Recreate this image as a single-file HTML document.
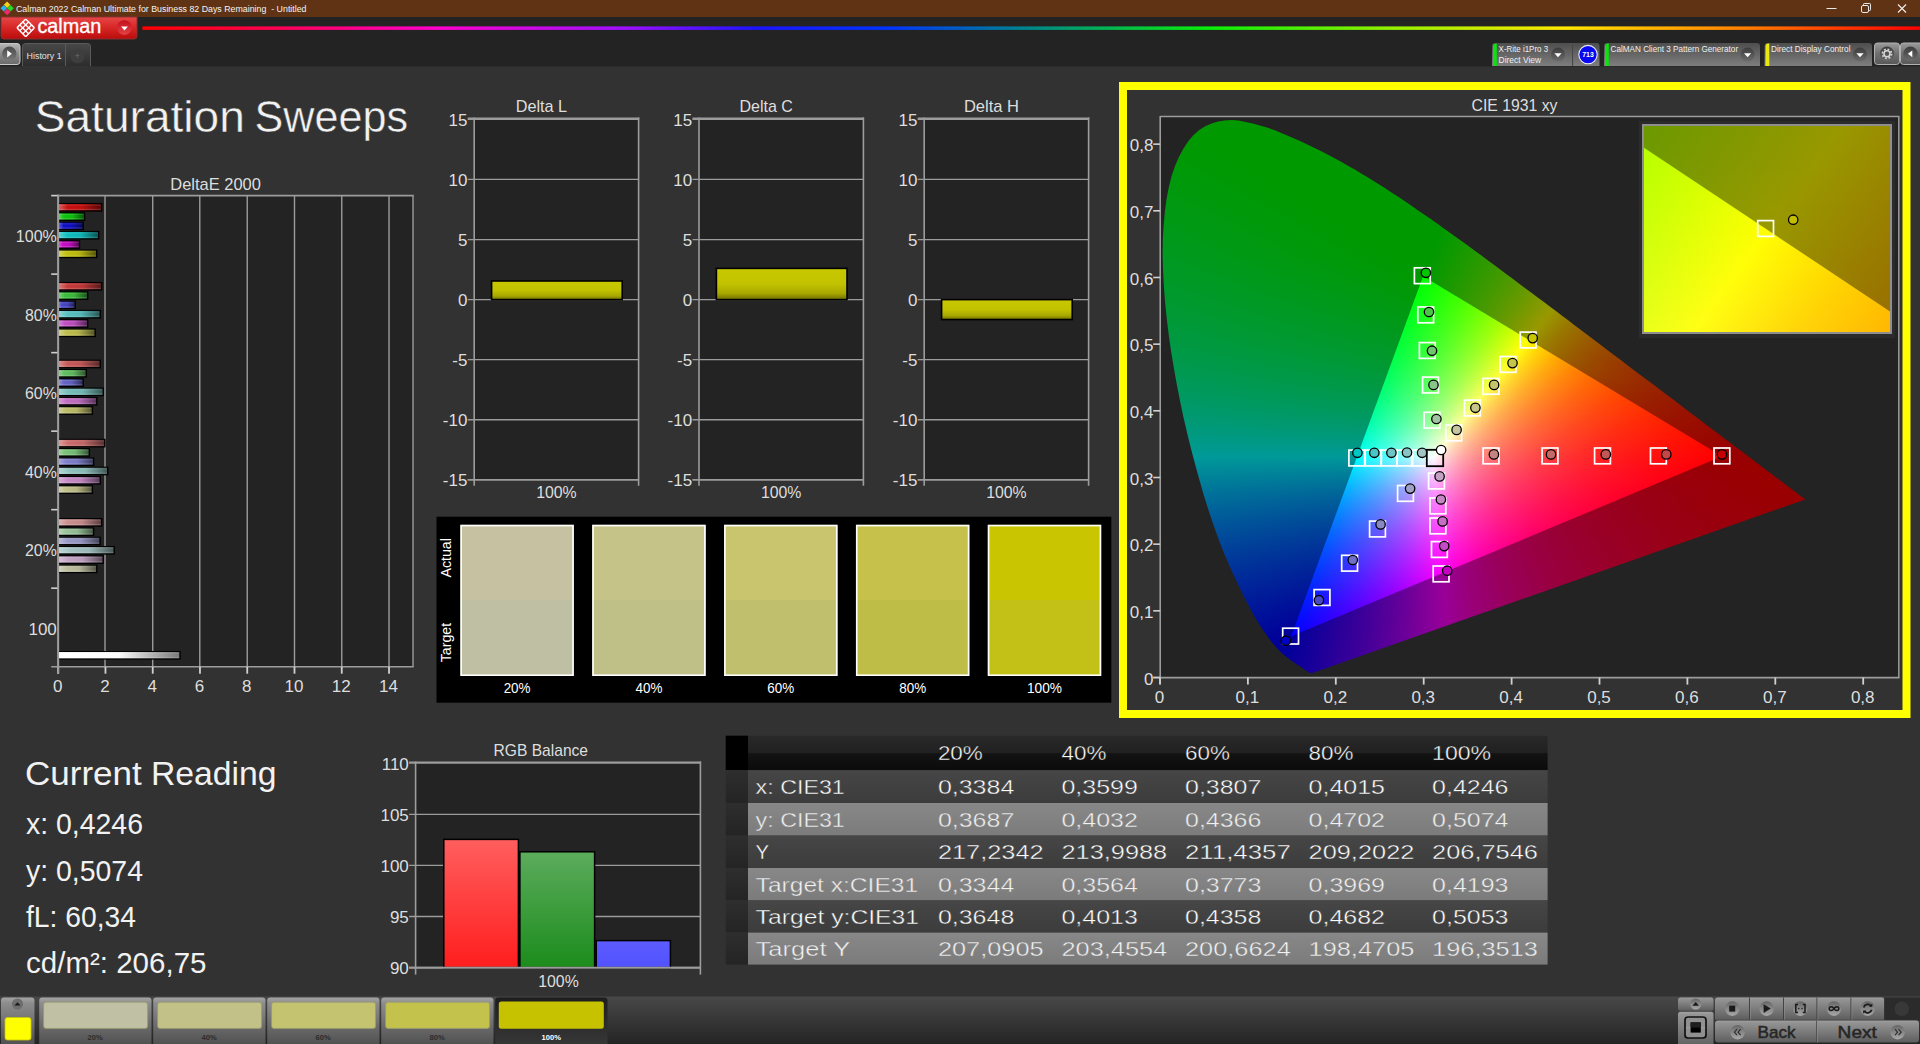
<!DOCTYPE html>
<html><head><meta charset="utf-8"><title>Calman</title>
<style>
html,body{margin:0;padding:0;background:#323232;overflow:hidden}
body{width:1920px;height:1044px;position:relative;font-family:"Liberation Sans", sans-serif}
.s{position:absolute;left:0;top:0}
.s text{font-family:"Liberation Sans", sans-serif}
.cl{position:absolute}
.cl i{display:block;height:1px}
</style></head><body>
<svg class="s" width="1920" height="1044" viewBox="0 0 1920 1044">
<defs><linearGradient id="cb" x1="0" y1="0" x2="0" y2="1"><stop offset="0" stop-color="#e64848"/><stop offset="0.45" stop-color="#d82828"/><stop offset="1" stop-color="#bb0c0c"/></linearGradient><linearGradient id="cdd" x1="0" y1="0" x2="0" y2="1"><stop offset="0" stop-color="#c40e1e"/><stop offset="1" stop-color="#e24444"/></linearGradient><linearGradient id="rb" x1="0" y1="0" x2="1" y2="0"><stop offset="0" stop-color="#ff0000"/><stop offset="0.08" stop-color="#ff0058"/><stop offset="0.165" stop-color="#ff00cc"/><stop offset="0.27" stop-color="#a010ff"/><stop offset="0.345" stop-color="#1c14ff"/><stop offset="0.42" stop-color="#0034ff"/><stop offset="0.5" stop-color="#008888"/><stop offset="0.6" stop-color="#08f008"/><stop offset="0.7" stop-color="#90f000"/><stop offset="0.8" stop-color="#ffe800"/><stop offset="0.9" stop-color="#ff8000"/><stop offset="1" stop-color="#ff0000"/></linearGradient><linearGradient id="pb" x1="0" y1="0" x2="0" y2="1"><stop offset="0" stop-color="#b8b8b8"/><stop offset="0.5" stop-color="#8a8a8a"/><stop offset="1" stop-color="#6a6a6a"/></linearGradient><linearGradient id="pc" x1="0" y1="0" x2="0" y2="1"><stop offset="0" stop-color="#4a4a4a"/><stop offset="1" stop-color="#7a7a7a"/></linearGradient><linearGradient id="tb" x1="0" y1="0" x2="0" y2="1"><stop offset="0" stop-color="#484848"/><stop offset="1" stop-color="#2c2c2c"/></linearGradient><linearGradient id="gb" x1="0" y1="0" x2="0" y2="1"><stop offset="0" stop-color="#4e4e4e"/><stop offset="1" stop-color="#7e7e7e"/></linearGradient><linearGradient id="dc" x1="0" y1="0" x2="0" y2="1"><stop offset="0" stop-color="#3c3c3c"/><stop offset="1" stop-color="#6c6c6c"/></linearGradient><linearGradient id="gb2" x1="0" y1="0" x2="0" y2="1"><stop offset="0" stop-color="#9a9a9a"/><stop offset="0.5" stop-color="#707070"/><stop offset="1" stop-color="#585858"/></linearGradient><linearGradient id="b1" x1="0" y1="0" x2="1" y2="0"><stop offset="0" stop-color="rgb(219, 99, 99)"/><stop offset="0.22" stop-color="rgb(200, 16, 16)"/><stop offset="0.55" stop-color="rgb(190, 15, 15)"/><stop offset="1" stop-color="rgb(90, 7, 7)"/></linearGradient><linearGradient id="b2" x1="0" y1="0" x2="1" y2="0"><stop offset="0" stop-color="rgb(99, 216, 99)"/><stop offset="0.22" stop-color="rgb(16, 196, 16)"/><stop offset="0.55" stop-color="rgb(15, 186, 15)"/><stop offset="1" stop-color="rgb(7, 88, 7)"/></linearGradient><linearGradient id="b3" x1="0" y1="0" x2="1" y2="0"><stop offset="0" stop-color="rgb(99, 99, 217)"/><stop offset="0.22" stop-color="rgb(16, 16, 198)"/><stop offset="0.55" stop-color="rgb(15, 15, 188)"/><stop offset="1" stop-color="rgb(7, 7, 89)"/></linearGradient><linearGradient id="b4" x1="0" y1="0" x2="1" y2="0"><stop offset="0" stop-color="rgb(99, 212, 212)"/><stop offset="0.22" stop-color="rgb(16, 190, 190)"/><stop offset="0.55" stop-color="rgb(15, 180, 180)"/><stop offset="1" stop-color="rgb(7, 85, 85)"/></linearGradient><linearGradient id="b5" x1="0" y1="0" x2="1" y2="0"><stop offset="0" stop-color="rgb(217, 99, 217)"/><stop offset="0.22" stop-color="rgb(198, 16, 198)"/><stop offset="0.55" stop-color="rgb(188, 15, 188)"/><stop offset="1" stop-color="rgb(89, 7, 89)"/></linearGradient><linearGradient id="b6" x1="0" y1="0" x2="1" y2="0"><stop offset="0" stop-color="rgb(214, 214, 99)"/><stop offset="0.22" stop-color="rgb(192, 192, 16)"/><stop offset="0.55" stop-color="rgb(182, 182, 15)"/><stop offset="1" stop-color="rgb(86, 86, 7)"/></linearGradient><linearGradient id="b7" x1="0" y1="0" x2="1" y2="0"><stop offset="0" stop-color="rgb(217, 126, 126)"/><stop offset="0.22" stop-color="rgb(198, 58, 58)"/><stop offset="0.55" stop-color="rgb(188, 55, 55)"/><stop offset="1" stop-color="rgb(89, 26, 26)"/></linearGradient><linearGradient id="b8" x1="0" y1="0" x2="1" y2="0"><stop offset="0" stop-color="rgb(129, 212, 129)"/><stop offset="0.22" stop-color="rgb(62, 190, 62)"/><stop offset="0.55" stop-color="rgb(58, 180, 58)"/><stop offset="1" stop-color="rgb(27, 85, 27)"/></linearGradient><linearGradient id="b9" x1="0" y1="0" x2="1" y2="0"><stop offset="0" stop-color="rgb(136, 136, 217)"/><stop offset="0.22" stop-color="rgb(72, 72, 198)"/><stop offset="0.55" stop-color="rgb(68, 68, 188)"/><stop offset="1" stop-color="rgb(32, 32, 89)"/></linearGradient><linearGradient id="b10" x1="0" y1="0" x2="1" y2="0"><stop offset="0" stop-color="rgb(146, 214, 214)"/><stop offset="0.22" stop-color="rgb(88, 192, 192)"/><stop offset="0.55" stop-color="rgb(83, 182, 182)"/><stop offset="1" stop-color="rgb(39, 86, 86)"/></linearGradient><linearGradient id="b11" x1="0" y1="0" x2="1" y2="0"><stop offset="0" stop-color="rgb(215, 142, 215)"/><stop offset="0.22" stop-color="rgb(194, 82, 194)"/><stop offset="0.55" stop-color="rgb(184, 77, 184)"/><stop offset="1" stop-color="rgb(87, 36, 87)"/></linearGradient><linearGradient id="b12" x1="0" y1="0" x2="1" y2="0"><stop offset="0" stop-color="rgb(212, 212, 139)"/><stop offset="0.22" stop-color="rgb(190, 190, 78)"/><stop offset="0.55" stop-color="rgb(180, 180, 74)"/><stop offset="1" stop-color="rgb(85, 85, 35)"/></linearGradient><linearGradient id="b13" x1="0" y1="0" x2="1" y2="0"><stop offset="0" stop-color="rgb(217, 146, 146)"/><stop offset="0.22" stop-color="rgb(198, 88, 88)"/><stop offset="0.55" stop-color="rgb(188, 83, 83)"/><stop offset="1" stop-color="rgb(89, 39, 39)"/></linearGradient><linearGradient id="b14" x1="0" y1="0" x2="1" y2="0"><stop offset="0" stop-color="rgb(152, 212, 152)"/><stop offset="0.22" stop-color="rgb(98, 190, 98)"/><stop offset="0.55" stop-color="rgb(93, 180, 93)"/><stop offset="1" stop-color="rgb(44, 85, 44)"/></linearGradient><linearGradient id="b15" x1="0" y1="0" x2="1" y2="0"><stop offset="0" stop-color="rgb(155, 155, 217)"/><stop offset="0.22" stop-color="rgb(102, 102, 198)"/><stop offset="0.55" stop-color="rgb(96, 96, 188)"/><stop offset="1" stop-color="rgb(45, 45, 89)"/></linearGradient><linearGradient id="b16" x1="0" y1="0" x2="1" y2="0"><stop offset="0" stop-color="rgb(165, 212, 210)"/><stop offset="0.22" stop-color="rgb(118, 190, 186)"/><stop offset="0.55" stop-color="rgb(112, 180, 176)"/><stop offset="1" stop-color="rgb(53, 85, 83)"/></linearGradient><linearGradient id="b17" x1="0" y1="0" x2="1" y2="0"><stop offset="0" stop-color="rgb(215, 162, 215)"/><stop offset="0.22" stop-color="rgb(194, 112, 194)"/><stop offset="0.55" stop-color="rgb(184, 106, 184)"/><stop offset="1" stop-color="rgb(87, 50, 87)"/></linearGradient><linearGradient id="b18" x1="0" y1="0" x2="1" y2="0"><stop offset="0" stop-color="rgb(212, 212, 159)"/><stop offset="0.22" stop-color="rgb(190, 190, 108)"/><stop offset="0.55" stop-color="rgb(180, 180, 102)"/><stop offset="1" stop-color="rgb(85, 85, 48)"/></linearGradient><linearGradient id="b19" x1="0" y1="0" x2="1" y2="0"><stop offset="0" stop-color="rgb(220, 159, 159)"/><stop offset="0.22" stop-color="rgb(202, 108, 108)"/><stop offset="0.55" stop-color="rgb(191, 102, 102)"/><stop offset="1" stop-color="rgb(90, 48, 48)"/></linearGradient><linearGradient id="b20" x1="0" y1="0" x2="1" y2="0"><stop offset="0" stop-color="rgb(168, 215, 168)"/><stop offset="0.22" stop-color="rgb(122, 194, 122)"/><stop offset="0.55" stop-color="rgb(115, 184, 115)"/><stop offset="1" stop-color="rgb(54, 87, 54)"/></linearGradient><linearGradient id="b21" x1="0" y1="0" x2="1" y2="0"><stop offset="0" stop-color="rgb(172, 172, 221)"/><stop offset="0.22" stop-color="rgb(128, 128, 204)"/><stop offset="0.55" stop-color="rgb(121, 121, 193)"/><stop offset="1" stop-color="rgb(57, 57, 91)"/></linearGradient><linearGradient id="b22" x1="0" y1="0" x2="1" y2="0"><stop offset="0" stop-color="rgb(182, 215, 212)"/><stop offset="0.22" stop-color="rgb(144, 194, 190)"/><stop offset="0.55" stop-color="rgb(136, 184, 180)"/><stop offset="1" stop-color="rgb(64, 87, 85)"/></linearGradient><linearGradient id="b23" x1="0" y1="0" x2="1" y2="0"><stop offset="0" stop-color="rgb(217, 178, 217)"/><stop offset="0.22" stop-color="rgb(198, 138, 198)"/><stop offset="0.55" stop-color="rgb(188, 131, 188)"/><stop offset="1" stop-color="rgb(89, 62, 89)"/></linearGradient><linearGradient id="b24" x1="0" y1="0" x2="1" y2="0"><stop offset="0" stop-color="rgb(214, 214, 178)"/><stop offset="0.22" stop-color="rgb(192, 192, 138)"/><stop offset="0.55" stop-color="rgb(182, 182, 131)"/><stop offset="1" stop-color="rgb(86, 86, 62)"/></linearGradient><linearGradient id="b25" x1="0" y1="0" x2="1" y2="0"><stop offset="0" stop-color="rgb(221, 182, 182)"/><stop offset="0.22" stop-color="rgb(204, 144, 144)"/><stop offset="0.55" stop-color="rgb(193, 136, 136)"/><stop offset="1" stop-color="rgb(91, 64, 64)"/></linearGradient><linearGradient id="b26" x1="0" y1="0" x2="1" y2="0"><stop offset="0" stop-color="rgb(189, 216, 189)"/><stop offset="0.22" stop-color="rgb(154, 196, 154)"/><stop offset="0.55" stop-color="rgb(146, 186, 146)"/><stop offset="1" stop-color="rgb(69, 88, 69)"/></linearGradient><linearGradient id="b27" x1="0" y1="0" x2="1" y2="0"><stop offset="0" stop-color="rgb(189, 189, 219)"/><stop offset="0.22" stop-color="rgb(154, 154, 200)"/><stop offset="0.55" stop-color="rgb(146, 146, 190)"/><stop offset="1" stop-color="rgb(69, 69, 90)"/></linearGradient><linearGradient id="b28" x1="0" y1="0" x2="1" y2="0"><stop offset="0" stop-color="rgb(195, 215, 215)"/><stop offset="0.22" stop-color="rgb(164, 194, 194)"/><stop offset="0.55" stop-color="rgb(155, 184, 184)"/><stop offset="1" stop-color="rgb(73, 87, 87)"/></linearGradient><linearGradient id="b29" x1="0" y1="0" x2="1" y2="0"><stop offset="0" stop-color="rgb(216, 195, 216)"/><stop offset="0.22" stop-color="rgb(196, 164, 196)"/><stop offset="0.55" stop-color="rgb(186, 155, 186)"/><stop offset="1" stop-color="rgb(88, 73, 88)"/></linearGradient><linearGradient id="b30" x1="0" y1="0" x2="1" y2="0"><stop offset="0" stop-color="rgb(212, 212, 193)"/><stop offset="0.22" stop-color="rgb(190, 190, 160)"/><stop offset="0.55" stop-color="rgb(180, 180, 152)"/><stop offset="1" stop-color="rgb(85, 85, 72)"/></linearGradient><linearGradient id="b31" x1="0" y1="0" x2="1" y2="0"><stop offset="0" stop-color="rgb(255, 255, 255)"/><stop offset="0.5" stop-color="rgb(250,250,250)"/><stop offset="1" stop-color="rgb(120, 120, 120)"/></linearGradient><linearGradient id="yb" x1="0" y1="0" x2="0" y2="1"><stop offset="0" stop-color="#c8c800"/><stop offset="0.5" stop-color="#c2c200"/><stop offset="0.8" stop-color="#a8a800"/><stop offset="1" stop-color="#6e6e00"/></linearGradient><linearGradient id="rr" x1="0" y1="0" x2="0" y2="1"><stop offset="0" stop-color="#ff5e5e"/><stop offset="1" stop-color="#ff1e1e"/></linearGradient><linearGradient id="rg" x1="0" y1="0" x2="0" y2="1"><stop offset="0" stop-color="#5cac5c"/><stop offset="1" stop-color="#1c8c1c"/></linearGradient><linearGradient id="rbb" x1="0" y1="0" x2="0" y2="1"><stop offset="0" stop-color="#5c5cff"/><stop offset="1" stop-color="#5252ff"/></linearGradient><linearGradient id="th" x1="0" y1="0" x2="0" y2="1"><stop offset="0" stop-color="#2a2a2a"/><stop offset="0.16" stop-color="#262626"/><stop offset="0.5" stop-color="#202020"/><stop offset="0.52" stop-color="#131313"/><stop offset="1" stop-color="#0b0b0b"/></linearGradient><linearGradient id="rd" x1="0" y1="0" x2="0" y2="1"><stop offset="0" stop-color="#464646"/><stop offset="1" stop-color="#3c3c3c"/></linearGradient><linearGradient id="rl" x1="0" y1="0" x2="0" y2="1"><stop offset="0" stop-color="#888888"/><stop offset="1" stop-color="#7b7b7b"/></linearGradient><linearGradient id="rs" x1="0" y1="0" x2="0" y2="1"><stop offset="0" stop-color="#2e2e2e"/><stop offset="1" stop-color="#242424"/></linearGradient><linearGradient id="bb" x1="0" y1="0" x2="0" y2="1"><stop offset="0" stop-color="#484848"/><stop offset="1" stop-color="#242424"/></linearGradient><linearGradient id="sb" x1="0" y1="0" x2="0" y2="1"><stop offset="0" stop-color="#a4a4a4"/><stop offset="0.12" stop-color="#8c8c8c"/><stop offset="1" stop-color="#4c4c4c"/></linearGradient><linearGradient id="sbs" x1="0" y1="0" x2="0" y2="1"><stop offset="0" stop-color="#1e1e1e"/><stop offset="1" stop-color="#383838"/></linearGradient><linearGradient id="cbt" x1="0" y1="0" x2="0" y2="1"><stop offset="0" stop-color="#a2a2a2"/><stop offset="0.08" stop-color="#949494"/><stop offset="0.5" stop-color="#7c7c7c"/><stop offset="1" stop-color="#5e5e5e"/></linearGradient><linearGradient id="cci" x1="0" y1="0" x2="0" y2="1"><stop offset="0" stop-color="#666666"/><stop offset="1" stop-color="#a8a8a8"/></linearGradient></defs>
<rect x="0" y="0" width="1920" height="1044" fill="#323232" />
<rect x="0" y="0" width="1920" height="17" fill="#5f3314" />
<rect x="0" y="17" width="1920" height="49.5" fill="#232323" />
<path d="M7.1 1.4L10.4 4.7L7.1 8L3.8 4.7Z" fill="#f2d21c"/>
<path d="M3.7 5L7 8.3L3.7 11.6L0.4 8.3Z" fill="#25b4ee"/>
<path d="M10.5 5L13.8 8.3L10.5 11.6L7.2 8.3Z" fill="#22dd22"/>
<path d="M7.1 8.6L10.4 11.9L7.1 15.2L3.8 11.9Z" fill="#f0286e"/>
<text x="16" y="12.2" font-size="9.7" fill="#f4f4f4" textLength="290.5" lengthAdjust="spacingAndGlyphs" xml:space="preserve">Calman 2022 Calman Ultimate for Business 82 Days Remaining  - Untitled</text>
<line x1="1826.5" y1="8.5" x2="1836.5" y2="8.5" stroke="#e8e8e8" stroke-width="1" />
<rect x="1861.5" y="5.5" width="7" height="7" rx="1.5" fill="none" stroke="#e8e8e8" stroke-width="1"/>
<path d="M1863.5 5.5v-1.2q0-0.8 0.8-0.8h5.4q0.8 0 0.8 0.8v5.4q0 0.8-0.8 0.8h-1.2" fill="none" stroke="#e8e8e8" stroke-width="1"/>
<path d="M1898 4.5l8 8M1906 4.5l-8 8" stroke="#f0f0f0" stroke-width="1.1" fill="none"/>
<path d="M1 17h136v19q0 3-3 3h-130q-3 0-3-3z" fill="url(#cb)" stroke="#8a3030" stroke-width="1"/>
<g transform="translate(25.7,27.85) rotate(45)" fill="none" stroke="#fff" stroke-width="1.5"><rect x="-6.2" y="-6.2" width="12.4" height="12.4" rx="1"/><path d="M-2.1 -6.2v12.4M2.1 -6.2v12.4M-6.2 -2.1h12.4M-6.2 2.1h12.4" stroke-width="1.3"/></g>
<text x="37.4" y="32.8" font-size="20" fill="#ffffff" textLength="63.9" lengthAdjust="spacingAndGlyphs" stroke="#fff" stroke-width="0.35">calman</text>
<circle cx="124.4" cy="27.6" r="7.4" fill="url(#cdd)"/>
<path d="M121.1 26.4h6.8l-3.4 4z" fill="#fff"/>
<rect x="142.4" y="26.4" width="1778" height="3.5" fill="url(#rb)" />
<path d="M-2 43.5h19q3 0 3 3v15q0 3-3 3h-19z" fill="url(#pb)" stroke="#c8c8c8" stroke-width="1"/>
<circle cx="9.3" cy="53.8" r="7.2" fill="url(#pc)"/>
<path d="M7.2 50.2l4.6 3.6l-4.6 3.6z" fill="#fff"/>
<path d="M22.5 66.5v-20q0-3 3-3h62q3 0 3 3v20" fill="url(#tb)" stroke="#5a5a5a" stroke-width="1"/>
<rect x="22" y="66" width="70" height="1" fill="#323232" />
<line x1="65.5" y1="44" x2="65.5" y2="66" stroke="#5a5a5a" stroke-width="1" />
<text x="26.6" y="58.5" font-size="9.6" fill="#e0e0e0" textLength="35" lengthAdjust="spacingAndGlyphs" >History 1</text>
<circle cx="77.5" cy="56.2" r="7" fill="#3e3e3e"/>
<text x="77.5" y="59.3" font-size="9" fill="#6a6a6a" text-anchor="middle" >+</text>
<path d="M1492 66v-20q0-3 3-3h101.5q3 0 3 3v20z" fill="url(#gb)"/>
<path d="M1493 66v-20q0-2.3 2.300-2.500h1.500v22.500z" fill="#10e010"/>
<text x="1498.6" y="52.2" font-size="8.2" fill="#f0f0f0" textLength="49.5" lengthAdjust="spacingAndGlyphs" >X-Rite i1Pro 3</text>
<text x="1498.6" y="63" font-size="8.2" fill="#f0f0f0" textLength="42.5" lengthAdjust="spacingAndGlyphs" >Direct View</text>
<circle cx="1558" cy="54.6" r="7" fill="url(#dc)"/>
<path d="M1554.4 53.300000000000004h7.2l-3.6 3.9z" fill="#fff"/>
<line x1="1572.6" y1="45" x2="1572.6" y2="66" stroke="#444" stroke-width="1" />
<circle cx="1588" cy="54.6" r="9.2" fill="#0808f0" stroke="#e8e8ff" stroke-width="1.1"/>
<text x="1588" y="57.4" font-size="7.8" fill="#ffffff" text-anchor="middle" textLength="11.5" lengthAdjust="spacingAndGlyphs" font-weight="bold" >713</text>
<path d="M1604 66v-20q0-3 3-3h150q3 0 3 3v20z" fill="url(#gb)"/>
<path d="M1605 66v-20q0-2.3 2.300-2.500h1.500v22.500z" fill="#10e010"/>
<text x="1610.6" y="52.2" font-size="8.2" fill="#f0f0f0" textLength="127.5" lengthAdjust="spacingAndGlyphs" >CalMAN Client 3 Pattern Generator</text>
<circle cx="1747.6" cy="54.6" r="7" fill="url(#dc)"/>
<path d="M1744.0 53.300000000000004h7.2l-3.6 3.9z" fill="#fff"/>
<path d="M1764.5 66v-20q0-3 3-3h101.5q3 0 3 3v20z" fill="url(#gb)"/>
<path d="M1765.5 66v-20q0-2.3 2.300-2.500h1.500v22.500z" fill="#e8e810"/>
<text x="1771" y="52.2" font-size="8.2" fill="#f0f0f0" textLength="79.5" lengthAdjust="spacingAndGlyphs" >Direct Display Control</text>
<circle cx="1860" cy="54.6" r="7" fill="url(#dc)"/>
<path d="M1856.4 53.300000000000004h7.2l-3.6 3.9z" fill="#fff"/>
<rect x="1874.5" y="43" width="25" height="21.5" rx="3" fill="url(#gb2)" stroke="#b0b0b0" stroke-width="1"/>
<rect x="1900.5" y="43" width="25" height="21.5" rx="3" fill="url(#gb2)" stroke="#b0b0b0" stroke-width="1"/>
<circle cx="1887" cy="53.8" r="7.3" fill="url(#dc)"/>
<circle cx="1910.5" cy="53.8" r="7.3" fill="url(#dc)"/>
<circle cx="1887" cy="53.8" r="3" fill="none" stroke="#d8d8d8" stroke-width="1.6"/>
<circle cx="1887" cy="53.8" r="4.6" fill="none" stroke="#d8d8d8" stroke-width="1.6" stroke-dasharray="1.8 1.81"/>
<path d="M1912.3 50.4l-4.4 3.4l4.4 3.4z" fill="#fff"/>
<text x="34.7" y="132.3" font-size="43.5" fill="#f2f2f2" textLength="210.2" lengthAdjust="spacingAndGlyphs" stroke="#323232" stroke-width="0.45">Saturation</text>
<text x="254.6" y="132.3" font-size="43.5" fill="#f2f2f2" textLength="153.5" lengthAdjust="spacingAndGlyphs" stroke="#323232" stroke-width="0.45">Sweeps</text>
<rect x="58.2" y="195.6" width="354.8" height="471.1" fill="#232323" />
<text x="215.6" y="190" font-size="16.6" fill="#dedede" text-anchor="middle" textLength="90.5" lengthAdjust="spacingAndGlyphs" >DeltaE 2000</text>
<line x1="105.01" y1="195.6" x2="105.01" y2="666.7" stroke="#9c9c9c" stroke-width="1.4" />
<line x1="152.72" y1="195.6" x2="152.72" y2="666.7" stroke="#9c9c9c" stroke-width="1.4" />
<line x1="199.78" y1="195.6" x2="199.78" y2="666.7" stroke="#9c9c9c" stroke-width="1.4" />
<line x1="247.24" y1="195.6" x2="247.24" y2="666.7" stroke="#9c9c9c" stroke-width="1.4" />
<line x1="294.5" y1="195.6" x2="294.5" y2="666.7" stroke="#9c9c9c" stroke-width="1.4" />
<line x1="341.76" y1="195.6" x2="341.76" y2="666.7" stroke="#9c9c9c" stroke-width="1.4" />
<line x1="389.02" y1="195.6" x2="389.02" y2="666.7" stroke="#9c9c9c" stroke-width="1.4" />
<line x1="58.2" y1="195.6" x2="413.7" y2="195.6" stroke="#9c9c9c" stroke-width="1.6" />
<line x1="413" y1="195.6" x2="413" y2="666.7" stroke="#9c9c9c" stroke-width="1.4" />
<line x1="51.2" y1="666.7" x2="413.7" y2="666.7" stroke="#9c9c9c" stroke-width="1.6" />
<line x1="58.2" y1="194.8" x2="58.2" y2="673.7" stroke="#9c9c9c" stroke-width="1.8" />
<line x1="51.2" y1="195.6" x2="58.2" y2="195.6" stroke="#d0d0d0" stroke-width="1.6" />
<line x1="51.2" y1="274.117" x2="58.2" y2="274.117" stroke="#d0d0d0" stroke-width="1.6" />
<line x1="51.2" y1="352.633" x2="58.2" y2="352.633" stroke="#d0d0d0" stroke-width="1.6" />
<line x1="51.2" y1="431.15" x2="58.2" y2="431.15" stroke="#d0d0d0" stroke-width="1.6" />
<line x1="51.2" y1="509.667" x2="58.2" y2="509.667" stroke="#d0d0d0" stroke-width="1.6" />
<line x1="51.2" y1="588.183" x2="58.2" y2="588.183" stroke="#d0d0d0" stroke-width="1.6" />
<line x1="58.2" y1="666.7" x2="58.2" y2="673.7" stroke="#d0d0d0" stroke-width="1.8" />
<text x="57.7" y="692" font-size="17" fill="#dedede" text-anchor="middle" >0</text>
<line x1="105.46" y1="666.7" x2="105.46" y2="673.7" stroke="#d0d0d0" stroke-width="1.8" />
<text x="104.96" y="692" font-size="17" fill="#dedede" text-anchor="middle" >2</text>
<line x1="152.72" y1="666.7" x2="152.72" y2="673.7" stroke="#d0d0d0" stroke-width="1.8" />
<text x="152.22" y="692" font-size="17" fill="#dedede" text-anchor="middle" >4</text>
<line x1="199.98" y1="666.7" x2="199.98" y2="673.7" stroke="#d0d0d0" stroke-width="1.8" />
<text x="199.48" y="692" font-size="17" fill="#dedede" text-anchor="middle" >6</text>
<line x1="247.24" y1="666.7" x2="247.24" y2="673.7" stroke="#d0d0d0" stroke-width="1.8" />
<text x="246.74" y="692" font-size="17" fill="#dedede" text-anchor="middle" >8</text>
<line x1="294.5" y1="666.7" x2="294.5" y2="673.7" stroke="#d0d0d0" stroke-width="1.8" />
<text x="294" y="692" font-size="17" fill="#dedede" text-anchor="middle" >10</text>
<line x1="341.76" y1="666.7" x2="341.76" y2="673.7" stroke="#d0d0d0" stroke-width="1.8" />
<text x="341.26" y="692" font-size="17" fill="#dedede" text-anchor="middle" >12</text>
<line x1="389.02" y1="666.7" x2="389.02" y2="673.7" stroke="#d0d0d0" stroke-width="1.8" />
<text x="388.52" y="692" font-size="17" fill="#dedede" text-anchor="middle" >14</text>
<text x="56.8" y="242.058" font-size="17" fill="#dedede" text-anchor="end" textLength="41" lengthAdjust="spacingAndGlyphs" >100%</text>
<text x="56.8" y="320.575" font-size="17" fill="#dedede" text-anchor="end" textLength="31.8" lengthAdjust="spacingAndGlyphs" >80%</text>
<text x="56.8" y="399.092" font-size="17" fill="#dedede" text-anchor="end" textLength="31.8" lengthAdjust="spacingAndGlyphs" >60%</text>
<text x="56.8" y="477.608" font-size="17" fill="#dedede" text-anchor="end" textLength="31.8" lengthAdjust="spacingAndGlyphs" >40%</text>
<text x="56.8" y="556.125" font-size="17" fill="#dedede" text-anchor="end" textLength="31.8" lengthAdjust="spacingAndGlyphs" >20%</text>
<text x="56.8" y="634.642" font-size="17" fill="#dedede" text-anchor="end" >100</text>
<rect x="58.2" y="202.95" width="44.2" height="8.7" fill="#000"/>
<rect x="58.2" y="204.05" width="42.8" height="6.3" fill="url(#b1)"/>
<rect x="58.2" y="204.65" width="42.8" height="1.1" fill="#fff" opacity="0.10"/>
<rect x="58.2" y="208.85" width="42.8" height="1.1" fill="#fff" opacity="0.16"/>
<rect x="58.2" y="212.25" width="27.1" height="8.7" fill="#000"/>
<rect x="58.2" y="213.35" width="25.7" height="6.3" fill="url(#b2)"/>
<rect x="58.2" y="213.95" width="25.7" height="1.1" fill="#fff" opacity="0.10"/>
<rect x="58.2" y="218.15" width="25.7" height="1.1" fill="#fff" opacity="0.16"/>
<rect x="58.2" y="221.55" width="25.7" height="8.7" fill="#000"/>
<rect x="58.2" y="222.65" width="24.3" height="6.3" fill="url(#b3)"/>
<rect x="58.2" y="223.25" width="24.3" height="1.1" fill="#fff" opacity="0.10"/>
<rect x="58.2" y="227.45" width="24.3" height="1.1" fill="#fff" opacity="0.16"/>
<rect x="58.2" y="230.85" width="41.2" height="8.7" fill="#000"/>
<rect x="58.2" y="231.95" width="39.8" height="6.3" fill="url(#b4)"/>
<rect x="58.2" y="232.55" width="39.8" height="1.1" fill="#fff" opacity="0.10"/>
<rect x="58.2" y="236.75" width="39.8" height="1.1" fill="#fff" opacity="0.16"/>
<rect x="58.2" y="240.15" width="22" height="8.7" fill="#000"/>
<rect x="58.2" y="241.25" width="20.6" height="6.3" fill="url(#b5)"/>
<rect x="58.2" y="241.85" width="20.6" height="1.1" fill="#fff" opacity="0.10"/>
<rect x="58.2" y="246.05" width="20.6" height="1.1" fill="#fff" opacity="0.16"/>
<rect x="58.2" y="249.45" width="39.2" height="8.7" fill="#000"/>
<rect x="58.2" y="250.55" width="37.8" height="6.3" fill="url(#b6)"/>
<rect x="58.2" y="251.15" width="37.8" height="1.1" fill="#fff" opacity="0.10"/>
<rect x="58.2" y="255.35" width="37.8" height="1.1" fill="#fff" opacity="0.16"/>
<rect x="58.2" y="281.95" width="44.2" height="8.7" fill="#000"/>
<rect x="58.2" y="283.05" width="42.8" height="6.3" fill="url(#b7)"/>
<rect x="58.2" y="283.65" width="42.8" height="1.1" fill="#fff" opacity="0.10"/>
<rect x="58.2" y="287.85" width="42.8" height="1.1" fill="#fff" opacity="0.16"/>
<rect x="58.2" y="291.25" width="30.2" height="8.7" fill="#000"/>
<rect x="58.2" y="292.35" width="28.8" height="6.3" fill="url(#b8)"/>
<rect x="58.2" y="292.95" width="28.8" height="1.1" fill="#fff" opacity="0.10"/>
<rect x="58.2" y="297.15" width="28.8" height="1.1" fill="#fff" opacity="0.16"/>
<rect x="58.2" y="300.55" width="17.7" height="8.7" fill="#000"/>
<rect x="58.2" y="301.65" width="16.3" height="6.3" fill="url(#b9)"/>
<rect x="58.2" y="302.25" width="16.3" height="1.1" fill="#fff" opacity="0.10"/>
<rect x="58.2" y="306.45" width="16.3" height="1.1" fill="#fff" opacity="0.16"/>
<rect x="58.2" y="309.85" width="42.8" height="8.7" fill="#000"/>
<rect x="58.2" y="310.95" width="41.4" height="6.3" fill="url(#b10)"/>
<rect x="58.2" y="311.55" width="41.4" height="1.1" fill="#fff" opacity="0.10"/>
<rect x="58.2" y="315.75" width="41.4" height="1.1" fill="#fff" opacity="0.16"/>
<rect x="58.2" y="319.15" width="30.2" height="8.7" fill="#000"/>
<rect x="58.2" y="320.25" width="28.8" height="6.3" fill="url(#b11)"/>
<rect x="58.2" y="320.85" width="28.8" height="1.1" fill="#fff" opacity="0.10"/>
<rect x="58.2" y="325.05" width="28.8" height="1.1" fill="#fff" opacity="0.16"/>
<rect x="58.2" y="328.45" width="37.7" height="8.7" fill="#000"/>
<rect x="58.2" y="329.55" width="36.3" height="6.3" fill="url(#b12)"/>
<rect x="58.2" y="330.15" width="36.3" height="1.1" fill="#fff" opacity="0.10"/>
<rect x="58.2" y="334.35" width="36.3" height="1.1" fill="#fff" opacity="0.16"/>
<rect x="58.2" y="359.65" width="42.8" height="8.7" fill="#000"/>
<rect x="58.2" y="360.75" width="41.4" height="6.3" fill="url(#b13)"/>
<rect x="58.2" y="361.35" width="41.4" height="1.1" fill="#fff" opacity="0.10"/>
<rect x="58.2" y="365.55" width="41.4" height="1.1" fill="#fff" opacity="0.16"/>
<rect x="58.2" y="368.95" width="28.8" height="8.7" fill="#000"/>
<rect x="58.2" y="370.05" width="27.4" height="6.3" fill="url(#b14)"/>
<rect x="58.2" y="370.65" width="27.4" height="1.1" fill="#fff" opacity="0.10"/>
<rect x="58.2" y="374.85" width="27.4" height="1.1" fill="#fff" opacity="0.16"/>
<rect x="58.2" y="378.25" width="25.7" height="8.7" fill="#000"/>
<rect x="58.2" y="379.35" width="24.3" height="6.3" fill="url(#b15)"/>
<rect x="58.2" y="379.95" width="24.3" height="1.1" fill="#fff" opacity="0.10"/>
<rect x="58.2" y="384.15" width="24.3" height="1.1" fill="#fff" opacity="0.16"/>
<rect x="58.2" y="387.55" width="45.8" height="8.7" fill="#000"/>
<rect x="58.2" y="388.65" width="44.4" height="6.3" fill="url(#b16)"/>
<rect x="58.2" y="389.25" width="44.4" height="1.1" fill="#fff" opacity="0.10"/>
<rect x="58.2" y="393.45" width="44.4" height="1.1" fill="#fff" opacity="0.16"/>
<rect x="58.2" y="396.85" width="39.3" height="8.7" fill="#000"/>
<rect x="58.2" y="397.95" width="37.9" height="6.3" fill="url(#b17)"/>
<rect x="58.2" y="398.55" width="37.9" height="1.1" fill="#fff" opacity="0.10"/>
<rect x="58.2" y="402.75" width="37.9" height="1.1" fill="#fff" opacity="0.16"/>
<rect x="58.2" y="406.15" width="34.9" height="8.7" fill="#000"/>
<rect x="58.2" y="407.25" width="33.5" height="6.3" fill="url(#b18)"/>
<rect x="58.2" y="407.85" width="33.5" height="1.1" fill="#fff" opacity="0.10"/>
<rect x="58.2" y="412.05" width="33.5" height="1.1" fill="#fff" opacity="0.16"/>
<rect x="58.2" y="438.75" width="47.3" height="8.7" fill="#000"/>
<rect x="58.2" y="439.85" width="45.9" height="6.3" fill="url(#b19)"/>
<rect x="58.2" y="440.45" width="45.9" height="1.1" fill="#fff" opacity="0.10"/>
<rect x="58.2" y="444.65" width="45.9" height="1.1" fill="#fff" opacity="0.16"/>
<rect x="58.2" y="448.05" width="31.85" height="8.7" fill="#000"/>
<rect x="58.2" y="449.15" width="30.45" height="6.3" fill="url(#b20)"/>
<rect x="58.2" y="449.75" width="30.45" height="1.1" fill="#fff" opacity="0.10"/>
<rect x="58.2" y="453.95" width="30.45" height="1.1" fill="#fff" opacity="0.16"/>
<rect x="58.2" y="457.35" width="36.1" height="8.7" fill="#000"/>
<rect x="58.2" y="458.45" width="34.7" height="6.3" fill="url(#b21)"/>
<rect x="58.2" y="459.05" width="34.7" height="1.1" fill="#fff" opacity="0.10"/>
<rect x="58.2" y="463.25" width="34.7" height="1.1" fill="#fff" opacity="0.16"/>
<rect x="58.2" y="466.65" width="50.25" height="8.7" fill="#000"/>
<rect x="58.2" y="467.75" width="48.85" height="6.3" fill="url(#b22)"/>
<rect x="58.2" y="468.35" width="48.85" height="1.1" fill="#fff" opacity="0.10"/>
<rect x="58.2" y="472.55" width="48.85" height="1.1" fill="#fff" opacity="0.16"/>
<rect x="58.2" y="475.95" width="42.8" height="8.7" fill="#000"/>
<rect x="58.2" y="477.05" width="41.4" height="6.3" fill="url(#b23)"/>
<rect x="58.2" y="477.65" width="41.4" height="1.1" fill="#fff" opacity="0.10"/>
<rect x="58.2" y="481.85" width="41.4" height="1.1" fill="#fff" opacity="0.16"/>
<rect x="58.2" y="485.25" width="34.9" height="8.7" fill="#000"/>
<rect x="58.2" y="486.35" width="33.5" height="6.3" fill="url(#b24)"/>
<rect x="58.2" y="486.95" width="33.5" height="1.1" fill="#fff" opacity="0.10"/>
<rect x="58.2" y="491.15" width="33.5" height="1.1" fill="#fff" opacity="0.16"/>
<rect x="58.2" y="518.05" width="44.2" height="8.7" fill="#000"/>
<rect x="58.2" y="519.15" width="42.8" height="6.3" fill="url(#b25)"/>
<rect x="58.2" y="519.75" width="42.8" height="1.1" fill="#fff" opacity="0.10"/>
<rect x="58.2" y="523.95" width="42.8" height="1.1" fill="#fff" opacity="0.16"/>
<rect x="58.2" y="527.35" width="36.1" height="8.7" fill="#000"/>
<rect x="58.2" y="528.45" width="34.7" height="6.3" fill="url(#b26)"/>
<rect x="58.2" y="529.05" width="34.7" height="1.1" fill="#fff" opacity="0.10"/>
<rect x="58.2" y="533.25" width="34.7" height="1.1" fill="#fff" opacity="0.16"/>
<rect x="58.2" y="536.65" width="42.6" height="8.7" fill="#000"/>
<rect x="58.2" y="537.75" width="41.2" height="6.3" fill="url(#b27)"/>
<rect x="58.2" y="538.35" width="41.2" height="1.1" fill="#fff" opacity="0.10"/>
<rect x="58.2" y="542.55" width="41.2" height="1.1" fill="#fff" opacity="0.16"/>
<rect x="58.2" y="545.95" width="56.7" height="8.7" fill="#000"/>
<rect x="58.2" y="547.05" width="55.3" height="6.3" fill="url(#b28)"/>
<rect x="58.2" y="547.65" width="55.3" height="1.1" fill="#fff" opacity="0.10"/>
<rect x="58.2" y="551.85" width="55.3" height="1.1" fill="#fff" opacity="0.16"/>
<rect x="58.2" y="555.25" width="45.7" height="8.7" fill="#000"/>
<rect x="58.2" y="556.35" width="44.3" height="6.3" fill="url(#b29)"/>
<rect x="58.2" y="556.95" width="44.3" height="1.1" fill="#fff" opacity="0.10"/>
<rect x="58.2" y="561.15" width="44.3" height="1.1" fill="#fff" opacity="0.16"/>
<rect x="58.2" y="564.55" width="39.3" height="8.7" fill="#000"/>
<rect x="58.2" y="565.65" width="37.9" height="6.3" fill="url(#b30)"/>
<rect x="58.2" y="566.25" width="37.9" height="1.1" fill="#fff" opacity="0.10"/>
<rect x="58.2" y="570.45" width="37.9" height="1.1" fill="#fff" opacity="0.16"/>
<rect x="58.2" y="650.95" width="122.5" height="8.7" fill="#000"/>
<rect x="58.2" y="652.05" width="121.1" height="6.3" fill="url(#b31)"/>
<rect x="58.2" y="652.65" width="121.1" height="1.1" fill="#fff" opacity="0.10"/>
<rect x="58.2" y="656.85" width="121.1" height="1.1" fill="#fff" opacity="0.16"/>
<line x1="58.2" y1="194.8" x2="58.2" y2="673.7" stroke="#9c9c9c" stroke-width="1.8" />
<rect x="474.2" y="119.4" width="164.4" height="360.4" fill="#232323" />
<text x="541.4" y="112.4" font-size="16.6" fill="#dedede" text-anchor="middle" textLength="51.5" lengthAdjust="spacingAndGlyphs" >Delta L</text>
<line x1="467.7" y1="119.4" x2="638.6" y2="119.4" stroke="#9c9c9c" stroke-width="1.3" />
<text x="467.4" y="125.7" font-size="17" fill="#dedede" text-anchor="end" >15</text>
<line x1="467.7" y1="179.47" x2="638.6" y2="179.47" stroke="#9c9c9c" stroke-width="1.3" />
<text x="467.4" y="185.77" font-size="17" fill="#dedede" text-anchor="end" >10</text>
<line x1="467.7" y1="239.54" x2="638.6" y2="239.54" stroke="#9c9c9c" stroke-width="1.3" />
<text x="467.4" y="245.84" font-size="17" fill="#dedede" text-anchor="end" >5</text>
<line x1="467.7" y1="299.61" x2="638.6" y2="299.61" stroke="#9c9c9c" stroke-width="1.3" />
<text x="467.4" y="305.91" font-size="17" fill="#dedede" text-anchor="end" >0</text>
<line x1="467.7" y1="359.68" x2="638.6" y2="359.68" stroke="#9c9c9c" stroke-width="1.3" />
<text x="467.4" y="365.98" font-size="17" fill="#dedede" text-anchor="end" >-5</text>
<line x1="467.7" y1="419.75" x2="638.6" y2="419.75" stroke="#9c9c9c" stroke-width="1.3" />
<text x="467.4" y="426.05" font-size="17" fill="#dedede" text-anchor="end" >-10</text>
<line x1="467.7" y1="479.82" x2="638.6" y2="479.82" stroke="#9c9c9c" stroke-width="1.3" />
<text x="467.4" y="486.12" font-size="17" fill="#dedede" text-anchor="end" >-15</text>
<line x1="467.7" y1="118.4" x2="639.3" y2="118.4" stroke="#9c9c9c" stroke-width="1.6" />
<line x1="474.2" y1="117.6" x2="474.2" y2="485.8" stroke="#9c9c9c" stroke-width="1.6" />
<line x1="638.6" y1="117.6" x2="638.6" y2="485.8" stroke="#9c9c9c" stroke-width="1.6" />
<line x1="467.7" y1="479.8" x2="638.6" y2="479.8" stroke="#9c9c9c" stroke-width="1.6" />
<text x="556.4" y="497.6" font-size="17" fill="#dedede" text-anchor="middle" textLength="40.5" lengthAdjust="spacingAndGlyphs" >100%</text>
<rect x="491.6" y="280.988" width="130.6" height="18.6217" fill="url(#yb)" stroke="#000" stroke-width="1.6"/>
<rect x="699" y="119.4" width="164.4" height="360.4" fill="#232323" />
<text x="766.2" y="112.4" font-size="16.6" fill="#dedede" text-anchor="middle" textLength="53.5" lengthAdjust="spacingAndGlyphs" >Delta C</text>
<line x1="692.5" y1="119.4" x2="863.4" y2="119.4" stroke="#9c9c9c" stroke-width="1.3" />
<text x="692.2" y="125.7" font-size="17" fill="#dedede" text-anchor="end" >15</text>
<line x1="692.5" y1="179.47" x2="863.4" y2="179.47" stroke="#9c9c9c" stroke-width="1.3" />
<text x="692.2" y="185.77" font-size="17" fill="#dedede" text-anchor="end" >10</text>
<line x1="692.5" y1="239.54" x2="863.4" y2="239.54" stroke="#9c9c9c" stroke-width="1.3" />
<text x="692.2" y="245.84" font-size="17" fill="#dedede" text-anchor="end" >5</text>
<line x1="692.5" y1="299.61" x2="863.4" y2="299.61" stroke="#9c9c9c" stroke-width="1.3" />
<text x="692.2" y="305.91" font-size="17" fill="#dedede" text-anchor="end" >0</text>
<line x1="692.5" y1="359.68" x2="863.4" y2="359.68" stroke="#9c9c9c" stroke-width="1.3" />
<text x="692.2" y="365.98" font-size="17" fill="#dedede" text-anchor="end" >-5</text>
<line x1="692.5" y1="419.75" x2="863.4" y2="419.75" stroke="#9c9c9c" stroke-width="1.3" />
<text x="692.2" y="426.05" font-size="17" fill="#dedede" text-anchor="end" >-10</text>
<line x1="692.5" y1="479.82" x2="863.4" y2="479.82" stroke="#9c9c9c" stroke-width="1.3" />
<text x="692.2" y="486.12" font-size="17" fill="#dedede" text-anchor="end" >-15</text>
<line x1="692.5" y1="118.4" x2="864.1" y2="118.4" stroke="#9c9c9c" stroke-width="1.6" />
<line x1="699" y1="117.6" x2="699" y2="485.8" stroke="#9c9c9c" stroke-width="1.6" />
<line x1="863.4" y1="117.6" x2="863.4" y2="485.8" stroke="#9c9c9c" stroke-width="1.6" />
<line x1="692.5" y1="479.8" x2="863.4" y2="479.8" stroke="#9c9c9c" stroke-width="1.6" />
<text x="781.2" y="497.6" font-size="17" fill="#dedede" text-anchor="middle" textLength="40.5" lengthAdjust="spacingAndGlyphs" >100%</text>
<rect x="716.4" y="268.374" width="130.6" height="31.2364" fill="url(#yb)" stroke="#000" stroke-width="1.6"/>
<rect x="924.2" y="119.4" width="164.4" height="360.4" fill="#232323" />
<text x="991.4" y="112.4" font-size="16.6" fill="#dedede" text-anchor="middle" textLength="55" lengthAdjust="spacingAndGlyphs" >Delta H</text>
<line x1="917.7" y1="119.4" x2="1088.6" y2="119.4" stroke="#9c9c9c" stroke-width="1.3" />
<text x="917.4" y="125.7" font-size="17" fill="#dedede" text-anchor="end" >15</text>
<line x1="917.7" y1="179.47" x2="1088.6" y2="179.47" stroke="#9c9c9c" stroke-width="1.3" />
<text x="917.4" y="185.77" font-size="17" fill="#dedede" text-anchor="end" >10</text>
<line x1="917.7" y1="239.54" x2="1088.6" y2="239.54" stroke="#9c9c9c" stroke-width="1.3" />
<text x="917.4" y="245.84" font-size="17" fill="#dedede" text-anchor="end" >5</text>
<line x1="917.7" y1="299.61" x2="1088.6" y2="299.61" stroke="#9c9c9c" stroke-width="1.3" />
<text x="917.4" y="305.91" font-size="17" fill="#dedede" text-anchor="end" >0</text>
<line x1="917.7" y1="359.68" x2="1088.6" y2="359.68" stroke="#9c9c9c" stroke-width="1.3" />
<text x="917.4" y="365.98" font-size="17" fill="#dedede" text-anchor="end" >-5</text>
<line x1="917.7" y1="419.75" x2="1088.6" y2="419.75" stroke="#9c9c9c" stroke-width="1.3" />
<text x="917.4" y="426.05" font-size="17" fill="#dedede" text-anchor="end" >-10</text>
<line x1="917.7" y1="479.82" x2="1088.6" y2="479.82" stroke="#9c9c9c" stroke-width="1.3" />
<text x="917.4" y="486.12" font-size="17" fill="#dedede" text-anchor="end" >-15</text>
<line x1="917.7" y1="118.4" x2="1089.3" y2="118.4" stroke="#9c9c9c" stroke-width="1.6" />
<line x1="924.2" y1="117.6" x2="924.2" y2="485.8" stroke="#9c9c9c" stroke-width="1.6" />
<line x1="1088.6" y1="117.6" x2="1088.6" y2="485.8" stroke="#9c9c9c" stroke-width="1.6" />
<line x1="917.7" y1="479.8" x2="1088.6" y2="479.8" stroke="#9c9c9c" stroke-width="1.6" />
<text x="1006.4" y="497.6" font-size="17" fill="#dedede" text-anchor="middle" textLength="40.5" lengthAdjust="spacingAndGlyphs" >100%</text>
<rect x="941.6" y="299.61" width="130.6" height="19.9432" fill="url(#yb)" stroke="#000" stroke-width="1.6"/>
<rect x="436.5" y="516.7" width="674.8" height="186" fill="#000" />
<rect x="460.4" y="524.8" width="113.4" height="75.4" fill="#c6c2a1" />
<rect x="460.4" y="600" width="113.4" height="76" fill="#bebfa3" />
<rect x="461.2" y="525.6" width="111.8" height="149.6" fill="none" stroke="#fff" stroke-width="1.6"/>
<text x="517.1" y="692.8" font-size="14.2" fill="#fff" text-anchor="middle" textLength="26.9" lengthAdjust="spacingAndGlyphs" >20%</text>
<rect x="592.25" y="524.8" width="113.4" height="75.4" fill="#c5c388" />
<rect x="592.25" y="600" width="113.4" height="76" fill="#bfbf88" />
<rect x="593.05" y="525.6" width="111.8" height="149.6" fill="none" stroke="#fff" stroke-width="1.6"/>
<text x="648.95" y="692.8" font-size="14.2" fill="#fff" text-anchor="middle" textLength="26.9" lengthAdjust="spacingAndGlyphs" >40%</text>
<rect x="724.1" y="524.8" width="113.4" height="75.4" fill="#c9c56f" />
<rect x="724.1" y="600" width="113.4" height="76" fill="#bfbf6d" />
<rect x="724.9" y="525.6" width="111.8" height="149.6" fill="none" stroke="#fff" stroke-width="1.6"/>
<text x="780.8" y="692.8" font-size="14.2" fill="#fff" text-anchor="middle" textLength="26.9" lengthAdjust="spacingAndGlyphs" >60%</text>
<rect x="855.95" y="524.8" width="113.4" height="75.4" fill="#c5c14a" />
<rect x="855.95" y="600" width="113.4" height="76" fill="#bebd48" />
<rect x="856.75" y="525.6" width="111.8" height="149.6" fill="none" stroke="#fff" stroke-width="1.6"/>
<text x="912.65" y="692.8" font-size="14.2" fill="#fff" text-anchor="middle" textLength="26.9" lengthAdjust="spacingAndGlyphs" >80%</text>
<rect x="987.8" y="524.8" width="113.4" height="75.4" fill="#c9c500" />
<rect x="987.8" y="600" width="113.4" height="76" fill="#c3c118" />
<rect x="988.6" y="525.6" width="111.8" height="149.6" fill="none" stroke="#fff" stroke-width="1.6"/>
<text x="1044.5" y="692.8" font-size="14.2" fill="#fff" text-anchor="middle" textLength="35" lengthAdjust="spacingAndGlyphs" >100%</text>
<text transform="translate(450.6,557.8) rotate(-90)" font-size="14.2" fill="#fff" text-anchor="middle">Actual</text>
<text transform="translate(450.6,642.6) rotate(-90)" font-size="14.2" fill="#fff" text-anchor="middle">Target</text>
<rect x="1123" y="86" width="783.5" height="628" fill="#323232" stroke="#ffff00" stroke-width="8"/>
<rect x="1160.2" y="116.6" width="738.6" height="561" fill="#232323" />
<text x="1514.5" y="110.9" font-size="16.6" fill="#dedede" text-anchor="middle" textLength="86" lengthAdjust="spacingAndGlyphs" >CIE 1931 xy</text>
<text x="1153.4" y="684.6" font-size="17" fill="#dedede" text-anchor="end" >0</text>
<text x="1159.5" y="703.2" font-size="17" fill="#dedede" text-anchor="middle" >0</text>
<text x="1153.4" y="617.93" font-size="17" fill="#dedede" text-anchor="end" >0,1</text>
<text x="1247.4" y="703.2" font-size="17" fill="#dedede" text-anchor="middle" >0,1</text>
<text x="1153.4" y="551.26" font-size="17" fill="#dedede" text-anchor="end" >0,2</text>
<text x="1335.3" y="703.2" font-size="17" fill="#dedede" text-anchor="middle" >0,2</text>
<text x="1153.4" y="484.59" font-size="17" fill="#dedede" text-anchor="end" >0,3</text>
<text x="1423.2" y="703.2" font-size="17" fill="#dedede" text-anchor="middle" >0,3</text>
<text x="1153.4" y="417.92" font-size="17" fill="#dedede" text-anchor="end" >0,4</text>
<text x="1511.1" y="703.2" font-size="17" fill="#dedede" text-anchor="middle" >0,4</text>
<text x="1153.4" y="351.25" font-size="17" fill="#dedede" text-anchor="end" >0,5</text>
<text x="1599" y="703.2" font-size="17" fill="#dedede" text-anchor="middle" >0,5</text>
<text x="1153.4" y="284.58" font-size="17" fill="#dedede" text-anchor="end" >0,6</text>
<text x="1686.9" y="703.2" font-size="17" fill="#dedede" text-anchor="middle" >0,6</text>
<text x="1153.4" y="217.91" font-size="17" fill="#dedede" text-anchor="end" >0,7</text>
<text x="1774.8" y="703.2" font-size="17" fill="#dedede" text-anchor="middle" >0,7</text>
<text x="1153.4" y="151.24" font-size="17" fill="#dedede" text-anchor="end" >0,8</text>
<text x="1862.7" y="703.2" font-size="17" fill="#dedede" text-anchor="middle" >0,8</text>
<text x="24.9" y="785" font-size="33.6" fill="#f2f2f2" textLength="116.9" lengthAdjust="spacingAndGlyphs" >Current</text>
<text x="150.9" y="785" font-size="33.6" fill="#f2f2f2" textLength="125.7" lengthAdjust="spacingAndGlyphs" >Reading</text>
<text x="26" y="833.9" font-size="28.7" fill="#f2f2f2" textLength="117" lengthAdjust="spacingAndGlyphs" >x: 0,4246</text>
<text x="26" y="880.6" font-size="28.7" fill="#f2f2f2" textLength="117" lengthAdjust="spacingAndGlyphs" >y: 0,5074</text>
<text x="26" y="926.8" font-size="28.7" fill="#f2f2f2" textLength="110" lengthAdjust="spacingAndGlyphs" >fL: 60,34</text>
<text x="26" y="973" font-size="28.7" fill="#f2f2f2" textLength="180.5" lengthAdjust="spacingAndGlyphs" >cd/m²: 206,75</text>
<rect x="415.6" y="763.2" width="284.8" height="204.4" fill="#232323" />
<text x="540.8" y="755.8" font-size="16.6" fill="#dedede" text-anchor="middle" textLength="94.5" lengthAdjust="spacingAndGlyphs" >RGB Balance</text>
<line x1="409.1" y1="763.2" x2="700.4" y2="763.2" stroke="#9c9c9c" stroke-width="1.3" />
<text x="408.8" y="769.5" font-size="17" fill="#dedede" text-anchor="end" >110</text>
<line x1="409.1" y1="814.3" x2="700.4" y2="814.3" stroke="#9c9c9c" stroke-width="1.3" />
<text x="408.8" y="820.6" font-size="17" fill="#dedede" text-anchor="end" >105</text>
<line x1="409.1" y1="865.4" x2="700.4" y2="865.4" stroke="#9c9c9c" stroke-width="1.3" />
<text x="408.8" y="871.7" font-size="17" fill="#dedede" text-anchor="end" >100</text>
<line x1="409.1" y1="916.5" x2="700.4" y2="916.5" stroke="#9c9c9c" stroke-width="1.3" />
<text x="408.8" y="922.8" font-size="17" fill="#dedede" text-anchor="end" >95</text>
<line x1="409.1" y1="967.6" x2="700.4" y2="967.6" stroke="#9c9c9c" stroke-width="1.3" />
<text x="408.8" y="973.9" font-size="17" fill="#dedede" text-anchor="end" >90</text>
<line x1="409.1" y1="762.3" x2="701.1" y2="762.3" stroke="#9c9c9c" stroke-width="1.6" />
<line x1="415.6" y1="761.5" x2="415.6" y2="974.6" stroke="#9c9c9c" stroke-width="1.6" />
<line x1="700.4" y1="761.5" x2="700.4" y2="974.6" stroke="#9c9c9c" stroke-width="1.6" />
<line x1="409.1" y1="967.6" x2="700.4" y2="967.6" stroke="#9c9c9c" stroke-width="1.6" />
<text x="558.5" y="987.4" font-size="17" fill="#dedede" text-anchor="middle" textLength="40.5" lengthAdjust="spacingAndGlyphs" >100%</text>
<rect x="443.8" y="839.4" width="74.6" height="128.2" fill="url(#rr)" stroke="#000" stroke-width="1.5"/>
<rect x="519.9" y="851.8" width="74.7" height="115.8" fill="url(#rg)" stroke="#000" stroke-width="1.5"/>
<rect x="596.2" y="940.6" width="74.2" height="27" fill="url(#rbb)" stroke="#000" stroke-width="1.5"/>
<line x1="409.1" y1="967.6" x2="700.4" y2="967.6" stroke="#9c9c9c" stroke-width="1.6" />
<rect x="725.7" y="735.7" width="22.3" height="34.5" fill="#000" />
<rect x="748" y="735.7" width="799.6" height="34.5" fill="url(#th)" />
<text x="937.9" y="760.1" font-size="20.2" fill="#fff" textLength="44.9" lengthAdjust="spacingAndGlyphs" stroke="#181818" stroke-width="0.4">20%</text>
<text x="1061.45" y="760.1" font-size="20.2" fill="#fff" textLength="44.9" lengthAdjust="spacingAndGlyphs" stroke="#181818" stroke-width="0.4">40%</text>
<text x="1185" y="760.1" font-size="20.2" fill="#fff" textLength="44.9" lengthAdjust="spacingAndGlyphs" stroke="#181818" stroke-width="0.4">60%</text>
<text x="1308.55" y="760.1" font-size="20.2" fill="#fff" textLength="44.9" lengthAdjust="spacingAndGlyphs" stroke="#181818" stroke-width="0.4">80%</text>
<text x="1432.1" y="760.1" font-size="20.2" fill="#fff" textLength="59" lengthAdjust="spacingAndGlyphs" stroke="#181818" stroke-width="0.4">100%</text>
<rect x="725.7" y="770.2" width="22.3" height="32.8" fill="url(#rs)" />
<rect x="748" y="770.2" width="799.6" height="32.8" fill="url(#rd)" />
<text x="755.6" y="794.2" font-size="20.2" fill="#ffffff" textLength="89.2" lengthAdjust="spacingAndGlyphs" stroke="#414141" stroke-width="0.4">x: CIE31</text>
<text x="937.9" y="794.2" font-size="20.2" fill="#ffffff" textLength="76.4" lengthAdjust="spacingAndGlyphs" stroke="#414141" stroke-width="0.4">0,3384</text>
<text x="1061.45" y="794.2" font-size="20.2" fill="#ffffff" textLength="76.4" lengthAdjust="spacingAndGlyphs" stroke="#414141" stroke-width="0.4">0,3599</text>
<text x="1185" y="794.2" font-size="20.2" fill="#ffffff" textLength="76.4" lengthAdjust="spacingAndGlyphs" stroke="#414141" stroke-width="0.4">0,3807</text>
<text x="1308.55" y="794.2" font-size="20.2" fill="#ffffff" textLength="76.4" lengthAdjust="spacingAndGlyphs" stroke="#414141" stroke-width="0.4">0,4015</text>
<text x="1432.1" y="794.2" font-size="20.2" fill="#ffffff" textLength="76.4" lengthAdjust="spacingAndGlyphs" stroke="#414141" stroke-width="0.4">0,4246</text>
<rect x="725.7" y="803" width="22.3" height="32.6" fill="url(#rs)" />
<rect x="748" y="803" width="799.6" height="32.6" fill="url(#rl)" />
<text x="755.6" y="826.9" font-size="20.2" fill="#f2f2f2" textLength="89.2" lengthAdjust="spacingAndGlyphs" stroke="#828282" stroke-width="0.4">y: CIE31</text>
<text x="937.9" y="826.9" font-size="20.2" fill="#f2f2f2" textLength="76.4" lengthAdjust="spacingAndGlyphs" stroke="#828282" stroke-width="0.4">0,3687</text>
<text x="1061.45" y="826.9" font-size="20.2" fill="#f2f2f2" textLength="76.4" lengthAdjust="spacingAndGlyphs" stroke="#828282" stroke-width="0.4">0,4032</text>
<text x="1185" y="826.9" font-size="20.2" fill="#f2f2f2" textLength="76.4" lengthAdjust="spacingAndGlyphs" stroke="#828282" stroke-width="0.4">0,4366</text>
<text x="1308.55" y="826.9" font-size="20.2" fill="#f2f2f2" textLength="76.4" lengthAdjust="spacingAndGlyphs" stroke="#828282" stroke-width="0.4">0,4702</text>
<text x="1432.1" y="826.9" font-size="20.2" fill="#f2f2f2" textLength="76.4" lengthAdjust="spacingAndGlyphs" stroke="#828282" stroke-width="0.4">0,5074</text>
<rect x="725.7" y="835.6" width="22.3" height="32.4" fill="url(#rs)" />
<rect x="748" y="835.6" width="799.6" height="32.4" fill="url(#rd)" />
<text x="755.6" y="859.4" font-size="20.2" fill="#ffffff" textLength="13.5" lengthAdjust="spacingAndGlyphs" stroke="#414141" stroke-width="0.4">Y</text>
<text x="937.9" y="859.4" font-size="20.2" fill="#ffffff" textLength="105.8" lengthAdjust="spacingAndGlyphs" stroke="#414141" stroke-width="0.4">217,2342</text>
<text x="1061.45" y="859.4" font-size="20.2" fill="#ffffff" textLength="105.8" lengthAdjust="spacingAndGlyphs" stroke="#414141" stroke-width="0.4">213,9988</text>
<text x="1185" y="859.4" font-size="20.2" fill="#ffffff" textLength="105.8" lengthAdjust="spacingAndGlyphs" stroke="#414141" stroke-width="0.4">211,4357</text>
<text x="1308.55" y="859.4" font-size="20.2" fill="#ffffff" textLength="105.8" lengthAdjust="spacingAndGlyphs" stroke="#414141" stroke-width="0.4">209,2022</text>
<text x="1432.1" y="859.4" font-size="20.2" fill="#ffffff" textLength="105.8" lengthAdjust="spacingAndGlyphs" stroke="#414141" stroke-width="0.4">206,7546</text>
<rect x="725.7" y="868" width="22.3" height="32.4" fill="url(#rs)" />
<rect x="748" y="868" width="799.6" height="32.4" fill="url(#rl)" />
<text x="755.6" y="891.8" font-size="20.2" fill="#f2f2f2" textLength="162.6" lengthAdjust="spacingAndGlyphs" stroke="#828282" stroke-width="0.4">Target x:CIE31</text>
<text x="937.9" y="891.8" font-size="20.2" fill="#f2f2f2" textLength="76.4" lengthAdjust="spacingAndGlyphs" stroke="#828282" stroke-width="0.4">0,3344</text>
<text x="1061.45" y="891.8" font-size="20.2" fill="#f2f2f2" textLength="76.4" lengthAdjust="spacingAndGlyphs" stroke="#828282" stroke-width="0.4">0,3564</text>
<text x="1185" y="891.8" font-size="20.2" fill="#f2f2f2" textLength="76.4" lengthAdjust="spacingAndGlyphs" stroke="#828282" stroke-width="0.4">0,3773</text>
<text x="1308.55" y="891.8" font-size="20.2" fill="#f2f2f2" textLength="76.4" lengthAdjust="spacingAndGlyphs" stroke="#828282" stroke-width="0.4">0,3969</text>
<text x="1432.1" y="891.8" font-size="20.2" fill="#f2f2f2" textLength="76.4" lengthAdjust="spacingAndGlyphs" stroke="#828282" stroke-width="0.4">0,4193</text>
<rect x="725.7" y="900.4" width="22.3" height="32.2" fill="url(#rs)" />
<rect x="748" y="900.4" width="799.6" height="32.2" fill="url(#rd)" />
<text x="755.6" y="924.1" font-size="20.2" fill="#ffffff" textLength="163.5" lengthAdjust="spacingAndGlyphs" stroke="#414141" stroke-width="0.4">Target y:CIE31</text>
<text x="937.9" y="924.1" font-size="20.2" fill="#ffffff" textLength="76.4" lengthAdjust="spacingAndGlyphs" stroke="#414141" stroke-width="0.4">0,3648</text>
<text x="1061.45" y="924.1" font-size="20.2" fill="#ffffff" textLength="76.4" lengthAdjust="spacingAndGlyphs" stroke="#414141" stroke-width="0.4">0,4013</text>
<text x="1185" y="924.1" font-size="20.2" fill="#ffffff" textLength="76.4" lengthAdjust="spacingAndGlyphs" stroke="#414141" stroke-width="0.4">0,4358</text>
<text x="1308.55" y="924.1" font-size="20.2" fill="#ffffff" textLength="76.4" lengthAdjust="spacingAndGlyphs" stroke="#414141" stroke-width="0.4">0,4682</text>
<text x="1432.1" y="924.1" font-size="20.2" fill="#ffffff" textLength="76.4" lengthAdjust="spacingAndGlyphs" stroke="#414141" stroke-width="0.4">0,5053</text>
<rect x="725.7" y="932.6" width="22.3" height="32" fill="url(#rs)" />
<rect x="748" y="932.6" width="799.6" height="32" fill="url(#rl)" />
<text x="755.6" y="956.2" font-size="20.2" fill="#f2f2f2" textLength="94.7" lengthAdjust="spacingAndGlyphs" stroke="#828282" stroke-width="0.4">Target Y</text>
<text x="937.9" y="956.2" font-size="20.2" fill="#f2f2f2" textLength="105.8" lengthAdjust="spacingAndGlyphs" stroke="#828282" stroke-width="0.4">207,0905</text>
<text x="1061.45" y="956.2" font-size="20.2" fill="#f2f2f2" textLength="105.8" lengthAdjust="spacingAndGlyphs" stroke="#828282" stroke-width="0.4">203,4554</text>
<text x="1185" y="956.2" font-size="20.2" fill="#f2f2f2" textLength="105.8" lengthAdjust="spacingAndGlyphs" stroke="#828282" stroke-width="0.4">200,6624</text>
<text x="1308.55" y="956.2" font-size="20.2" fill="#f2f2f2" textLength="105.8" lengthAdjust="spacingAndGlyphs" stroke="#828282" stroke-width="0.4">198,4705</text>
<text x="1432.1" y="956.2" font-size="20.2" fill="#f2f2f2" textLength="105.8" lengthAdjust="spacingAndGlyphs" stroke="#828282" stroke-width="0.4">196,3513</text>
<rect x="0" y="996.5" width="1920" height="48" fill="url(#bb)" />
<rect x="1" y="997.5" width="33.5" height="50" rx="3" fill="url(#sb)"/>
<circle cx="17.5" cy="1004" r="5.6" fill="#6e6e6e"/>
<path d="M14.4 1005.6l3.1-3.4l3.1 3.4z" fill="#1a1a1a"/>
<rect x="5" y="1017.5" width="26" height="22.5" rx="2.5" fill="#ffff00" stroke="#c8c800" stroke-width="0.8"/>
<rect x="39.2" y="997.5" width="112.3" height="50" rx="3" fill="url(#sb)"/>
<rect x="43.6" y="1002.2" width="104" height="26.2" rx="2.5" fill="#c0c0a4" stroke="#9a9a70" stroke-width="0.8"/>
<text x="95.2" y="1040" font-size="7.6" fill="#2c2c2c" text-anchor="middle" font-weight="bold" >20%</text>
<rect x="153.2" y="997.5" width="112.3" height="50" rx="3" fill="url(#sb)"/>
<rect x="157.6" y="1002.2" width="104" height="26.2" rx="2.5" fill="#c2c288" stroke="#9a9a70" stroke-width="0.8"/>
<text x="209.2" y="1040" font-size="7.6" fill="#2c2c2c" text-anchor="middle" font-weight="bold" >40%</text>
<rect x="267.2" y="997.5" width="112.3" height="50" rx="3" fill="url(#sb)"/>
<rect x="271.6" y="1002.2" width="104" height="26.2" rx="2.5" fill="#c4c470" stroke="#9a9a70" stroke-width="0.8"/>
<text x="323.2" y="1040" font-size="7.6" fill="#2c2c2c" text-anchor="middle" font-weight="bold" >60%</text>
<rect x="381.2" y="997.5" width="112.3" height="50" rx="3" fill="url(#sb)"/>
<rect x="385.6" y="1002.2" width="104" height="26.2" rx="2.5" fill="#c2c24c" stroke="#9a9a70" stroke-width="0.8"/>
<text x="437.2" y="1040" font-size="7.6" fill="#2c2c2c" text-anchor="middle" font-weight="bold" >80%</text>
<rect x="495.2" y="997.5" width="112.3" height="50" rx="3" fill="url(#sbs)"/>
<rect x="498.8" y="1001.4" width="105" height="27.4" rx="2.5" fill="#c6c200"/>
<text x="551.2" y="1040" font-size="7.6" fill="#ffffff" text-anchor="middle" font-weight="bold" >100%</text>
<rect x="1678" y="997.5" width="35.5" height="13.3" rx="2.5" fill="url(#cbt)"/>
<rect x="1678" y="1011.8" width="35.5" height="36" rx="2.5" fill="url(#cbt)"/>
<circle cx="1695.7" cy="1004" r="5.6" fill="url(#cci)"/>
<path d="M1692.4 1005.7l3.3-3.6l3.3 3.6z" fill="#1a1a1a"/>
<rect x="1685" y="1017" width="21" height="21" rx="3" fill="#909090" stroke="#111" stroke-width="1.7"/>
<rect x="1690.6" y="1022.4" width="10.2" height="10.2" fill="#000"/>
<rect x="1690.6" y="1022.4" width="10.2" height="5.2" fill="#1e1e1e"/>
<rect x="1686" y="1027.4" width="4.6" height="0.8" fill="#bbb" opacity="0.5"/><rect x="1700.8" y="1027.4" width="4.4" height="0.8" fill="#bbb" opacity="0.5"/>
<path d="M1715 1019.8v-19.8q0-2.5 2.5-2.5h164.3q2.5 0 2.5 2.5v19.8z" fill="url(#cbt)"/>
<circle cx="1732.3" cy="1008.6" r="7.3" fill="url(#cci)"/>
<rect x="1749.1" y="997.5" width="1" height="22.3" fill="#3c3c3c"/>
<rect x="1750.1" y="997.5" width="0.8" height="22.3" fill="#a8a8a8" opacity="0.5"/>
<circle cx="1766.6" cy="1008.6" r="7.3" fill="url(#cci)"/>
<rect x="1783.1" y="997.5" width="1" height="22.3" fill="#3c3c3c"/>
<rect x="1784.1" y="997.5" width="0.8" height="22.3" fill="#a8a8a8" opacity="0.5"/>
<circle cx="1800.3" cy="1008.6" r="7.3" fill="url(#cci)"/>
<rect x="1816.5" y="997.5" width="1" height="22.3" fill="#3c3c3c"/>
<rect x="1817.5" y="997.5" width="0.8" height="22.3" fill="#a8a8a8" opacity="0.5"/>
<circle cx="1834" cy="1008.6" r="7.3" fill="url(#cci)"/>
<rect x="1850.5" y="997.5" width="1" height="22.3" fill="#3c3c3c"/>
<rect x="1851.5" y="997.5" width="0.8" height="22.3" fill="#a8a8a8" opacity="0.5"/>
<circle cx="1867.65" cy="1008.6" r="7.3" fill="url(#cci)"/>
<rect x="1884.3" y="997.5" width="36" height="22.3" fill="#2b2b2b"/>
<circle cx="1901.8" cy="1008.8" r="7.3" fill="#383838"/>
<rect x="1729.2" y="1005.6" width="6" height="6" fill="#1a1a1a"/>
<path d="M1763.6 1004.2l7 4.4l-7 4.4z" fill="#1a1a1a"/>
<path d="M1798 1004.6h-2.2v8h2.2M1802.8 1004.6h2.2v8h-2.2" fill="none" stroke="#1a1a1a" stroke-width="1.5"/>
<rect x="1798.2" y="1007.9" width="1.2" height="1.4" fill="#1a1a1a"/><rect x="1801.4" y="1007.9" width="1.2" height="1.4" fill="#1a1a1a"/>
<path d="M1834 1008.6c-1.6-2.6-4.8-2.6-4.8 0s3.2 2.6 4.8 0s4.800-2.6 4.800 0s-3.200 2.600-4.800 0z" fill="none" stroke="#1a1a1a" stroke-width="1.5"/>
<path d="M1863.7 1007.4a4.2 4.2 0 0 1 7.4-1.4M1871.700 1009.800a4.200 4.200 0 0 1-7.400 1.400" fill="none" stroke="#1a1a1a" stroke-width="1.8"/>
<path d="M1869 1006.800h3.300v-3.300zM1866.400 1010.400h-3.300v3.300z" fill="#1a1a1a"/>
<path d="M1715 1023.600q0-3 3-3h198q3 0 3 3v15.900q0 3-3 3h-198q-3 0-3-3z" fill="url(#cbt)"/>
<rect x="1816.200" y="1020.600" width="1" height="21.900" fill="#4a4a4a"/><rect x="1817.200" y="1020.600" width="0.800" height="21.900" fill="#a8a8a8" opacity="0.5"/>
<circle cx="1737.600" cy="1032.200" r="7.200" fill="url(#cci)"/>
<circle cx="1897.600" cy="1032.200" r="7.200" fill="url(#cci)"/>
<path d="M1737 1029.200l-2.600 3l2.600 3M1740.600 1029.200l-2.600 3l2.600 3" fill="none" stroke="#2a2a2a" stroke-width="1.100"/>
<path d="M1895 1029.200l2.600 3l-2.600 3M1898.600 1029.200l2.600 3l-2.600 3" fill="none" stroke="#2a2a2a" stroke-width="1.100"/>
<text x="1757.6" y="1038.2" font-size="16.6" fill="#262626" textLength="38" lengthAdjust="spacingAndGlyphs" stroke="#262626" stroke-width="0.5">Back</text>
<text x="1837.6" y="1038.2" font-size="16.6" fill="#262626" textLength="39.3" lengthAdjust="spacingAndGlyphs" stroke="#262626" stroke-width="0.500">Next</text>
</svg>
<div class="cl" style="left:1160px;top:118px;width:650px;height:560px;clip-path:polygon(152.4px 555.0px,152.4px 555.0px,152.4px 555.0px,152.4px 555.0px,152.4px 555.0px,152.3px 555.0px,152.3px 555.0px,152.3px 555.0px,152.2px 555.0px,152.2px 555.0px,152.2px 555.0px,152.1px 555.0px,152.1px 555.0px,152.1px 555.0px,152.0px 555.0px,152.0px 555.0px,151.9px 555.0px,151.9px 555.1px,151.8px 555.1px,151.8px 555.1px,151.7px 555.1px,151.7px 555.1px,151.6px 555.1px,151.6px 555.1px,151.5px 555.1px,151.5px 555.1px,151.4px 555.1px,151.3px 555.1px,151.3px 555.1px,151.2px 555.1px,151.1px 555.1px,151.0px 555.1px,151.0px 555.1px,150.9px 555.1px,150.8px 555.1px,150.7px 555.1px,150.6px 555.1px,150.5px 555.0px,150.3px 555.0px,150.2px 555.0px,150.1px 554.9px,149.9px 554.8px,149.7px 554.7px,149.5px 554.7px,149.3px 554.5px,149.1px 554.4px,148.9px 554.3px,148.6px 554.2px,148.4px 554.0px,148.1px 553.9px,147.9px 553.7px,147.6px 553.5px,147.2px 553.3px,146.9px 553.1px,146.5px 552.8px,146.1px 552.6px,145.7px 552.3px,145.3px 552.0px,144.9px 551.7px,144.4px 551.4px,143.9px 551.0px,143.4px 550.7px,142.8px 550.3px,142.3px 549.9px,141.7px 549.5px,141.0px 549.1px,140.3px 548.6px,139.5px 548.1px,138.8px 547.6px,137.9px 547.1px,137.1px 546.5px,136.1px 545.9px,135.2px 545.3px,134.2px 544.6px,133.2px 543.9px,132.1px 543.2px,131.0px 542.4px,129.8px 541.5px,128.6px 540.6px,127.3px 539.6px,126.0px 538.5px,124.6px 537.4px,123.2px 536.2px,121.7px 534.9px,120.2px 533.4px,118.5px 531.7px,116.7px 529.8px,114.8px 527.6px,112.8px 525.3px,110.7px 522.7px,108.5px 519.8px,106.2px 516.6px,103.7px 513.1px,101.2px 509.3px,98.5px 505.1px,95.7px 500.4px,92.8px 495.3px,89.7px 489.7px,86.5px 483.7px,83.2px 477.1px,79.7px 469.8px,75.9px 462.0px,72.0px 453.6px,68.0px 444.6px,63.9px 434.9px,59.8px 424.5px,55.7px 413.3px,51.6px 401.4px,47.4px 388.7px,43.3px 375.5px,39.3px 361.6px,35.3px 347.0px,31.2px 331.6px,27.3px 315.7px,23.5px 299.4px,20.1px 283.2px,16.8px 266.6px,13.8px 249.7px,11.0px 232.7px,8.6px 215.8px,6.6px 199.3px,5.0px 183.2px,3.8px 167.2px,3.0px 151.5px,2.6px 136.3px,2.8px 121.7px,3.6px 107.8px,4.8px 94.2px,6.5px 81.3px,8.8px 69.2px,11.6px 58.1px,15.0px 48.0px,19.0px 38.8px,23.5px 30.4px,28.4px 23.1px,33.6px 16.9px,39.2px 12.0px,45.2px 8.3px,51.5px 5.5px,58.1px 3.6px,64.7px 2.4px,71.5px 2.0px,78.4px 2.6px,85.5px 3.9px,92.7px 5.6px,99.8px 7.5px,106.9px 9.6px,114.1px 12.1px,121.3px 15.0px,128.4px 18.0px,135.4px 21.0px,142.2px 24.0px,149.0px 27.2px,155.7px 30.5px,162.4px 33.8px,169.0px 37.2px,175.5px 40.7px,182.0px 44.3px,188.4px 47.9px,194.8px 51.6px,201.2px 55.4px,207.6px 59.3px,214.0px 63.2px,220.4px 67.2px,226.7px 71.3px,233.0px 75.4px,239.4px 79.6px,245.7px 83.8px,251.9px 88.1px,258.2px 92.4px,264.5px 96.7px,270.8px 101.1px,277.1px 105.6px,283.3px 110.0px,289.6px 114.5px,295.9px 119.0px,302.2px 123.6px,308.5px 128.1px,314.8px 132.7px,321.1px 137.3px,327.4px 141.9px,333.6px 146.6px,339.9px 151.2px,346.2px 155.9px,352.4px 160.6px,358.6px 165.2px,364.9px 169.9px,371.1px 174.5px,377.4px 179.2px,383.6px 183.8px,389.8px 188.5px,395.9px 193.1px,402.1px 197.7px,408.2px 202.3px,414.2px 206.9px,420.3px 211.5px,426.3px 216.0px,432.2px 220.5px,438.2px 225.0px,444.1px 229.5px,449.9px 233.9px,455.7px 238.3px,461.4px 242.6px,467.1px 246.9px,472.7px 251.2px,478.3px 255.4px,483.8px 259.5px,489.2px 263.6px,494.6px 267.6px,499.8px 271.6px,505.0px 275.5px,510.1px 279.3px,515.1px 283.1px,520.0px 286.8px,524.7px 290.4px,529.3px 294.0px,533.8px 297.3px,538.2px 300.6px,542.4px 303.8px,546.5px 306.9px,550.5px 310.0px,554.5px 312.9px,558.3px 315.8px,562.1px 318.7px,565.7px 321.4px,569.2px 324.0px,572.5px 326.5px,575.7px 328.9px,578.8px 331.2px,581.8px 333.5px,584.6px 335.6px,587.4px 337.7px,590.0px 339.7px,592.5px 341.6px,594.9px 343.4px,597.2px 345.2px,599.4px 346.8px,601.5px 348.4px,603.5px 349.9px,605.4px 351.4px,607.2px 352.8px,609.0px 354.1px,610.6px 355.3px,612.2px 356.5px,613.8px 357.7px,615.2px 358.8px,616.6px 359.8px,618.0px 360.8px,619.2px 361.8px,620.5px 362.7px,621.6px 363.6px,622.8px 364.5px,623.9px 365.3px,625.0px 366.2px,626.0px 366.9px,627.0px 367.7px,628.0px 368.4px,628.9px 369.1px,629.8px 369.8px,630.6px 370.4px,631.4px 371.0px,632.2px 371.6px,632.9px 372.1px,633.6px 372.7px,634.3px 373.2px,634.9px 373.6px,635.5px 374.1px,636.1px 374.5px,636.6px 374.9px,637.1px 375.3px,637.6px 375.6px,638.0px 376.0px,638.4px 376.3px,638.8px 376.6px,639.2px 376.9px,639.6px 377.2px,639.9px 377.4px,640.2px 377.7px,640.5px 377.9px,640.8px 378.1px,641.1px 378.3px,641.3px 378.5px,641.5px 378.6px,641.7px 378.8px,641.9px 378.9px,642.0px 379.0px,642.2px 379.2px,642.4px 379.3px,642.5px 379.4px,642.7px 379.5px,642.8px 379.6px,643.0px 379.7px,643.1px 379.8px,643.2px 379.9px,643.3px 380.0px,643.4px 380.1px,643.6px 380.2px,643.7px 380.3px,643.8px 380.4px,643.9px 380.5px,644.1px 380.6px,644.2px 380.6px,644.3px 380.7px,644.4px 380.8px,644.5px 380.9px,644.6px 381.0px,644.7px 381.0px,644.7px 381.1px,644.8px 381.1px,644.9px 381.2px,644.9px 381.2px,645.0px 381.3px,645.0px 381.3px,645.1px 381.3px,645.1px 381.3px,645.1px 381.4px,645.1px 381.4px,645.2px 381.4px,645.2px 381.4px,645.2px 381.4px,645.2px 381.4px)"><i></i><i></i><i style="background:linear-gradient(90deg,#090 60px,#090 82px)"></i><i style="background:linear-gradient(90deg,#090 55px,#090 87px)"></i><i style="background:linear-gradient(90deg,#090 52px,#090 92px)"></i><i style="background:linear-gradient(90deg,#090 49px,#090 96px)"></i><i style="background:linear-gradient(90deg,#090 47px,#090 99px)"></i><i style="background:linear-gradient(90deg,#090 44px,#090 103px)"></i><i style="background:linear-gradient(90deg,#090 43px,#090 106px)"></i><i style="background:linear-gradient(90deg,#090 41px,#090 110px)"></i><i style="background:linear-gradient(90deg,#090 39px,#090 112px)"></i><i style="background:linear-gradient(90deg,#090 38px,#090 115px)"></i><i style="background:linear-gradient(90deg,#090 37px,#090 118px)"></i><i style="background:linear-gradient(90deg,#090 35px,#090 120px)"></i><i style="background:linear-gradient(90deg,#090 34px,#090 123px)"></i><i style="background:linear-gradient(90deg,#090 33px,#090 125px)"></i><i style="background:linear-gradient(90deg,#090 32px,#090 128px)"></i><i style="background:linear-gradient(90deg,#090 31px,#090 130px)"></i><i style="background:linear-gradient(90deg,#090 30px,#090 132px)"></i><i style="background:linear-gradient(90deg,#090 30px,#090 135px)"></i><i style="background:linear-gradient(90deg,#009901 29px,#090 137px)"></i><i style="background:linear-gradient(90deg,#009901 28px,#090 139px)"></i><i style="background:linear-gradient(90deg,#009901 27px,#090 141px)"></i><i style="background:linear-gradient(90deg,#009902 26px,#090 144px)"></i><i style="background:linear-gradient(90deg,#009902 26px,#090 146px)"></i><i style="background:linear-gradient(90deg,#009902 25px,#090 93px,#090 148px)"></i><i style="background:linear-gradient(90deg,#009902 24px,#090 79px,#090 150px)"></i><i style="background:linear-gradient(90deg,#009903 24px,#090 77px,#090 152px)"></i><i style="background:linear-gradient(90deg,#009903 23px,#090 74px,#090 154px)"></i><i style="background:linear-gradient(90deg,#009903 22px,#090 73px,#090 156px)"></i><i style="background:linear-gradient(90deg,#009903 22px,#090 73px,#090 158px)"></i><i style="background:linear-gradient(90deg,#009904 21px,#090 73px,#090 160px)"></i><i style="background:linear-gradient(90deg,#009904 21px,#090 74px,#090 162px)"></i><i style="background:linear-gradient(90deg,#009904 20px,#090 75px,#090 164px)"></i><i style="background:linear-gradient(90deg,#009904 20px,#090 76px,#090 166px)"></i><i style="background:linear-gradient(90deg,#009905 19px,#090 77px,#090 168px)"></i><i style="background:linear-gradient(90deg,#009905 18px,#090 78px,#090 170px)"></i><i style="background:linear-gradient(90deg,#009905 18px,#090 79px,#090 172px)"></i><i style="background:linear-gradient(90deg,#009906 17px,#090 81px,#090 174px)"></i><i style="background:linear-gradient(90deg,#009906 17px,#090 82px,#090 176px)"></i><i style="background:linear-gradient(90deg,#009906 17px,#090 83px,#090 178px)"></i><i style="background:linear-gradient(90deg,#009906 16px,#090 85px,#090 179px)"></i><i style="background:linear-gradient(90deg,#009907 16px,#090 86px,#090 181px)"></i><i style="background:linear-gradient(90deg,#009907 15px,#090 87px,#090 183px)"></i><i style="background:linear-gradient(90deg,#009907 15px,#090 89px,#090 185px)"></i><i style="background:linear-gradient(90deg,#009907 14px,#090 90px,#090 187px)"></i><i style="background:linear-gradient(90deg,#009908 14px,#090 92px,#090 188px)"></i><i style="background:linear-gradient(90deg,#009908 14px,#090 94px,#090 190px)"></i><i style="background:linear-gradient(90deg,#009908 13px,#090 95px,#090 192px)"></i><i style="background:linear-gradient(90deg,#009908 13px,#090 96px,#090 194px)"></i><i style="background:linear-gradient(90deg,#009909 13px,#090 98px,#090 195px)"></i><i style="background:linear-gradient(90deg,#009909 12px,#090 100px,#090 197px)"></i><i style="background:linear-gradient(90deg,#009909 12px,#090 101px,#090 199px)"></i><i style="background:linear-gradient(90deg,#009909 12px,#090 103px,#090 200px)"></i><i style="background:linear-gradient(90deg,#00990a 11px,#090 104px,#090 202px)"></i><i style="background:linear-gradient(90deg,#00990a 11px,#090 106px,#090 204px)"></i><i style="background:linear-gradient(90deg,#00990a 11px,#090 108px,#090 205px)"></i><i style="background:linear-gradient(90deg,#00990b 10px,#090 109px,#090 207px)"></i><i style="background:linear-gradient(90deg,#00990b 10px,#090 111px,#090 209px)"></i><i style="background:linear-gradient(90deg,#00990b 10px,#090 112px,#090 210px)"></i><i style="background:linear-gradient(90deg,#00990b 9px,#090 114px,#090 212px)"></i><i style="background:linear-gradient(90deg,#00990c 9px,#090 115px,#090 214px)"></i><i style="background:linear-gradient(90deg,#00990c 9px,#090 117px,#090 215px)"></i><i style="background:linear-gradient(90deg,#00990c 9px,#090 118px,#090 217px)"></i><i style="background:linear-gradient(90deg,#00990c 8px,#090 120px,#090 218px)"></i><i style="background:linear-gradient(90deg,#00990d 8px,#090 122px,#090 220px)"></i><i style="background:linear-gradient(90deg,#00990d 8px,#090 123px,#090 221px)"></i><i style="background:linear-gradient(90deg,#00990d 8px,#090 125px,#090 223px)"></i><i style="background:linear-gradient(90deg,#00990d 7px,#090 127px,#090 225px)"></i><i style="background:linear-gradient(90deg,#00990e 7px,#090 128px,#090 226px)"></i><i style="background:linear-gradient(90deg,#00990e 7px,#090 130px,#090 228px)"></i><i style="background:linear-gradient(90deg,#00990e 7px,#090 131px,#090 229px)"></i><i style="background:linear-gradient(90deg,#00990e 7px,#090 133px,#090 231px)"></i><i style="background:linear-gradient(90deg,#00990f 6px,#090 135px,#090 232px)"></i><i style="background:linear-gradient(90deg,#00990f 6px,#090 136px,#090 234px)"></i><i style="background:linear-gradient(90deg,#00990f 6px,#090 138px,#090 235px)"></i><i style="background:linear-gradient(90deg,#00990f 6px,#090 139px,#090 237px)"></i><i style="background:linear-gradient(90deg,#009910 6px,#090 141px,#090 238px)"></i><i style="background:linear-gradient(90deg,#009910 5px,#090 143px,#090 240px)"></i><i style="background:linear-gradient(90deg,#009910 5px,#090 144px,#090 241px)"></i><i style="background:linear-gradient(90deg,#091 5px,#090 146px,#090 243px)"></i><i style="background:linear-gradient(90deg,#091 5px,#090 147px,#090 244px)"></i><i style="background:linear-gradient(90deg,#091 5px,#090 149px,#090 246px)"></i><i style="background:linear-gradient(90deg,#091 5px,#090 151px,#090 247px)"></i><i style="background:linear-gradient(90deg,#009912 5px,#090 152px,#090 249px)"></i><i style="background:linear-gradient(90deg,#009912 4px,#090 154px,#090 250px)"></i><i style="background:linear-gradient(90deg,#009912 4px,#090 156px,#090 252px)"></i><i style="background:linear-gradient(90deg,#009912 4px,#090 157px,#090 253px)"></i><i style="background:linear-gradient(90deg,#009913 4px,#090 159px,#090 255px)"></i><i style="background:linear-gradient(90deg,#009913 4px,#090 160px,#090 256px)"></i><i style="background:linear-gradient(90deg,#009913 4px,#090 162px,#090 258px)"></i><i style="background:linear-gradient(90deg,#009914 4px,#090 164px,#090 259px)"></i><i style="background:linear-gradient(90deg,#009914 3px,#090 165px,#090 261px)"></i><i style="background:linear-gradient(90deg,#009914 3px,#090 167px,#090 262px)"></i><i style="background:linear-gradient(90deg,#009914 3px,#090 169px,#090 263px)"></i><i style="background:linear-gradient(90deg,#009915 3px,#090 170px,#090 265px)"></i><i style="background:linear-gradient(90deg,#009915 3px,#090 172px,#090 266px)"></i><i style="background:linear-gradient(90deg,#009915 3px,#090 173px,#090 268px)"></i><i style="background:linear-gradient(90deg,#009915 3px,#090 175px,#090 269px)"></i><i style="background:linear-gradient(90deg,#009916 3px,#090 177px,#090 271px)"></i><i style="background:linear-gradient(90deg,#009916 3px,#090 178px,#090 272px)"></i><i style="background:linear-gradient(90deg,#009916 3px,#090 180px,#090 274px)"></i><i style="background:linear-gradient(90deg,#009917 3px,#090 181px,#090 275px)"></i><i style="background:linear-gradient(90deg,#009917 2px,#090 183px,#090 276px)"></i><i style="background:linear-gradient(90deg,#009917 2px,#090 185px,#090 278px)"></i><i style="background:linear-gradient(90deg,#009917 2px,#090 186px,#090 279px)"></i><i style="background:linear-gradient(90deg,#009918 2px,#090 188px,#090 281px)"></i><i style="background:linear-gradient(90deg,#009918 2px,#090 190px,#019900 282px)"></i><i style="background:linear-gradient(90deg,#009918 2px,#090 191px,#019900 283px)"></i><i style="background:linear-gradient(90deg,#009919 2px,#090 193px,#019900 282px,#039900 285px)"></i><i style="background:linear-gradient(90deg,#009919 2px,#090 194px,#019900 282px,#049900 286px)"></i><i style="background:linear-gradient(90deg,#009919 2px,#090 196px,#019900 281px,#069900 288px)"></i><i style="background:linear-gradient(90deg,#009919 2px,#090 198px,#019900 281px,#079900 289px)"></i><i style="background:linear-gradient(90deg,#00991a 2px,#090 199px,#019900 281px,#089900 290px)"></i><i style="background:linear-gradient(90deg,#00991a 2px,#090 201px,#019900 280px,#099900 292px)"></i><i style="background:linear-gradient(90deg,#00991a 2px,#090 203px,#019900 280px,#0a9900 293px)"></i><i style="background:linear-gradient(90deg,#00991b 2px,#090 204px,#019900 280px,#0c9900 295px)"></i><i style="background:linear-gradient(90deg,#00991b 2px,#090 206px,#019900 279px,#0d9900 296px)"></i><i style="background:linear-gradient(90deg,#00991b 1px,#090 208px,#019900 279px,#0e9900 297px)"></i><i style="background:linear-gradient(90deg,#00991c 1px,#090 209px,#029900 279px,#109900 299px)"></i><i style="background:linear-gradient(90deg,#00991c 1px,#090 211px,#019900 278px,#190 300px)"></i><i style="background:linear-gradient(90deg,#00991c 1px,#090 212px,#019900 278px,#139900 302px)"></i><i style="background:linear-gradient(90deg,#00991c 1px,#090 214px,#019900 277px,#149900 303px)"></i><i style="background:linear-gradient(90deg,#00991d 1px,#090 216px,#019900 277px,#159900 304px)"></i><i style="background:linear-gradient(90deg,#00991d 1px,#090 217px,#019900 277px,#179900 306px)"></i><i style="background:linear-gradient(90deg,#00991d 1px,#009901 203px,#019900 276px,#189900 307px)"></i><i style="background:linear-gradient(90deg,#00991e 1px,#009901 203px,#019900 276px,#199900 308px)"></i><i style="background:linear-gradient(90deg,#00991e 1px,#009901 203px,#029900 276px,#1b9900 310px)"></i><i style="background:linear-gradient(90deg,#00991e 1px,#090 224px,#019900 275px,#1c9900 311px)"></i><i style="background:linear-gradient(90deg,#00991f 1px,#090 226px,#019900 275px,#1e9900 313px)"></i><i style="background:linear-gradient(90deg,#00991f 1px,#090 227px,#019900 274px,#1f9900 314px)"></i><i style="background:linear-gradient(90deg,#00991f 1px,#090 229px,#019900 274px,#219900 315px)"></i><i style="background:linear-gradient(90deg,#009920 1px,#009903 202px,#090 236px,#019900 274px,#239900 317px)"></i><i style="background:linear-gradient(90deg,#009920 1px,#009904 201px,#090 236px,#019900 273px,#249900 318px)"></i><i style="background:linear-gradient(90deg,#009920 1px,#009904 201px,#090 236px,#019900 273px,#259900 319px)"></i><i style="background:linear-gradient(90deg,#009920 1px,#009904 201px,#090 238px,#029900 273px,#279900 321px)"></i><i style="background:linear-gradient(90deg,#009921 1px,#009905 201px,#090 239px,#019900 272px,#289900 322px)"></i><i style="background:linear-gradient(90deg,#009921 1px,#009905 200px,#090 240px,#019900 272px,#2a9900 323px)"></i><i style="background:linear-gradient(90deg,#009921 1px,#009905 200px,#090 241px,#029900 272px,#2c9900 325px)"></i><i style="background:linear-gradient(90deg,#092 1px,#009906 200px,#090 242px,#019900 271px,#2d9900 326px)"></i><i style="background:linear-gradient(90deg,#092 1px,#009906 200px,#090 244px,#019900 271px,#2f9900 328px)"></i><i style="background:linear-gradient(90deg,#092 1px,#009907 199px,#090 245px,#029900 271px,#309900 329px)"></i><i style="background:linear-gradient(90deg,#009923 1px,#009907 199px,#090 247px,#019900 270px,#329900 330px)"></i><i style="background:linear-gradient(90deg,#009923 1px,#009907 199px,#090 248px,#019900 270px,#349900 332px)"></i><i style="background:linear-gradient(90deg,#009923 1px,#009907 199px,#090 250px,#029900 270px,#359900 333px)"></i><i style="background:linear-gradient(90deg,#009924 1px,#009908 199px,#090 251px,#019900 269px,#379900 334px)"></i><i style="background:linear-gradient(90deg,#009924 1px,#009908 198px,#090 252px,#029900 269px,#399900 336px)"></i><i style="background:linear-gradient(90deg,#009924 1px,#009909 198px,#090 254px,#029900 269px,#3b9900 337px)"></i><i style="background:linear-gradient(90deg,#009925 1px,#009909 198px,#090 256px,#019900 268px,#3c9900 338px)"></i><i style="background:linear-gradient(90deg,#009925 1px,#009909 198px,#090 257px,#029900 268px,#3d9900 339px,#3e9900 340px)"></i><i style="background:linear-gradient(90deg,#009925 1px,#00990a 197px,#090 259px,#029900 268px,#3d9900 338px,#409900 341px)"></i><i style="background:linear-gradient(90deg,#009926 1px,#00990a 197px,#090 260px,#029900 268px,#3e9900 338px,#419900 342px)"></i><i style="background:linear-gradient(90deg,#009926 1px,#00990a 197px,#090 262px,#069900 272px,#419900 341px,#490 344px)"></i><i style="background:linear-gradient(90deg,#009926 2px,#00990b 198px,#090 264px,#389900 331px,#459900 345px)"></i><i style="background:linear-gradient(90deg,#009927 2px,#00990b 197px,#019900 265px,#3c9900 335px,#479900 346px)"></i><i style="background:linear-gradient(90deg,#009927 2px,#00990c 197px,#019900 265px,#3d9900 335px,#499900 348px)"></i><i style="background:linear-gradient(90deg,#009927 2px,#00990c 197px,#019900 265px,#3c9900 334px,#4b9900 349px)"></i><i style="background:linear-gradient(90deg,#009928 2px,#00990c 197px,#019900 264px,#3c9900 333px,#4d9900 350px)"></i><i style="background:linear-gradient(90deg,#009928 2px,#00990d 196px,#019900 264px,#3d9900 333px,#4f9900 352px)"></i><i style="background:linear-gradient(90deg,#009928 2px,#00990d 196px,#019900 264px,#3d9900 333px,#519900 353px)"></i><i style="background:linear-gradient(90deg,#009929 2px,#00990d 196px,#019901 263px,#3d9900 332px,#529900 354px)"></i><i style="background:linear-gradient(90deg,#009929 2px,#00990e 196px,#019901 263px,#3c9900 331px,#590 356px)"></i><i style="background:linear-gradient(90deg,#009929 2px,#00990e 196px,#029901 263px,#4c9900 346px,#579900 357px)"></i><i style="background:linear-gradient(90deg,#00992a 2px,#00990f 195px,#019902 262px,#079900 270px,#439900 337px,#5a9900 359px)"></i><i style="background:linear-gradient(90deg,#00992a 2px,#00990f 195px,#019902 262px,#029902 263px,#089901 270px,#490 337px,#5b9900 360px)"></i><i style="background:linear-gradient(90deg,#00992a 2px,#00990f 195px,#019903 261px,#029903 262px,#0a9901 272px,#459900 338px,#5d9900 361px)"></i><i style="background:linear-gradient(90deg,#00992b 2px,#009910 195px,#019903 261px,#029903 262px,#0c9900 274px,#489900 340px,#609900 363px)"></i><i style="background:linear-gradient(90deg,#00992b 2px,#009910 195px,#019904 261px,#029903 262px,#0d9901 275px,#499900 340px,#629900 364px)"></i><i style="background:linear-gradient(90deg,#00992c 2px,#091 194px,#019904 260px,#029904 261px,#0f9901 277px,#4b9900 342px,#649900 365px)"></i><i style="background:linear-gradient(90deg,#00992c 2px,#091 194px,#019905 260px,#029904 261px,#190 279px,#4d9900 343px,#679900 367px)"></i><i style="background:linear-gradient(90deg,#00992c 3px,#091 195px,#029905 260px,#029905 261px,#129901 280px,#4f9900 344px,#699900 368px)"></i><i style="background:linear-gradient(90deg,#00992d 3px,#009912 194px,#019906 259px,#029905 260px,#149901 282px,#509900 345px,#6a9900 369px)"></i><i style="background:linear-gradient(90deg,#00992d 3px,#009912 194px,#019906 259px,#029906 260px,#169900 284px,#539900 347px,#6e9900 371px)"></i><i style="background:linear-gradient(90deg,#00992d 3px,#009913 194px,#019906 258px,#029906 260px,#189901 285px,#549900 347px,#6f9900 372px)"></i><i style="background:linear-gradient(90deg,#00992e 3px,#009913 194px,#019907 258px,#029907 259px,#1a9901 287px,#569900 349px,#719900 373px)"></i><i style="background:linear-gradient(90deg,#00992e 3px,#009913 194px,#019907 258px,#029907 259px,#1c9901 289px,#589900 350px,#759900 375px)"></i><i style="background:linear-gradient(90deg,#00992e 3px,#009914 194px,#019908 257px,#029908 258px,#1d9901 290px,#5a9900 351px,#790 376px)"></i><i style="background:linear-gradient(90deg,#00992f 3px,#009914 193px,#019908 257px,#029908 258px,#209901 292px,#5c9900 352px,#799900 377px)"></i><i style="background:linear-gradient(90deg,#00992f 3px,#009915 193px,#019909 257px,#029908 258px,#229901 294px,#5f9900 354px,#7c9900 379px)"></i><i style="background:linear-gradient(90deg,#009930 3px,#009915 193px,#019909 256px,#029909 257px,#239901 295px,#619900 355px,#7e9900 380px)"></i><i style="background:linear-gradient(90deg,#009930 3px,#009916 193px,#01990a 256px,#029909 257px,#259901 297px,#639900 356px,#809900 381px)"></i><i style="background:linear-gradient(90deg,#009930 3px,#009916 193px,#01990a 255px,#02990a 257px,#289901 299px,#690 358px,#849900 383px)"></i><i style="background:linear-gradient(90deg,#009931 3px,#009917 192px,#01990b 255px,#02990a 256px,#299901 300px,#690 358px,#869900 384px)"></i><i style="background:linear-gradient(90deg,#009931 4px,#009917 193px,#01990b 255px,#02990b 256px,#2c9901 302px,#6a9900 360px,#890 385px)"></i><i style="background:linear-gradient(90deg,#009931 4px,#009917 193px,#01990c 254px,#02990b 255px,#2e9901 304px,#6c9900 361px,#8c9900 387px)"></i><i style="background:linear-gradient(90deg,#009932 4px,#009918 193px,#01990c 254px,#02990c 255px,#309901 305px,#6e9900 362px,#8e9900 388px)"></i><i style="background:linear-gradient(90deg,#009932 4px,#009918 192px,#01990d 254px,#02990c 255px,#329901 307px,#709900 363px,#909900 389px)"></i><i style="background:linear-gradient(90deg,#093 4px,#009919 192px,#01990d 253px,#02990d 254px,#359901 309px,#739900 365px,#949900 391px)"></i><i style="background:linear-gradient(90deg,#093 4px,#009919 192px,#01990e 253px,#02990d 254px,#369901 310px,#749900 365px,#979900 392px)"></i><i style="background:linear-gradient(90deg,#009934 4px,#00991a 192px,#01990e 252px,#02990e 254px,#399901 312px,#790 367px,#990 393px)"></i><i style="background:linear-gradient(90deg,#009934 4px,#00991a 192px,#01990f 252px,#02990e 253px,#3c9901 314px,#799900 368px,#999800 393px,#999500 395px)"></i><i style="background:linear-gradient(90deg,#009934 4px,#00991a 192px,#01990f 252px,#02990f 253px,#3d9901 315px,#7b9900 369px,#999800 392px,#999300 396px)"></i><i style="background:linear-gradient(90deg,#009935 4px,#00991b 191px,#019910 251px,#03990f 253px,#409901 317px,#7e9900 370px,#999800 391px,#999000 397px)"></i><i style="background:linear-gradient(90deg,#009935 4px,#00991c 191px,#019910 251px,#029910 252px,#439901 319px,#819900 372px,#990 390px,#998d00 399px)"></i><i style="background:linear-gradient(90deg,#009935 5px,#00991c 192px,#019911 251px,#029910 252px,#449901 320px,#839900 373px,#999800 390px,#998b00 400px)"></i><i style="background:linear-gradient(90deg,#009936 5px,#00991c 192px,#019911 250px,#029911 251px,#479901 322px,#869900 374px,#999800 389px,#998900 401px)"></i><i style="background:linear-gradient(90deg,#009936 5px,#00991d 191px,#019912 250px,#029912 251px,#4a9901 324px,#899900 376px,#999800 388px,#998500 403px)"></i><i style="background:linear-gradient(90deg,#009937 5px,#00991d 191px,#029912 250px,#029912 251px,#4c9901 325px,#8a9900 376px,#999800 387px,#998300 404px)"></i><i style="background:linear-gradient(90deg,#009937 5px,#00991e 191px,#019913 249px,#029913 250px,#4f9901 327px,#8e9900 378px,#999700 387px,#998100 405px)"></i><i style="background:linear-gradient(90deg,#009938 5px,#00991e 191px,#019913 249px,#029913 250px,#529901 329px,#919900 379px,#999800 386px,#997e00 407px)"></i><i style="background:linear-gradient(90deg,#009938 5px,#00991f 191px,#019914 248px,#039914 250px,#549901 330px,#999800 385px,#997c00 408px)"></i><i style="background:linear-gradient(90deg,#009938 5px,#00991f 191px,#019914 248px,#029914 249px,#579901 332px,#969900 381px,#999500 386px,#997a00 409px)"></i><i style="background:linear-gradient(90deg,#009939 5px,#009920 191px,#019915 248px,#029915 249px,#5a9901 334px,#999800 383px,#997800 410px,#970 411px)"></i><i style="background:linear-gradient(90deg,#009939 6px,#009920 191px,#019916 247px,#039915 249px,#5c9901 335px,#990 382px,#997900 409px,#997600 412px)"></i><i style="background:linear-gradient(90deg,#00993a 6px,#009921 191px,#019916 247px,#029916 248px,#5f9901 337px,#999800 382px,#997800 409px,#997400 413px)"></i><i style="background:linear-gradient(90deg,#00993a 6px,#009921 191px,#029917 247px,#029916 248px,#619901 338px,#999800 381px,#997800 408px,#997100 415px)"></i><i style="background:linear-gradient(90deg,#00993b 6px,#092 191px,#019917 246px,#029917 247px,#649901 340px,#999800 380px,#997800 407px,#996f00 416px)"></i><i style="background:linear-gradient(90deg,#00993b 6px,#092 191px,#019918 246px,#029918 247px,#689901 342px,#999800 379px,#997800 406px,#996e00 417px)"></i><i style="background:linear-gradient(90deg,#00993c 6px,#009923 190px,#019918 245px,#039918 247px,#6a9901 343px,#990 378px,#997800 405px,#996c00 418px)"></i><i style="background:linear-gradient(90deg,#00993c 6px,#009923 190px,#019919 245px,#029919 246px,#6d9901 345px,#999800 378px,#970 405px,#996a00 420px)"></i><i style="background:linear-gradient(90deg,#00993c 6px,#009924 190px,#019919 245px,#029919 246px,#719901 347px,#999800 377px,#970 404px,#996800 421px)"></i><i style="background:linear-gradient(90deg,#00993d 7px,#009924 191px,#01991a 244px,#03991a 246px,#739901 348px,#999800 376px,#997800 402px,#960 422px)"></i><i style="background:linear-gradient(90deg,#00993d 7px,#009924 191px,#01991b 244px,#02991a 245px,#769901 350px,#999800 375px,#997900 401px,#996400 424px)"></i><i style="background:linear-gradient(90deg,#00993e 7px,#009925 191px,#01991b 244px,#02991b 245px,#7a9901 352px,#990 374px,#997900 400px,#996300 425px)"></i><i style="background:linear-gradient(90deg,#00993e 7px,#009926 190px,#01991c 243px,#03991b 245px,#7c9901 353px,#999800 374px,#997800 400px,#996100 426px)"></i><i style="background:linear-gradient(90deg,#00993f 7px,#009926 190px,#01991c 243px,#02991c 244px,#809901 355px,#999800 373px,#997800 399px,#995f00 428px)"></i><i style="background:linear-gradient(90deg,#00993f 7px,#009927 190px,#01991d 242px,#03991d 244px,#849901 357px,#999800 372px,#997800 398px,#995d00 429px)"></i><i style="background:linear-gradient(90deg,#009940 7px,#009927 190px,#01991e 242px,#02991d 243px,#879901 358px,#999800 371px,#997800 397px,#995c00 430px)"></i><i style="background:linear-gradient(90deg,#009940 7px,#009928 190px,#01991e 242px,#02991e 243px,#8b9901 360px,#999700 371px,#970 397px,#995a00 432px)"></i><i style="background:linear-gradient(90deg,#009940 8px,#009928 191px,#01991f 241px,#03991e 243px,#8f9901 362px,#999800 370px,#970 396px,#995a00 431px,#995900 433px)"></i><i style="background:linear-gradient(90deg,#009941 8px,#009929 190px,#01991f 241px,#02991f 242px,#919901 363px,#999800 369px,#970 395px,#995b00 429px,#995700 434px)"></i><i style="background:linear-gradient(90deg,#009941 8px,#009929 190px,#019920 241px,#029920 242px,#959901 365px,#999700 369px,#970 395px,#995900 430px,#950 436px)"></i><i style="background:linear-gradient(90deg,#009942 8px,#00992a 190px,#019921 240px,#039920 242px,#999801 367px,#997900 392px,#995b00 426px,#995400 437px)"></i><i style="background:linear-gradient(90deg,#009942 8px,#00992a 190px,#019921 240px,#029921 241px,#999601 368px,#997600 394px,#995800 429px,#995300 438px)"></i><i style="background:linear-gradient(90deg,#009943 8px,#00992b 190px,#019922 239px,#039922 241px,#999201 370px,#997200 397px,#950 433px,#995100 440px)"></i><i style="background:linear-gradient(90deg,#009943 8px,#00992c 190px,#019923 239px,#029922 240px,#998e01 372px,#996e00 400px,#995200 437px,#995000 441px)"></i><i style="background:linear-gradient(90deg,#094 9px,#00992c 191px,#019923 239px,#029923 240px,#998b01 373px,#996c00 401px,#995000 439px,#994e00 442px)"></i><i style="background:linear-gradient(90deg,#094 9px,#00992c 191px,#019924 238px,#039924 240px,#998801 375px,#996900 404px,#994d00 443px,#994d00 444px)"></i><i style="background:linear-gradient(90deg,#009945 9px,#00992d 190px,#019925 238px,#029924 239px,#998401 377px,#996500 407px,#994b00 445px)"></i><i style="background:linear-gradient(90deg,#009945 9px,#00992e 190px,#019925 238px,#029925 239px,#998201 378px,#996400 408px,#994a00 446px)"></i><i style="background:linear-gradient(90deg,#009946 9px,#00992e 190px,#019926 237px,#039925 239px,#997e01 380px,#996100 411px,#994900 448px)"></i><i style="background:linear-gradient(90deg,#009946 9px,#00992f 190px,#019926 237px,#029926 238px,#997b01 382px,#995e00 414px,#994700 449px)"></i><i style="background:linear-gradient(90deg,#009947 9px,#009930 190px,#029927 237px,#039927 238px,#997901 383px,#995b00 416px,#994600 450px)"></i><i style="background:linear-gradient(90deg,#009947 10px,#009930 191px,#019928 236px,#039927 238px,#997601 385px,#995900 418px,#994500 452px)"></i><i style="background:linear-gradient(90deg,#009948 10px,#009931 191px,#019928 236px,#029928 237px,#997301 387px,#995600 421px,#940 453px)"></i><i style="background:linear-gradient(90deg,#009948 10px,#009931 191px,#019929 235px,#039929 237px,#997101 388px,#995400 423px,#994300 454px)"></i><i style="background:linear-gradient(90deg,#009949 10px,#009932 191px,#01992a 235px,#02992a 236px,#996e01 390px,#995200 426px,#994100 456px)"></i><i style="background:linear-gradient(90deg,#009949 10px,#009932 191px,#01992a 235px,#02992a 236px,#996b01 392px,#994f00 429px,#994000 457px)"></i><i style="background:linear-gradient(90deg,#00994a 10px,#093 191px,#01992b 234px,#03992b 236px,#996901 393px,#994e00 430px,#993f00 458px)"></i><i style="background:linear-gradient(90deg,#00994a 11px,#009934 191px,#01992c 234px,#02992c 235px,#996701 395px,#994b00 433px,#993e00 459px)"></i><i style="background:linear-gradient(90deg,#00994b 11px,#009934 191px,#02992d 234px,#03992c 235px,#996401 397px,#994900 436px,#993d00 461px)"></i><i style="background:linear-gradient(90deg,#00994c 11px,#009935 191px,#01992d 233px,#03992d 235px,#996301 398px,#994700 438px,#993c00 462px)"></i><i style="background:linear-gradient(90deg,#00994c 11px,#009935 191px,#01992e 233px,#02992e 234px,#996001 400px,#994500 441px,#993b00 463px)"></i><i style="background:linear-gradient(90deg,#00994d 11px,#009936 191px,#01992f 232px,#03992f 234px,#995e01 402px,#994300 444px,#993900 465px)"></i><i style="background:linear-gradient(90deg,#00994d 11px,#009937 191px,#019930 232px,#03992f 234px,#995c01 403px,#994100 446px,#993800 466px)"></i><i style="background:linear-gradient(90deg,#00994e 12px,#009937 192px,#019930 232px,#029930 233px,#995a01 405px,#993f00 449px,#993700 467px)"></i><i style="background:linear-gradient(90deg,#00994e 12px,#009938 192px,#019931 231px,#039931 233px,#995800 407px,#993d00 452px,#993600 469px)"></i><i style="background:linear-gradient(90deg,#00994f 12px,#009939 192px,#019932 231px,#029932 232px,#995601 408px,#993c00 453px,#993500 470px)"></i><i style="background:linear-gradient(90deg,#00994f 12px,#009939 192px,#019932 231px,#039932 232px,#995401 410px,#993a00 457px,#993400 471px)"></i><i style="background:linear-gradient(90deg,#009950 12px,#00993a 192px,#019933 230px,#039933 232px,#995200 412px,#993800 460px,#930 473px)"></i><i style="background:linear-gradient(90deg,#009951 12px,#00993b 192px,#019934 230px,#029934 231px,#995101 413px,#993700 461px,#993200 474px)"></i><i style="background:linear-gradient(90deg,#009951 13px,#00993b 193px,#019935 229px,#039935 231px,#994f01 415px,#993600 464px,#993100 475px)"></i><i style="background:linear-gradient(90deg,#009952 13px,#00993c 193px,#019936 229px,#039935 231px,#994d00 417px,#993400 468px,#993000 477px)"></i><i style="background:linear-gradient(90deg,#009952 13px,#00993c 193px,#019936 229px,#029936 230px,#994b01 418px,#930 469px,#992f00 478px)"></i><i style="background:linear-gradient(90deg,#009953 13px,#00993d 193px,#019937 228px,#039937 230px,#994900 420px,#993100 472px,#992f00 479px)"></i><i style="background:linear-gradient(90deg,#009953 13px,#00993e 193px,#019938 228px,#029938 229px,#994800 422px,#992f00 476px,#992d00 481px)"></i><i style="background:linear-gradient(90deg,#009954 13px,#00993f 193px,#019939 228px,#039938 229px,#994601 423px,#992e00 477px,#992d00 482px)"></i><i style="background:linear-gradient(90deg,#095 14px,#00993f 194px,#01993a 227px,#039939 229px,#994500 425px,#992c00 481px,#992c00 483px)"></i><i style="background:linear-gradient(90deg,#095 14px,#009940 194px,#01993a 227px,#02993a 228px,#994301 426px,#992c00 482px,#992b00 485px)"></i><i style="background:linear-gradient(90deg,#009956 14px,#009941 194px,#02993b 227px,#03993b 228px,#994201 428px,#992a00 485px,#992a00 486px)"></i><i style="background:linear-gradient(90deg,#009956 14px,#009941 194px,#01993c 226px,#03993c 228px,#994000 430px,#992900 487px)"></i><i style="background:linear-gradient(90deg,#009957 14px,#009942 194px,#01993d 226px,#02993d 227px,#993f01 431px,#992800 489px)"></i><i style="background:linear-gradient(90deg,#009958 15px,#009943 195px,#01993e 225px,#03993d 227px,#993d01 433px,#992700 490px)"></i><i style="background:linear-gradient(90deg,#009958 15px,#009943 195px,#01993e 225px,#03993e 227px,#993c00 435px,#992700 491px)"></i><i style="background:linear-gradient(90deg,#009959 15px,#094 195px,#01993f 225px,#03993f 226px,#993b01 436px,#992600 493px)"></i><i style="background:linear-gradient(90deg,#00995a 15px,#009945 195px,#019940 224px,#039940 226px,#993900 438px,#992500 494px)"></i><i style="background:linear-gradient(90deg,#00995a 15px,#009945 196px,#019941 224px,#029941 225px,#993800 440px,#992400 495px)"></i><i style="background:linear-gradient(90deg,#00995b 15px,#009946 196px,#029942 224px,#039942 225px,#993701 441px,#992300 497px)"></i><i style="background:linear-gradient(90deg,#00995b 16px,#009947 197px,#019943 223px,#039942 225px,#993500 443px,#992300 498px)"></i><i style="background:linear-gradient(90deg,#00995c 16px,#009948 197px,#019944 223px,#029943 224px,#993400 445px,#920 499px)"></i><i style="background:linear-gradient(90deg,#00995d 16px,#009949 197px,#019945 222px,#039944 224px,#993301 446px,#992100 501px)"></i><i style="background:linear-gradient(90deg,#00995d 16px,#009949 197px,#019945 222px,#039945 224px,#993200 448px,#992000 502px)"></i><i style="background:linear-gradient(90deg,#00995e 16px,#00994a 197px,#019946 222px,#039946 223px,#993100 450px,#992000 503px)"></i><i style="background:linear-gradient(90deg,#00995f 17px,#00994b 198px,#019947 221px,#039947 223px,#993001 451px,#991f00 505px)"></i><i style="background:linear-gradient(90deg,#00995f 17px,#00994c 199px,#019948 221px,#039948 223px,#992e00 453px,#991e00 506px)"></i><i style="background:linear-gradient(90deg,#009960 17px,#00994c 199px,#029949 221px,#039949 222px,#992d00 455px,#991d00 507px)"></i><i style="background:linear-gradient(90deg,#009961 17px,#00994d 199px,#01994a 220px,#03994a 222px,#992c00 456px,#991d00 509px)"></i><i style="background:linear-gradient(90deg,#009961 17px,#00994e 199px,#01994b 220px,#02994b 221px,#992b00 458px,#991c00 510px)"></i><i style="background:linear-gradient(90deg,#009962 18px,#00994f 200px,#00994c 219px,#03994c 221px,#992a00 460px,#991b00 511px)"></i><i style="background:linear-gradient(90deg,#009963 18px,#009950 201px,#01994d 219px,#03994d 221px,#992900 461px,#991b00 512px)"></i><i style="background:linear-gradient(90deg,#009964 18px,#009950 201px,#01994e 219px,#03994e 220px,#992800 463px,#991a00 514px)"></i><i style="background:linear-gradient(90deg,#009964 18px,#009951 201px,#01994f 218px,#03994f 220px,#992700 465px,#991900 515px)"></i><i style="background:linear-gradient(90deg,#009965 18px,#009952 202px,#019950 218px,#03994f 220px,#992600 466px,#991900 516px)"></i><i style="background:linear-gradient(90deg,#096 19px,#009953 203px,#029951 218px,#039951 219px,#992500 468px,#991800 518px)"></i><i style="background:linear-gradient(90deg,#096 19px,#009954 203px,#019952 217px,#039951 219px,#992400 470px,#991700 519px)"></i><i style="background:linear-gradient(90deg,#009967 19px,#095 204px,#019953 217px,#049952 219px,#992300 471px,#991700 520px)"></i><i style="background:linear-gradient(90deg,#009968 19px,#095 204px,#029954 217px,#039954 218px,#920 473px,#991600 522px)"></i><i style="background:linear-gradient(90deg,#009969 19px,#009956 205px,#019955 216px,#039954 218px,#992100 475px,#991600 523px)"></i><i style="background:linear-gradient(90deg,#009969 20px,#009957 206px,#019956 216px,#039956 217px,#992000 476px,#991500 524px)"></i><i style="background:linear-gradient(90deg,#00996a 20px,#009958 206px,#029957 216px,#039957 217px,#991f00 478px,#991400 526px)"></i><i style="background:linear-gradient(90deg,#00996b 20px,#009959 207px,#019958 215px,#039958 217px,#991e00 480px,#991400 527px)"></i><i style="background:linear-gradient(90deg,#00996c 20px,#00995a 207px,#019959 215px,#039959 216px,#991e00 481px,#991300 528px)"></i><i style="background:linear-gradient(90deg,#00996c 20px,#00995b 208px,#02995a 215px,#03995a 216px,#991d00 483px,#991200 530px)"></i><i style="background:linear-gradient(90deg,#00996d 21px,#00995c 209px,#01995b 214px,#04995b 216px,#991c00 485px,#991200 531px)"></i><i style="background:linear-gradient(90deg,#00996e 21px,#00995d 210px,#03995c 215px,#991b00 486px,#910 532px)"></i><i style="background:linear-gradient(90deg,#00996f 21px,#00995e 211px,#03995d 215px,#991a00 488px,#910 534px)"></i><i style="background:linear-gradient(90deg,#009970 21px,#00995f 211px,#03995e 214px,#991a00 490px,#991000 535px)"></i><i style="background:linear-gradient(90deg,#009970 21px,#009960 212px,#03995f 214px,#991900 491px,#991000 536px)"></i><i style="background:linear-gradient(90deg,#009971 22px,#019961 212px,#049960 214px,#991800 493px,#990f00 538px)"></i><i style="background:linear-gradient(90deg,#009972 22px,#019962 212px,#039962 213px,#991700 495px,#990f00 539px)"></i><i style="background:linear-gradient(90deg,#009973 22px,#019963 211px,#039963 213px,#991700 496px,#990e00 540px)"></i><i style="background:linear-gradient(90deg,#009974 22px,#019964 211px,#049964 213px,#991600 498px,#990e00 541px)"></i><i style="background:linear-gradient(90deg,#009974 23px,#009965 210px,#039965 212px,#991500 500px,#990d00 543px)"></i><i style="background:linear-gradient(90deg,#009975 23px,#019966 210px,#039966 212px,#991400 501px,#990c00 544px)"></i><i style="background:linear-gradient(90deg,#009976 23px,#019968 210px,#049967 212px,#991400 503px,#990c00 545px)"></i><i style="background:linear-gradient(90deg,#097 23px,#009969 209px,#039969 211px,#991300 505px,#990b00 547px)"></i><i style="background:linear-gradient(90deg,#009978 24px,#01996a 209px,#04996a 211px,#991200 506px,#990b00 548px)"></i><i style="background:linear-gradient(90deg,#009979 24px,#01996b 209px,#03996b 210px,#991200 508px,#990a00 549px)"></i><i style="background:linear-gradient(90deg,#00997a 24px,#01996d 208px,#03996c 210px,#910 510px,#990a00 551px)"></i><i style="background:linear-gradient(90deg,#00997a 24px,#01996e 208px,#04996e 210px,#991000 511px,#990900 552px)"></i><i style="background:linear-gradient(90deg,#00997b 24px,#00996f 207px,#03996f 209px,#991000 513px,#990900 553px)"></i><i style="background:linear-gradient(90deg,#00997c 25px,#019970 207px,#039970 209px,#990f00 514px,#990800 555px)"></i><i style="background:linear-gradient(90deg,#00997d 25px,#019972 207px,#049971 209px,#990e00 516px,#990800 556px)"></i><i style="background:linear-gradient(90deg,#00997e 25px,#009973 206px,#039973 208px,#990e00 518px,#990800 557px)"></i><i style="background:linear-gradient(90deg,#00997f 25px,#019974 206px,#049974 208px,#990d00 519px,#990700 559px)"></i><i style="background:linear-gradient(90deg,#009980 26px,#019975 206px,#049975 208px,#990c00 521px,#990700 560px)"></i><i style="background:linear-gradient(90deg,#009981 26px,#097 205px,#039977 207px,#990c00 523px,#990600 561px)"></i><i style="background:linear-gradient(90deg,#009982 26px,#019978 205px,#049978 207px,#990b00 524px,#990600 563px)"></i><i style="background:linear-gradient(90deg,#009983 26px,#029979 205px,#039979 206px,#990b00 526px,#990500 564px)"></i><i style="background:linear-gradient(90deg,#009984 27px,#01997b 204px,#03997b 206px,#990a00 528px,#990500 565px)"></i><i style="background:linear-gradient(90deg,#009985 27px,#01997c 204px,#04997c 206px,#990a00 529px,#990400 567px)"></i><i style="background:linear-gradient(90deg,#009986 27px,#00997e 203px,#03997e 205px,#990900 531px,#990400 568px)"></i><i style="background:linear-gradient(90deg,#009987 27px,#01997f 203px,#04997f 205px,#990800 533px,#990300 569px)"></i><i style="background:linear-gradient(90deg,#098 28px,#019981 203px,#049980 205px,#990800 534px,#990300 571px)"></i><i style="background:linear-gradient(90deg,#009989 28px,#009982 202px,#039982 204px,#990700 536px,#990300 572px)"></i><i style="background:linear-gradient(90deg,#00998a 28px,#019983 202px,#049983 204px,#990700 538px,#990200 573px)"></i><i style="background:linear-gradient(90deg,#00998b 28px,#019985 202px,#039985 203px,#990600 539px,#990200 575px)"></i><i style="background:linear-gradient(90deg,#00998c 29px,#019986 201px,#039986 203px,#990600 541px,#990100 576px)"></i><i style="background:linear-gradient(90deg,#00998d 29px,#019988 201px,#049988 203px,#990500 543px,#990100 577px)"></i><i style="background:linear-gradient(90deg,#00998e 29px,#009989 200px,#039989 202px,#990500 544px,#900 579px)"></i><i style="background:linear-gradient(90deg,#00998f 29px,#01998b 200px,#04998b 202px,#990400 546px,#900 580px)"></i><i style="background:linear-gradient(90deg,#009990 30px,#01998d 200px,#04998c 202px,#990400 548px,#900 581px)"></i><i style="background:linear-gradient(90deg,#009991 30px,#00998e 199px,#03998e 201px,#990300 549px,#900 583px)"></i><i style="background:linear-gradient(90deg,#009992 30px,#019990 199px,#049990 201px,#990300 551px,#900 584px)"></i><i style="background:linear-gradient(90deg,#009993 30px,#019991 199px,#049991 201px,#990200 553px,#900 585px)"></i><i style="background:linear-gradient(90deg,#009994 31px,#009993 198px,#049993 200px,#990200 554px,#900 587px)"></i><i style="background:linear-gradient(90deg,#009996 31px,#019995 198px,#049995 200px,#990100 556px,#900 588px)"></i><i style="background:linear-gradient(90deg,#009997 31px,#009996 197px,#039996 199px,#990100 558px,#900 589px)"></i><i style="background:linear-gradient(90deg,#009998 31px,#019998 197px,#049998 199px,#900 558px,#900 591px)"></i><i style="background:linear-gradient(90deg,#099 32px,#019899 197px,#049899 199px,#990001 556px,#900 592px)"></i><i style="background:linear-gradient(90deg,#009899 32px,#009799 196px,#039799 198px,#990001 554px,#900 593px)"></i><i style="background:linear-gradient(90deg,#009799 32px,#019599 196px,#049599 198px,#990002 551px,#900 595px)"></i><i style="background:linear-gradient(90deg,#009599 32px,#019399 196px,#049399 198px,#990002 549px,#900 596px)"></i><i style="background:linear-gradient(90deg,#009499 33px,#009299 195px,#039299 197px,#990003 546px,#900 597px)"></i><i style="background:linear-gradient(90deg,#009399 33px,#019099 195px,#049099 197px,#990003 544px,#900 595px,#900 599px)"></i><i style="background:linear-gradient(90deg,#009299 33px,#018e99 195px,#058e99 197px,#990004 542px,#900 595px,#900 600px)"></i><i style="background:linear-gradient(90deg,#009199 34px,#008d99 194px,#048d99 196px,#990004 539px,#900 594px,#900 601px)"></i><i style="background:linear-gradient(90deg,#009099 34px,#018b99 194px,#048b99 196px,#990005 537px,#900 595px,#900 602px)"></i><i style="background:linear-gradient(90deg,#008f99 34px,#008a99 193px,#038a99 195px,#990005 535px,#900 596px,#900 604px)"></i><i style="background:linear-gradient(90deg,#008e99 34px,#018899 193px,#048899 195px,#990006 532px,#900 596px,#900 605px)"></i><i style="background:linear-gradient(90deg,#008c99 35px,#018799 193px,#048799 195px,#990006 530px,#900 598px,#900 606px)"></i><i style="background:linear-gradient(90deg,#008b99 35px,#008599 192px,#038599 194px,#990007 527px,#900 599px,#900 608px)"></i><i style="background:linear-gradient(90deg,#008a99 35px,#018499 192px,#048499 194px,#990007 525px,#900 600px,#900 609px)"></i><i style="background:linear-gradient(90deg,#008999 35px,#018299 192px,#048299 194px,#990008 523px,#900 601px,#900 610px)"></i><i style="background:linear-gradient(90deg,#089 36px,#008199 191px,#038199 193px,#990009 520px,#900 603px,#900 612px)"></i><i style="background:linear-gradient(90deg,#008799 36px,#017f99 191px,#047f99 193px,#990009 518px,#900 604px,#900 613px)"></i><i style="background:linear-gradient(90deg,#008699 36px,#017e99 191px,#047e99 193px,#99000a 515px,#900 605px,#900 614px)"></i><i style="background:linear-gradient(90deg,#008599 37px,#017d99 190px,#037c99 192px,#99000a 513px,#900 606px,#900 616px)"></i><i style="background:linear-gradient(90deg,#008499 37px,#017b99 190px,#047b99 192px,#99000b 511px,#900 607px,#900 617px)"></i><i style="background:linear-gradient(90deg,#008399 37px,#007a99 189px,#037a99 191px,#99000b 508px,#900 608px,#900 618px)"></i><i style="background:linear-gradient(90deg,#008299 37px,#017899 189px,#037899 191px,#99000c 506px,#900 609px,#900 620px)"></i><i style="background:linear-gradient(90deg,#008199 38px,#017799 189px,#047799 191px,#99000d 503px,#900 609px,#900 621px)"></i><i style="background:linear-gradient(90deg,#008099 38px,#007699 188px,#037699 190px,#99000d 501px,#900 610px,#900 622px)"></i><i style="background:linear-gradient(90deg,#007f99 38px,#017499 188px,#047499 190px,#99000e 499px,#900 611px,#900 624px)"></i><i style="background:linear-gradient(90deg,#007d99 38px,#017399 188px,#047399 190px,#99000e 496px,#900 611px,#900 625px)"></i><i style="background:linear-gradient(90deg,#007c99 39px,#007299 187px,#037299 189px,#99000f 494px,#900 611px,#900 626px)"></i><i style="background:linear-gradient(90deg,#007b99 39px,#017199 187px,#047099 189px,#990010 491px,#900 611px,#900 628px)"></i><i style="background:linear-gradient(90deg,#007a99 39px,#016f99 187px,#036f99 188px,#990010 489px,#900 612px,#900 629px)"></i><i style="background:linear-gradient(90deg,#007999 40px,#016e99 186px,#036e99 188px,#901 487px,#900 612px,#900 630px)"></i><i style="background:linear-gradient(90deg,#007899 40px,#016d99 186px,#046c99 188px,#990012 484px,#990001 608px,#900 632px)"></i><i style="background:linear-gradient(90deg,#079 40px,#016b99 186px,#036b99 187px,#990012 482px,#990001 604px,#900 633px)"></i><i style="background:linear-gradient(90deg,#007699 41px,#016a99 185px,#036a99 187px,#990013 479px,#990002 599px,#900 634px)"></i><i style="background:linear-gradient(90deg,#007599 41px,#016999 185px,#046999 187px,#990014 477px,#990002 596px,#900 636px)"></i><i style="background:linear-gradient(90deg,#007499 41px,#006899 184px,#036899 186px,#990014 475px,#990003 592px,#900 637px)"></i><i style="background:linear-gradient(90deg,#007399 41px,#016799 184px,#036699 186px,#990015 472px,#990004 587px,#900 638px)"></i><i style="background:linear-gradient(90deg,#007299 42px,#016599 184px,#046599 186px,#990016 470px,#990004 584px,#900 640px)"></i><i style="background:linear-gradient(90deg,#007199 42px,#006499 183px,#036499 185px,#990017 468px,#990005 581px,#900 641px)"></i><i style="background:linear-gradient(90deg,#007099 42px,#016399 183px,#036399 185px,#990017 465px,#990005 575px,#900 642px)"></i><i style="background:linear-gradient(90deg,#006f99 43px,#016299 183px,#036299 184px,#990018 463px,#990006 572px,#900 644px)"></i><i style="background:linear-gradient(90deg,#006e99 43px,#016199 182px,#036199 184px,#990019 460px,#990007 567px,#900 645px)"></i><i style="background:linear-gradient(90deg,#006e99 43px,#016099 182px,#045f99 184px,#99001a 458px,#990007 564px,#900 646px)"></i><i style="background:linear-gradient(90deg,#006d99 44px,#015e99 182px,#035e99 183px,#99001a 456px,#990008 560px,#900 647px)"></i><i style="background:linear-gradient(90deg,#006c99 44px,#015d99 181px,#035d99 183px,#99001b 453px,#990009 556px,#900 645px)"></i><i style="background:linear-gradient(90deg,#006b99 44px,#015c99 181px,#045c99 183px,#99001c 451px,#990009 552px,#900 642px)"></i><i style="background:linear-gradient(90deg,#006a99 44px,#005b99 180px,#035b99 182px,#99001d 448px,#99000a 547px,#900 639px)"></i><i style="background:linear-gradient(90deg,#006999 45px,#015a99 180px,#035a99 182px,#99001e 446px,#99000b 544px,#900 637px)"></i><i style="background:linear-gradient(90deg,#006899 45px,#015999 180px,#045999 182px,#99001f 444px,#99000b 541px,#990001 634px)"></i><i style="background:linear-gradient(90deg,#006799 45px,#005899 179px,#035899 181px,#990020 441px,#99000c 536px,#990001 631px)"></i><i style="background:linear-gradient(90deg,#069 46px,#015799 179px,#035799 181px,#990020 439px,#99000d 533px,#990002 628px)"></i><i style="background:linear-gradient(90deg,#006599 46px,#015699 179px,#035699 180px,#990021 436px,#99000e 528px,#990002 625px)"></i><i style="background:linear-gradient(90deg,#006499 46px,#015599 178px,#035599 180px,#902 434px,#99000f 525px,#990002 622px)"></i><i style="background:linear-gradient(90deg,#006399 47px,#015499 178px,#035499 180px,#990023 432px,#99000f 522px,#990003 620px)"></i><i style="background:linear-gradient(90deg,#006299 47px,#015399 178px,#035399 179px,#990024 429px,#990010 517px,#990003 617px)"></i><i style="background:linear-gradient(90deg,#006199 47px,#015299 177px,#035299 179px,#990025 427px,#901 514px,#990004 614px)"></i><i style="background:linear-gradient(90deg,#006099 48px,#015199 177px,#035099 179px,#990026 424px,#990012 509px,#990004 611px)"></i><i style="background:linear-gradient(90deg,#006099 48px,#025099 177px,#035099 178px,#990027 422px,#990013 506px,#990005 608px)"></i><i style="background:linear-gradient(90deg,#005f99 48px,#014f99 176px,#034f99 178px,#990028 420px,#990013 503px,#990005 605px)"></i><i style="background:linear-gradient(90deg,#005e99 49px,#014e99 176px,#024e99 177px,#990029 417px,#990015 498px,#990006 602px)"></i><i style="background:linear-gradient(90deg,#005d99 49px,#004d99 175px,#034d99 177px,#99002a 415px,#990015 495px,#990006 600px)"></i><i style="background:linear-gradient(90deg,#005c99 49px,#014c99 175px,#034c99 177px,#99012b 412px,#990016 490px,#990006 597px)"></i><i style="background:linear-gradient(90deg,#005b99 50px,#014b99 175px,#024b99 176px,#99002c 410px,#990017 487px,#990007 594px)"></i><i style="background:linear-gradient(90deg,#005a99 50px,#014a99 174px,#034a99 176px,#99002d 408px,#990018 484px,#990007 591px)"></i><i style="background:linear-gradient(90deg,#005999 50px,#014999 174px,#034999 176px,#99012f 405px,#990019 480px,#990008 588px)"></i><i style="background:linear-gradient(90deg,#005899 51px,#014899 174px,#034899 175px,#99002f 403px,#99001a 477px,#990008 585px)"></i><i style="background:linear-gradient(90deg,#005899 51px,#014799 173px,#034799 175px,#990030 401px,#99001b 474px,#990009 583px)"></i><i style="background:linear-gradient(90deg,#005799 51px,#014699 173px,#034699 175px,#990032 398px,#99001c 469px,#990009 580px)"></i><i style="background:linear-gradient(90deg,#005699 52px,#014599 173px,#034599 174px,#903 396px,#99001d 466px,#99000a 575px,#99000a 577px)"></i><i style="background:linear-gradient(90deg,#059 52px,#014599 172px,#034499 174px,#990134 393px,#99001e 462px,#99000b 569px,#99000a 574px)"></i><i style="background:linear-gradient(90deg,#005499 52px,#014499 172px,#024399 173px,#990035 391px,#99001f 459px,#99000c 564px,#99000b 571px)"></i><i style="background:linear-gradient(90deg,#005399 53px,#004399 171px,#034299 173px,#990037 389px,#990020 456px,#99000d 559px,#99000c 568px)"></i><i style="background:linear-gradient(90deg,#005299 53px,#014299 171px,#034299 173px,#990138 386px,#902 451px,#99000e 551px,#99000c 566px)"></i><i style="background:linear-gradient(90deg,#005299 53px,#014199 171px,#024199 172px,#990039 384px,#990023 448px,#99000f 546px,#99000d 563px)"></i><i style="background:linear-gradient(90deg,#005199 54px,#014099 170px,#034099 172px,#99013b 381px,#990024 444px,#990010 540px,#99000d 560px)"></i><i style="background:linear-gradient(90deg,#005099 54px,#013f99 170px,#033f99 172px,#99003c 379px,#990025 441px,#901 535px,#99000e 557px)"></i><i style="background:linear-gradient(90deg,#004f99 54px,#013e99 170px,#023e99 171px,#99003d 377px,#990026 438px,#990012 530px,#99000e 554px)"></i><i style="background:linear-gradient(90deg,#004e99 55px,#013e99 169px,#033d99 171px,#99013f 374px,#990028 433px,#990013 523px,#99000f 551px)"></i><i style="background:linear-gradient(90deg,#004d99 55px,#013d99 169px,#033c99 171px,#990040 372px,#990029 431px,#990014 519px,#99000f 549px)"></i><i style="background:linear-gradient(90deg,#004d99 56px,#013c99 169px,#033c99 170px,#990142 369px,#99002a 426px,#990016 512px,#990010 546px)"></i><i style="background:linear-gradient(90deg,#004c99 56px,#013b99 168px,#033b99 170px,#990143 367px,#99002c 423px,#990017 507px,#901 543px)"></i><i style="background:linear-gradient(90deg,#004b99 56px,#013a99 168px,#023a99 169px,#990045 365px,#99002d 420px,#990018 503px,#901 540px)"></i><i style="background:linear-gradient(90deg,#004a99 57px,#003a99 167px,#033999 169px,#990146 362px,#99002e 416px,#990019 496px,#990012 537px)"></i><i style="background:linear-gradient(90deg,#004999 57px,#013999 167px,#033899 169px,#990148 360px,#990030 413px,#99001a 492px,#990012 534px)"></i><i style="background:linear-gradient(90deg,#004999 57px,#013899 167px,#023899 168px,#99014a 357px,#990031 409px,#99001c 486px,#990013 531px)"></i><i style="background:linear-gradient(90deg,#004899 58px,#013799 166px,#033799 168px,#99014b 355px,#903 406px,#99001d 481px,#990014 529px)"></i><i style="background:linear-gradient(90deg,#004799 58px,#013699 166px,#033699 168px,#99004d 353px,#990034 403px,#99001e 477px,#990014 526px)"></i><i style="background:linear-gradient(90deg,#004699 58px,#013599 166px,#023599 167px,#99014f 350px,#990036 399px,#99001f 471px,#990015 523px)"></i><i style="background:linear-gradient(90deg,#004599 59px,#013599 165px,#033499 167px,#990150 348px,#990037 396px,#990021 466px,#990016 520px)"></i><i style="background:linear-gradient(90deg,#004599 59px,#013499 165px,#033499 167px,#990052 346px,#990038 394px,#902 463px,#990016 517px)"></i><i style="background:linear-gradient(90deg,#049 60px,#013399 165px,#023399 166px,#990154 343px,#99003b 389px,#990024 456px,#990017 514px)"></i><i style="background:linear-gradient(90deg,#004399 60px,#013299 164px,#033299 166px,#990156 341px,#99003c 387px,#990025 453px,#990018 512px)"></i><i style="background:linear-gradient(90deg,#004299 60px,#013299 164px,#023199 165px,#990158 338px,#99003e 382px,#990027 446px,#990018 509px)"></i><i style="background:linear-gradient(90deg,#004199 61px,#023199 164px,#033199 165px,#99015a 336px,#99003f 380px,#990028 443px,#990019 506px)"></i><i style="background:linear-gradient(90deg,#004199 61px,#013099 163px,#033099 165px,#99005c 334px,#990041 377px,#99002a 438px,#99001a 503px)"></i><i style="background:linear-gradient(90deg,#004099 62px,#012f99 163px,#022f99 164px,#99015e 331px,#990043 373px,#99002b 433px,#99001b 500px)"></i><i style="background:linear-gradient(90deg,#003f99 62px,#012f99 162px,#032e99 164px,#990160 329px,#990045 370px,#99002d 428px,#99001b 497px)"></i><i style="background:linear-gradient(90deg,#003e99 62px,#012e99 162px,#032e99 164px,#990163 326px,#990047 366px,#99002f 423px,#99001c 495px)"></i><i style="background:linear-gradient(90deg,#003d99 63px,#012d99 162px,#022d99 163px,#990165 324px,#990049 363px,#990031 418px,#99001d 492px)"></i><i style="background:linear-gradient(90deg,#003d99 63px,#012d99 161px,#032c99 163px,#990166 322px,#99004b 360px,#990032 414px,#99001e 489px)"></i><i style="background:linear-gradient(90deg,#003c99 64px,#012c99 161px,#022c99 162px,#990169 319px,#99004e 356px,#990035 408px,#99001f 484px,#99001e 486px)"></i><i style="background:linear-gradient(90deg,#003b99 64px,#012b99 161px,#022b99 162px,#99016b 317px,#99004f 354px,#990036 405px,#990020 480px,#99001f 483px)"></i><i style="background:linear-gradient(90deg,#003a99 65px,#012a99 160px,#032a99 162px,#99016e 314px,#990052 350px,#990038 400px,#902 473px,#990020 480px)"></i><i style="background:linear-gradient(90deg,#003a99 65px,#012a99 160px,#022999 161px,#990171 312px,#990054 347px,#99003a 396px,#990023 467px,#990021 478px)"></i><i style="background:linear-gradient(90deg,#003999 65px,#012999 160px,#022999 161px,#990173 310px,#990056 344px,#99003d 391px,#990026 459px,#902 475px)"></i><i style="background:linear-gradient(90deg,#003899 66px,#012899 159px,#032899 161px,#990176 307px,#990059 340px,#99003f 386px,#990028 452px,#902 472px)"></i><i style="background:linear-gradient(90deg,#003799 66px,#012899 159px,#022799 160px,#990178 305px,#99005b 338px,#990041 383px,#990029 448px,#990023 469px)"></i><i style="background:linear-gradient(90deg,#003799 67px,#012799 158px,#032799 160px,#99017c 302px,#99005e 334px,#990043 378px,#99002b 440px,#990024 466px)"></i><i style="background:linear-gradient(90deg,#003699 67px,#012699 158px,#032699 160px,#99017e 300px,#990061 331px,#990046 373px,#99002e 433px,#990025 463px)"></i><i style="background:linear-gradient(90deg,#003599 68px,#012699 158px,#022599 159px,#990181 298px,#990063 328px,#990048 369px,#990030 427px,#990026 461px)"></i><i style="background:linear-gradient(90deg,#003499 68px,#012599 157px,#032599 159px,#990185 295px,#990067 324px,#99004b 364px,#990032 420px,#990027 458px)"></i><i style="background:linear-gradient(90deg,#003499 68px,#012499 157px,#022499 158px,#990187 293px,#990069 322px,#99004d 361px,#990034 416px,#990028 455px)"></i><i style="background:linear-gradient(90deg,#039 69px,#012499 157px,#022399 158px,#99018c 290px,#99006c 318px,#990050 356px,#990037 409px,#990029 452px)"></i><i style="background:linear-gradient(90deg,#003299 69px,#012399 156px,#032399 158px,#99018e 288px,#99006f 315px,#990053 352px,#990039 403px,#99002a 449px)"></i><i style="background:linear-gradient(90deg,#003199 70px,#012299 156px,#022299 157px,#990191 286px,#990072 313px,#905 349px,#99003b 399px,#99002b 446px)"></i><i style="background:linear-gradient(90deg,#003199 70px,#012299 156px,#022199 157px,#990196 283px,#990076 309px,#990058 344px,#99003e 392px,#99002c 443px)"></i><i style="background:linear-gradient(90deg,#003099 71px,#012199 155px,#032199 157px,#990199 281px,#990079 306px,#99005b 340px,#990041 386px,#99002d 441px)"></i><i style="background:linear-gradient(90deg,#002f99 71px,#012099 155px,#022099 156px,#960199 279px,#990097 282px,#907 308px,#99005a 342px,#990040 389px,#99002e 438px)"></i><i style="background:linear-gradient(90deg,#002f99 72px,#022099 155px,#021f99 156px,#910199 276px,#990098 282px,#907 308px,#99005a 342px,#990040 389px,#99002f 435px)"></i><i style="background:linear-gradient(90deg,#002e99 72px,#011f99 154px,#031f99 156px,#8e0199 274px,#990098 282px,#907 308px,#99005b 342px,#990040 389px,#990030 432px)"></i><i style="background:linear-gradient(90deg,#002d99 73px,#011e99 154px,#021e99 155px,#8a0199 271px,#990098 282px,#990078 308px,#99005a 343px,#990040 391px,#990031 429px)"></i><i style="background:linear-gradient(90deg,#002c99 73px,#011e99 153px,#031e99 155px,#870199 269px,#990098 282px,#990078 308px,#99005a 343px,#990040 391px,#990032 426px)"></i><i style="background:linear-gradient(90deg,#002c99 74px,#011d99 153px,#021d99 154px,#840199 267px,#990098 282px,#990078 308px,#99005a 343px,#990040 391px,#903 424px)"></i><i style="background:linear-gradient(90deg,#002b99 74px,#011d99 153px,#021c99 154px,#800199 264px,#990098 282px,#990078 308px,#99005b 343px,#990040 391px,#990034 421px)"></i><i style="background:linear-gradient(90deg,#002a99 74px,#011c99 152px,#031c99 154px,#7d0199 262px,#990098 282px,#990078 308px,#99005b 343px,#990040 391px,#990036 418px)"></i><i style="background:linear-gradient(90deg,#002a99 75px,#011b99 152px,#021b99 153px,#790199 259px,#990098 282px,#990078 308px,#99005b 343px,#990041 391px,#990037 415px)"></i><i style="background:linear-gradient(90deg,#002999 75px,#011b99 152px,#021b99 153px,#760199 257px,#990098 282px,#990078 308px,#99005b 343px,#990041 391px,#990038 412px)"></i><i style="background:linear-gradient(90deg,#002899 76px,#011a99 151px,#031a99 153px,#740199 255px,#990098 282px,#990079 308px,#99005b 343px,#990041 391px,#99003a 409px)"></i><i style="background:linear-gradient(90deg,#002899 76px,#011a99 151px,#021999 152px,#700199 252px,#909 282px,#990079 308px,#99005b 343px,#990041 391px,#99003b 407px)"></i><i style="background:linear-gradient(90deg,#002799 77px,#021999 151px,#021999 152px,#6d0199 250px,#909 282px,#990079 308px,#99005c 343px,#990041 391px,#99003c 404px)"></i><i style="background:linear-gradient(90deg,#002699 77px,#011999 150px,#021899 151px,#690199 247px,#909 282px,#990079 308px,#99005c 343px,#990041 391px,#99003d 401px)"></i><i style="background:linear-gradient(90deg,#002599 78px,#011899 150px,#021899 151px,#670199 245px,#909 282px,#990079 308px,#99005c 343px,#990042 391px,#99003f 398px)"></i><i style="background:linear-gradient(90deg,#002599 78px,#011799 149px,#021799 151px,#650199 243px,#990097 283px,#907 310px,#99005a 346px,#990040 395px)"></i><i style="background:linear-gradient(90deg,#002499 79px,#011799 149px,#021799 150px,#610199 240px,#990098 283px,#907 310px,#99005a 346px,#990042 392px)"></i><i style="background:linear-gradient(90deg,#002399 79px,#011699 149px,#021699 150px,#5f0199 238px,#990098 283px,#990078 310px,#99005b 346px,#990043 390px)"></i><i style="background:linear-gradient(90deg,#002399 80px,#011699 148px,#031599 150px,#5b0199 235px,#990098 283px,#990078 310px,#99005b 346px,#904 387px)"></i><i style="background:linear-gradient(90deg,#029 80px,#011599 148px,#021599 149px,#590199 233px,#990098 283px,#990078 310px,#99005b 346px,#990046 384px)"></i><i style="background:linear-gradient(90deg,#002199 81px,#011599 148px,#021499 149px,#570199 231px,#960099 280px,#990097 284px,#990076 312px,#990059 349px,#990047 381px)"></i><i style="background:linear-gradient(90deg,#002199 81px,#011499 147px,#031499 149px,#530199 228px,#990098 283px,#990078 310px,#99005b 346px,#990049 378px)"></i><i style="background:linear-gradient(90deg,#002099 82px,#011399 147px,#021399 148px,#510199 226px,#900099 276px,#990098 283px,#990078 310px,#99005b 346px,#99004b 375px)"></i><i style="background:linear-gradient(90deg,#001f99 82px,#011399 147px,#021399 148px,#4e0199 223px,#8d0099 274px,#990098 283px,#990079 310px,#99005b 347px,#99004c 372px)"></i><i style="background:linear-gradient(90deg,#001e99 83px,#011299 146px,#021299 147px,#4c0199 221px,#8a0099 272px,#990098 283px,#990079 310px,#99005b 347px,#99004e 370px)"></i><i style="background:linear-gradient(90deg,#001e99 83px,#011299 146px,#021299 147px,#490199 219px,#890099 271px,#990098 283px,#990078 311px,#99005b 348px,#99004f 367px)"></i><i style="background:linear-gradient(90deg,#001d99 84px,#011199 145px,#021199 147px,#460199 216px,#850099 268px,#990098 283px,#990078 311px,#99005b 348px,#990051 364px)"></i><i style="background:linear-gradient(90deg,#001d99 84px,#011199 145px,#021199 146px,#440199 214px,#820099 266px,#909 283px,#990078 311px,#99005b 348px,#990053 361px)"></i><i style="background:linear-gradient(90deg,#001c99 85px,#011099 145px,#021099 146px,#420199 212px,#810099 265px,#909 283px,#990078 311px,#99005b 348px,#905 358px)"></i><i style="background:linear-gradient(90deg,#001b99 85px,#011099 144px,#020f99 146px,#3f0199 209px,#7d0099 262px,#909 283px,#990078 311px,#99005b 348px,#990057 355px)"></i><i style="background:linear-gradient(90deg,#001a99 86px,#010f99 144px,#020f99 145px,#3d0199 207px,#7c0099 261px,#990097 284px,#990078 312px,#99005a 350px,#990058 353px)"></i><i style="background:linear-gradient(90deg,#001a99 86px,#010f99 144px,#020e99 145px,#3a0199 204px,#780099 258px,#990098 284px,#990078 312px,#99005a 350px)"></i><i style="background:linear-gradient(90deg,#001999 87px,#010e99 143px,#030e99 145px,#380199 202px,#709 257px,#990098 284px,#990078 312px,#99005c 347px)"></i><i style="background:linear-gradient(90deg,#001999 87px,#010e99 143px,#020d99 144px,#370199 200px,#740099 255px,#990098 284px,#990078 312px,#99005f 344px)"></i><i style="background:linear-gradient(90deg,#001899 88px,#010d99 143px,#020d99 144px,#340199 197px,#720099 253px,#990098 284px,#990078 312px,#990061 341px)"></i><i style="background:linear-gradient(90deg,#001799 88px,#010d99 142px,#020c99 143px,#320199 195px,#700099 251px,#990098 284px,#907 313px,#990063 338px)"></i><i style="background:linear-gradient(90deg,#001699 89px,#010c99 142px,#020c99 143px,#2f0199 192px,#6d0099 249px,#990098 284px,#990078 313px,#990065 336px)"></i><i style="background:linear-gradient(90deg,#001699 89px,#020c99 142px,#020b99 143px,#2d0199 190px,#6b0099 247px,#990098 284px,#990078 313px,#990067 333px)"></i><i style="background:linear-gradient(90deg,#001599 90px,#010b99 141px,#020b99 142px,#2c0199 188px,#6a0099 246px,#990098 284px,#990078 313px,#990069 330px)"></i><i style="background:linear-gradient(90deg,#001499 91px,#010b99 141px,#020a99 142px,#290199 185px,#609 243px,#990098 284px,#990078 313px,#99006c 327px)"></i><i style="background:linear-gradient(90deg,#001499 91px,#010a99 140px,#020a99 142px,#270199 183px,#640099 241px,#990098 284px,#990078 313px,#99006e 324px)"></i><i style="background:linear-gradient(90deg,#001399 92px,#010a99 140px,#020999 141px,#250199 180px,#620099 239px,#990098 284px,#990078 313px,#990071 321px)"></i><i style="background:linear-gradient(90deg,#001399 92px,#010999 140px,#020999 141px,#230199 178px,#600099 237px,#990098 284px,#990078 313px,#990073 319px)"></i><i style="background:linear-gradient(90deg,#001299 93px,#010999 139px,#020899 141px,#210199 176px,#5f0099 236px,#909 284px,#990078 313px,#990076 316px)"></i><i style="background:linear-gradient(90deg,#019 93px,#010899 139px,#020899 140px,#1f0199 173px,#5b0099 233px,#909 284px,#990079 313px)"></i><i style="background:linear-gradient(90deg,#019 94px,#010899 139px,#020799 140px,#1d0199 171px,#5a0099 232px,#909 284px,#99007c 310px)"></i><i style="background:linear-gradient(90deg,#001099 95px,#010799 138px,#020799 139px,#1b0199 168px,#570099 229px,#990097 285px,#99007f 307px)"></i><i style="background:linear-gradient(90deg,#000f99 95px,#010799 138px,#020799 139px,#190199 166px,#560099 228px,#960099 282px,#990096 286px,#990082 304px)"></i><i style="background:linear-gradient(90deg,#000f99 96px,#010699 138px,#020699 139px,#180099 164px,#540099 226px,#940099 280px,#990098 285px,#990085 301px)"></i><i style="background:linear-gradient(90deg,#000e99 96px,#010699 137px,#020699 138px,#150199 161px,#520099 224px,#910099 278px,#990098 285px,#990087 299px)"></i><i style="background:linear-gradient(90deg,#000d99 97px,#010599 137px,#020599 138px,#140199 159px,#500099 222px,#990098 285px,#99008b 296px)"></i><i style="background:linear-gradient(90deg,#000d99 98px,#020599 137px,#020599 138px,#110199 156px,#4e0099 220px,#8d0099 275px,#990098 285px,#99008e 293px)"></i><i style="background:linear-gradient(90deg,#000c99 98px,#010599 136px,#020499 137px,#100199 154px,#4c0099 218px,#8c0099 274px,#990098 285px,#990092 290px)"></i><i style="background:linear-gradient(90deg,#000b99 99px,#010499 136px,#020499 137px,#0f0099 152px,#4b0099 217px,#8b0099 273px,#990098 285px,#990096 287px)"></i><i style="background:linear-gradient(90deg,#000b99 99px,#010499 135px,#020399 136px,#0c0199 149px,#480099 214px,#870099 270px,#909 284px)"></i><i style="background:linear-gradient(90deg,#000a99 100px,#010399 135px,#020399 136px,#0b0199 147px,#470099 213px,#870099 270px,#960099 282px)"></i><i style="background:linear-gradient(90deg,#000999 101px,#010399 135px,#020299 136px,#0a0099 145px,#460099 211px,#840099 268px,#920099 279px)"></i><i style="background:linear-gradient(90deg,#000999 102px,#010299 134px,#020299 135px,#070199 142px,#409 209px,#820099 266px,#8e0099 276px)"></i><i style="background:linear-gradient(90deg,#000899 102px,#010299 134px,#070099 141px,#430099 208px,#820099 266px,#8b0099 273px)"></i><i style="background:linear-gradient(90deg,#000899 103px,#010199 134px,#450099 210px,#840099 268px,#870099 270px)"></i><i style="background:linear-gradient(90deg,#000799 104px,#010199 133px,#3c0099 201px,#7b0099 260px,#830099 267px)"></i><i style="background:linear-gradient(90deg,#000699 104px,#010099 133px,#3d0099 201px,#7b0099 260px,#810099 265px)"></i><i style="background:linear-gradient(90deg,#000699 105px,#020099 133px,#3d0099 201px,#7b0099 260px,#7d0099 262px)"></i><i style="background:linear-gradient(90deg,#000599 106px,#010099 132px,#3d0099 201px,#7a0099 259px)"></i><i style="background:linear-gradient(90deg,#000499 106px,#010099 132px,#3d0099 201px,#760099 256px)"></i><i style="background:linear-gradient(90deg,#000499 107px,#020099 132px,#3d0099 201px,#730099 253px)"></i><i style="background:linear-gradient(90deg,#000399 108px,#010099 131px,#3c0099 200px,#700099 250px)"></i><i style="background:linear-gradient(90deg,#000299 109px,#010099 131px,#3d0099 200px,#6e0099 248px)"></i><i style="background:linear-gradient(90deg,#000299 109px,#020099 131px,#3e0099 201px,#6a0099 245px)"></i><i style="background:linear-gradient(90deg,#000199 110px,#010099 130px,#3d0099 200px,#670099 242px)"></i><i style="background:linear-gradient(90deg,#000199 111px,#010099 130px,#3d0099 200px,#640099 239px)"></i><i style="background:linear-gradient(90deg,#009 112px,#020099 130px,#3d0099 200px,#610099 236px)"></i><i style="background:linear-gradient(90deg,#009 113px,#010099 129px,#3c0099 199px,#5e0099 233px)"></i><i style="background:linear-gradient(90deg,#009 114px,#020099 129px,#3e0099 200px,#5c0099 231px)"></i><i style="background:linear-gradient(90deg,#009 115px,#020099 129px,#3e0099 200px,#590099 228px)"></i><i style="background:linear-gradient(90deg,#009 115px,#010099 128px,#3d0099 199px,#560099 225px)"></i><i style="background:linear-gradient(90deg,#009 116px,#020099 128px,#3d0099 199px,#530099 222px)"></i><i style="background:linear-gradient(90deg,#009 117px,#020099 128px,#3d0099 199px,#500099 219px)"></i><i style="background:linear-gradient(90deg,#009 118px,#020099 128px,#3d0099 199px,#4d0099 216px)"></i><i style="background:linear-gradient(90deg,#009 119px,#020099 128px,#3e0099 200px,#4b0099 213px)"></i><i style="background:linear-gradient(90deg,#009 120px,#030099 128px,#3f0099 200px,#490099 211px)"></i><i style="background:linear-gradient(90deg,#009 122px,#180099 155px,#460099 208px)"></i><i style="background:linear-gradient(90deg,#009 123px,#350099 189px,#409 205px)"></i><i style="background:linear-gradient(90deg,#009 124px,#3c0099 197px,#410099 202px)"></i><i style="background:linear-gradient(90deg,#010099 125px,#3d0099 198px,#3e0099 199px)"></i><i style="background:linear-gradient(90deg,#030099 126px,#3c0099 196px)"></i><i style="background:linear-gradient(90deg,#040099 128px,#3a0099 194px)"></i><i style="background:linear-gradient(90deg,#050099 129px,#380099 191px)"></i><i style="background:linear-gradient(90deg,#060099 130px,#350099 188px)"></i><i style="background:linear-gradient(90deg,#080099 132px,#309 185px)"></i><i style="background:linear-gradient(90deg,#090099 133px,#300099 182px)"></i><i style="background:linear-gradient(90deg,#0b0099 135px,#2e0099 179px)"></i><i style="background:linear-gradient(90deg,#0c0099 136px,#2c0099 177px)"></i><i style="background:linear-gradient(90deg,#0e0099 138px,#2a0099 174px)"></i><i style="background:linear-gradient(90deg,#0f0099 139px,#280099 171px)"></i><i style="background:linear-gradient(90deg,#100099 141px,#260099 168px)"></i><i style="background:linear-gradient(90deg,#109 142px,#230099 165px)"></i><i style="background:linear-gradient(90deg,#130099 144px,#210099 162px)"></i><i style="background:linear-gradient(90deg,#140099 145px,#200099 160px)"></i><i style="background:linear-gradient(90deg,#160099 147px,#1e0099 157px)"></i><i style="background:linear-gradient(90deg,#180099 149px,#1b0099 154px)"></i><i></i><i></i><i></i><i></i></div>
<div class="cl" style="left:1288px;top:276px;width:438px;height:364px;clip-path:polygon(434.0px 180.3px,135.1px 0.3px,3.2px 360.3px)"><i style="background:linear-gradient(90deg,#00ff01 133px,#05ff00 138px)"></i><i style="background:linear-gradient(90deg,#00ff01 133px,#06ff00 139px)"></i><i style="background:linear-gradient(90deg,#00ff02 133px,#09ff00 141px)"></i><i style="background:linear-gradient(90deg,#00ff03 132px,#0aff00 141px,#0dff00 143px)"></i><i style="background:linear-gradient(90deg,#00ff03 132px,#0fff00 144px)"></i><i style="background:linear-gradient(90deg,#00ff04 132px,#12ff00 146px)"></i><i style="background:linear-gradient(90deg,#00ff05 131px,#0eff01 143px,#15ff00 148px)"></i><i style="background:linear-gradient(90deg,#00ff06 131px,#17ff00 149px)"></i><i style="background:linear-gradient(90deg,#00ff06 130px,#06ff04 136px,#1aff00 151px)"></i><i style="background:linear-gradient(90deg,#00ff07 130px,#15ff01 147px,#1eff00 153px)"></i><i style="background:linear-gradient(90deg,#00ff08 130px,#20ff00 154px)"></i><i style="background:linear-gradient(90deg,#00ff09 129px,#07ff06 136px,#23ff00 156px)"></i><i style="background:linear-gradient(90deg,#00ff09 129px,#25ff00 157px,#27ff00 158px)"></i><i style="background:linear-gradient(90deg,#00ff0a 129px,#29ff00 159px)"></i><i style="background:linear-gradient(90deg,#00ff0b 128px,#0aff08 137px,#2dff00 161px)"></i><i style="background:linear-gradient(90deg,#00ff0c 128px,#2fff00 162px,#30ff00 163px)"></i><i style="background:linear-gradient(90deg,#00ff0c 127px,#05ff0b 132px,#32ff00 164px)"></i><i style="background:linear-gradient(90deg,#00ff0d 127px,#0dff09 138px,#36ff00 166px)"></i><i style="background:linear-gradient(90deg,#00ff0e 127px,#34ff00 164px,#3aff00 168px)"></i><i style="background:linear-gradient(90deg,#00ff0f 126px,#06ff0d 132px,#3cff00 169px)"></i><i style="background:linear-gradient(90deg,#00ff0f 126px,#15ff0a 142px,#40ff00 171px)"></i><i style="background:linear-gradient(90deg,#00ff10 126px,#38ff02 165px,#4f0 173px)"></i><i style="background:linear-gradient(90deg,#0f1 125px,#08ff0f 132px,#46ff00 174px)"></i><i style="background:linear-gradient(90deg,#00ff12 125px,#24ff09 151px,#4aff00 176px)"></i><i style="background:linear-gradient(90deg,#00ff12 125px,#3aff04 165px,#4eff00 178px)"></i><i style="background:linear-gradient(90deg,#00ff14 124px,#09ff11 132px,#51ff00 179px)"></i><i style="background:linear-gradient(90deg,#00ff14 124px,#2fff08 157px,#5f0 181px)"></i><i style="background:linear-gradient(90deg,#00ff15 123px,#05ff14 128px,#51ff01 178px,#59ff00 183px)"></i><i style="background:linear-gradient(90deg,#00ff16 123px,#0eff12 134px,#5aff00 183px,#5cff00 184px)"></i><i style="background:linear-gradient(90deg,#00ff17 123px,#34ff0a 159px,#60ff00 186px)"></i><i style="background:linear-gradient(90deg,#00ff18 122px,#06ff16 128px,#52ff03 177px,#65ff00 188px)"></i><i style="background:linear-gradient(90deg,#00ff18 122px,#14ff13 137px,#60ff01 185px,#67ff00 189px)"></i><i style="background:linear-gradient(90deg,#00ff19 122px,#38ff0b 160px,#6cff00 191px)"></i><i style="background:linear-gradient(90deg,#00ff1a 121px,#08ff18 128px,#55ff05 177px,#70ff00 193px)"></i><i style="background:linear-gradient(90deg,#00ff1b 121px,#22ff12 145px,#70ff00 192px,#73ff00 194px)"></i><i style="background:linear-gradient(90deg,#00ff1c 121px,#3aff0d 160px,#78ff00 196px)"></i><i style="background:linear-gradient(90deg,#00ff1d 120px,#0aff1a 128px,#56ff08 176px,#7dff00 198px)"></i><i style="background:linear-gradient(90deg,#00ff1d 120px,#2fff12 152px,#7cff00 197px,#80ff00 199px)"></i><i style="background:linear-gradient(90deg,#00ff1f 119px,#05ff1d 124px,#51ff0b 172px,#85ff00 201px)"></i><i style="background:linear-gradient(90deg,#00ff1f 119px,#0dff1c 129px,#59ff0a 176px,#8aff00 203px)"></i><i style="background:linear-gradient(90deg,#00ff20 119px,#33ff14 153px,#81ff01 198px,#8dff00 204px)"></i><i style="background:linear-gradient(90deg,#00ff21 118px,#07ff1f 124px,#53ff0d 172px,#92ff00 206px)"></i><i style="background:linear-gradient(90deg,#0f2 118px,#13ff1d 132px,#61ff0b 179px,#97ff00 208px)"></i><i style="background:linear-gradient(90deg,#00ff23 118px,#37ff16 154px,#85ff04 198px,#9aff00 209px)"></i><i style="background:linear-gradient(90deg,#00ff24 117px,#08ff21 124px,#54ff10 171px,#a0ff00 211px)"></i><i style="background:linear-gradient(90deg,#00ff25 117px,#20ff1d 139px,#6dff0b 184px,#a5ff00 213px)"></i><i style="background:linear-gradient(90deg,#00ff26 116px,#05ff24 121px,#51ff13 168px,#a0ff01 210px,#a8ff00 214px)"></i><i style="background:linear-gradient(90deg,#00ff27 116px,#0aff24 124px,#56ff13 170px,#a4ff01 211px,#aeff00 216px)"></i><i style="background:linear-gradient(90deg,#00ff27 116px,#2dff1d 146px,#7bff0b 190px,#b1ff00 217px)"></i><i style="background:linear-gradient(90deg,#00ff29 115px,#05ff27 120px,#52ff16 167px,#a0ff04 208px,#b7ff00 219px)"></i><i style="background:linear-gradient(90deg,#00ff29 115px,#0dff26 125px,#5aff15 171px,#aaff03 212px,#bdff00 221px)"></i><i style="background:linear-gradient(90deg,#00ff2a 115px,#33ff1e 148px,#81ff0d 191px,#c1ff00 222px)"></i><i style="background:linear-gradient(90deg,#00ff2b 114px,#05ff2a 119px,#51ff19 165px,#a0ff07 206px,#c7ff00 224px)"></i><i style="background:linear-gradient(90deg,#00ff2c 114px,#14ff27 128px,#61ff16 173px,#b0ff05 213px,#cdff00 226px)"></i><i style="background:linear-gradient(90deg,#00ff2d 114px,#37ff21 149px,#84ff10 191px,#d1ff00 227px)"></i><i style="background:linear-gradient(90deg,#00ff2e 113px,#07ff2c 119px,#52ff1c 164px,#a2ff0a 205px,#d7ff00 229px)"></i><i style="background:linear-gradient(90deg,#00ff2f 113px,#1cff29 132px,#6aff18 176px,#b9ff06 215px,#df0 231px)"></i><i style="background:linear-gradient(90deg,#00ff30 112px,#04ff2f 116px,#4fff1f 161px,#9fff0d 202px,#e1ff00 232px)"></i><i style="background:linear-gradient(90deg,#00ff31 112px,#09ff2f 119px,#55ff1e 164px,#a4ff0d 204px,#e8ff00 234px)"></i><i style="background:linear-gradient(90deg,#00ff32 112px,#2eff28 141px,#7bff17 183px,#cbff06 221px,#efff00 236px)"></i><i style="background:linear-gradient(90deg,#0f3 111px,#05ff32 116px,#52ff21 161px,#a1ff10 201px,#f3ff00 237px)"></i><i style="background:linear-gradient(90deg,#00ff34 111px,#0cff31 120px,#58ff21 164px,#a6ff10 203px,#f7ff00 238px,#faff00 239px)"></i><i style="background:linear-gradient(90deg,#00ff35 111px,#33ff2a 143px,#80ff1a 184px,#d0ff09 221px,#feff00 240px,#fffd00 241px)"></i><i style="background:linear-gradient(90deg,#00ff36 110px,#06ff35 115px,#51ff25 159px,#a1ff14 199px,#f1ff03 234px,#fffe00 240px,#fff900 242px)"></i><i style="background:linear-gradient(90deg,#00ff37 110px,#13ff33 123px,#5fff23 166px,#afff12 205px,#fffe01 239px,#fff200 244px)"></i><i style="background:linear-gradient(90deg,#00ff38 110px,#38ff2c 144px,#86ff1c 185px,#d6ff0b 221px,#ffff03 238px,#ffeb00 246px)"></i><i style="background:linear-gradient(90deg,#00ff39 109px,#07ff37 115px,#54ff28 159px,#a3ff17 198px,#f5ff06 233px,#ffff04 237px,#ffe700 247px)"></i><i style="background:linear-gradient(90deg,#00ff3a 109px,#17ff35 124px,#64ff25 167px,#b4ff15 205px,#feff06 236px,#ffe100 249px)"></i><i style="background:linear-gradient(90deg,#00ff3c 108px,#04ff3a 112px,#50ff2b 156px,#9fff1a 195px,#f1ff0a 230px,#fffe06 236px,#ffdb00 251px)"></i><i style="background:linear-gradient(90deg,#00ff3d 108px,#09ff3a 115px,#55ff2b 158px,#a5ff1a 197px,#f6ff0a 231px,#fffe08 235px,#ffd800 252px)"></i><i style="background:linear-gradient(90deg,#00ff3e 108px,#2eff34 136px,#7cff24 177px,#cbff14 213px,#ffff09 234px,#ffd600 252px,#ffd200 254px)"></i><i style="background:linear-gradient(90deg,#00ff3f 107px,#06ff3d 112px,#51ff2e 155px,#9fff1e 193px,#efff0e 227px,#ffff0b 233px,#ffd400 252px,#ffcd00 256px)"></i><i style="background:linear-gradient(90deg,#00ff40 107px,#0dff3d 116px,#5aff2d 159px,#aaff1d 197px,#fcff0d 231px,#fffd0c 233px,#ffd502 251px,#ffc900 257px)"></i><i style="background:linear-gradient(90deg,#00ff41 107px,#34ff36 138px,#82ff27 178px,#d3ff16 214px,#fffe0d 232px,#ffd503 250px,#ffc400 259px)"></i><i style="background:linear-gradient(90deg,#00ff42 106px,#06ff40 111px,#52ff31 154px,#a1ff22 192px,#f3ff11 226px,#fffe0f 231px,#ffd504 249px,#ffbf00 261px)"></i><i style="background:linear-gradient(90deg,#00ff43 106px,#0fff40 116px,#5bff31 158px,#aaff21 195px,#ffff10 230px,#ffd506 248px,#ffbc00 262px)"></i><i style="background:linear-gradient(90deg,#0f4 106px,#38ff39 139px,#86ff2a 178px,#d6ff1a 213px,#ffff12 229px,#ffd406 248px,#ffb700 264px)"></i><i style="background:linear-gradient(90deg,#00ff45 105px,#08ff43 111px,#54ff35 153px,#a4ff25 191px,#f6ff15 225px,#fffd13 229px,#ffd408 247px,#ffb200 266px)"></i><i style="background:linear-gradient(90deg,#00ff46 105px,#16ff42 119px,#63ff33 160px,#b3ff24 197px,#fffe14 228px,#ffd409 246px,#ffb000 267px)"></i><i style="background:linear-gradient(90deg,#00ff48 104px,#04ff47 108px,#50ff38 150px,#9dff29 187px,#f0ff19 221px,#fffe16 227px,#ffd40a 245px,#ffae00 267px,#ffab00 269px)"></i><i style="background:linear-gradient(90deg,#00ff49 104px,#0aff47 111px,#57ff38 153px,#a6ff29 190px,#f7ff19 223px,#ffff18 226px,#ffd50c 244px,#ffae01 266px,#ffa700 271px)"></i><i style="background:linear-gradient(90deg,#00ff4a 104px,#2cff41 130px,#79ff33 169px,#c9ff23 204px,#ffff19 225px,#ffd30c 244px,#ffad01 266px,#ffa400 272px)"></i><i style="background:linear-gradient(90deg,#00ff4b 103px,#04ff4a 107px,#51ff3c 149px,#a0ff2d 186px,#f1ff1d 219px,#feff1b 224px,#ffd10d 244px,#ffab02 266px,#ffa000 274px)"></i><i style="background:linear-gradient(90deg,#00ff4c 103px,#0cff4a 111px,#58ff3b 152px,#a8ff2c 189px,#fffe1c 224px,#ffd40f 242px,#ffad04 264px,#ff9c00 276px)"></i><i style="background:linear-gradient(90deg,#00ff4d 103px,#32ff44 132px,#7fff36 170px,#ceff27 204px,#fffe1d 223px,#ffd411 241px,#ffad05 263px,#f90 277px)"></i><i style="background:linear-gradient(90deg,#00ff4f 102px,#06ff4d 107px,#52ff3f 148px,#a2ff30 185px,#f4ff21 218px,#ffff1f 222px,#ffd613 239px,#ffaf07 261px,#ff9600 279px)"></i><i style="background:linear-gradient(90deg,#00ff50 102px,#0aff4e 109px,#57ff40 150px,#a6ff31 186px,#f7ff22 218px,#ffff21 221px,#ffd413 239px,#ffad07 261px,#ff9200 281px)"></i><i style="background:linear-gradient(90deg,#00ff51 101px,#04ff50 105px,#50ff42 146px,#9eff34 182px,#f1ff25 215px,#feff22 220px,#ffd114 240px,#ffaa07 262px,#ff9000 282px)"></i><i style="background:linear-gradient(90deg,#00ff52 101px,#08ff51 107px,#53ff43 147px,#a2ff35 183px,#f3ff26 215px,#fffe23 220px,#ffd516 237px,#ffad0a 259px,#ff8c00 284px)"></i><i style="background:linear-gradient(90deg,#00ff54 101px,#13ff50 113px,#61ff42 153px,#afff34 188px,#fffe25 219px,#ffd518 236px,#ffaf0b 257px,#ff8b00 284px,#ff8900 286px)"></i><i style="background:linear-gradient(90deg,#0f5 100px,#04ff54 104px,#4fff46 144px,#9eff38 180px,#efff2a 212px,#ffff27 218px,#ffd619 235px,#ffaf0d 256px,#ff8b01 283px,#ff8600 287px)"></i><i style="background:linear-gradient(90deg,#00ff56 100px,#08ff54 106px,#55ff47 146px,#a4ff39 182px,#f6ff2a 214px,#ffff29 217px,#ffd41a 235px,#ffae0d 256px,#ff8a01 283px,#ff8300 289px)"></i><i style="background:linear-gradient(90deg,#00ff57 100px,#2cff4f 125px,#7aff42 163px,#cbff33 197px,#feff2a 216px,#ffd01a 236px,#ffa90d 258px,#ff8501 286px,#ff8000 291px)"></i><i style="background:linear-gradient(90deg,#00ff59 99px,#04ff58 103px,#51ff4a 143px,#a0ff3c 179px,#f2ff2e 211px,#fffe2b 216px,#ffd41d 233px,#ffae10 254px,#ff8a03 281px,#ff7e00 292px)"></i><i style="background:linear-gradient(90deg,#00ff5a 99px,#0aff58 106px,#56ff4b 145px,#a4ff3d 180px,#fffe2d 215px,#ffd51f 232px,#ffae11 253px,#ff8904 280px,#ff7b00 294px)"></i><i style="background:linear-gradient(90deg,#00ff5b 99px,#33ff52 127px,#80ff45 164px,#d1ff37 197px,#ffff2f 214px,#ffd520 231px,#ffae12 252px,#ff8905 279px,#ff7800 296px)"></i><i style="background:linear-gradient(90deg,#00ff5d 98px,#06ff5b 103px,#52ff4e 142px,#a0ff41 177px,#f1ff33 208px,#ffff31 213px,#ffd321 231px,#ffad13 252px,#ff8806 279px,#ff7600 297px)"></i><i style="background:linear-gradient(90deg,#00ff5e 98px,#09ff5c 104px,#55ff4f 143px,#a4ff42 178px,#f6ff34 209px,#fffd32 213px,#ffd322 230px,#ffad14 251px,#ff8807 278px,#ff7300 299px)"></i><i style="background:linear-gradient(90deg,#00ff5f 97px,#04ff5e 101px,#50ff51 140px,#9fff44 175px,#efff37 206px,#fffe34 212px,#ffd424 229px,#ffad16 250px,#ff8808 277px,#ff7100 300px)"></i><i style="background:linear-gradient(90deg,#00ff61 97px,#07ff5f 102px,#53ff52 141px,#a3ff45 176px,#f4ff38 207px,#fffe36 211px,#ffd426 228px,#ffad17 249px,#ff8909 275px,#ff6e00 302px)"></i><i style="background:linear-gradient(90deg,#00ff62 97px,#12ff5e 108px,#5fff52 146px,#aeff45 180px,#ffff37 210px,#ffd628 226px,#ffb019 246px,#ff8c0b 272px,#ff6b00 304px)"></i><i style="background:linear-gradient(90deg,#00ff63 96px,#04ff62 100px,#51ff56 139px,#9fff49 173px,#f0ff3c 204px,#ffff39 209px,#ffd228 227px,#ffab19 248px,#ff880b 274px,#ff6900 305px)"></i><i style="background:linear-gradient(90deg,#00ff65 96px,#09ff63 102px,#54ff57 140px,#a3ff4a 174px,#f5ff3d 205px,#fffd3a 209px,#ffd52a 225px,#ffaf1b 245px,#ff8a0d 271px,#ff6900 304px,#ff6700 307px)"></i><i style="background:linear-gradient(90deg,#0f6 96px,#2cff5f 120px,#79ff52 156px,#c8ff45 188px,#fffe3c 208px,#ffd52c 224px,#ffaf1d 244px,#ff8a0e 270px,#ff6901 303px,#ff6400 309px)"></i><i style="background:linear-gradient(90deg,#00ff67 95px,#05ff66 99px,#50ff5a 137px,#9eff4e 171px,#f1ff41 202px,#fffe3e 207px,#ffd52e 223px,#ffaf1e 243px,#ff8a0f 269px,#ff6902 302px,#ff6200 310px)"></i><i style="background:linear-gradient(90deg,#00ff69 95px,#07ff67 100px,#53ff5b 138px,#a3ff4f 172px,#f3ff42 202px,#ffff40 206px,#ffd62f 222px,#ffaf1f 242px,#ff8b11 267px,#ff6a03 300px,#ff6000 312px)"></i><i style="background:linear-gradient(90deg,#00ff6a 95px,#33ff62 122px,#80ff56 157px,#d1ff49 189px,#ffff42 205px,#ffd430 222px,#ffad20 242px,#ff8911 268px,#ff6803 301px,#ff5d00 314px)"></i><i style="background:linear-gradient(90deg,#00ff6c 94px,#07ff6a 99px,#54ff5e 137px,#a3ff52 171px,#f5ff45 201px,#fffd43 205px,#ffd432 221px,#ffae22 241px,#ff8a13 266px,#ff6805 299px,#ff5c00 315px)"></i><i style="background:linear-gradient(90deg,#00ff6d 94px,#08ff6b 99px,#52ff60 136px,#a0ff54 169px,#f2ff48 199px,#fffe45 204px,#ffd434 220px,#ffae23 240px,#ff8a14 265px,#ff6805 298px,#ff5900 317px)"></i><i style="background:linear-gradient(90deg,#00ff6e 93px,#04ff6d 97px,#4fff62 134px,#9dff56 167px,#eeff4a 197px,#fffe47 203px,#ffd535 219px,#ffae24 239px,#ff8a15 264px,#ff6806 297px,#ff5700 319px)"></i><i style="background:linear-gradient(90deg,#00ff70 93px,#07ff6e 98px,#53ff63 135px,#a1ff57 168px,#f3ff4b 198px,#ffff49 202px,#ffd537 218px,#ffae26 238px,#ff8a16 263px,#ff6908 295px,#ff5600 320px)"></i><i style="background:linear-gradient(90deg,#00ff71 93px,#11ff6e 103px,#5dff63 139px,#adff57 172px,#ffff4b 201px,#ffd338 218px,#ffac27 238px,#ff8917 263px,#ff6708 296px,#ff5300 322px)"></i><i style="background:linear-gradient(90deg,#00ff73 92px,#05ff72 96px,#51ff67 133px,#9fff5b 166px,#f2ff4f 196px,#feff4d 200px,#ffcf37 219px,#ffa926 239px,#ff8516 265px,#ff6408 298px,#ff5100 324px)"></i><i style="background:linear-gradient(90deg,#00ff74 92px,#07ff73 97px,#54ff68 134px,#a3ff5c 167px,#f4ff51 196px,#fffe4e 200px,#ffd43b 216px,#ffac29 236px,#ff8819 261px,#ff680a 293px,#ff5000 325px)"></i><i style="background:linear-gradient(90deg,#00ff76 92px,#2aff6f 114px,#78ff64 149px,#c8ff59 180px,#fffe51 199px,#ffd43d 215px,#ffac2b 235px,#ff881a 260px,#ff670b 292px,#ff4e00 327px)"></i><i style="background:linear-gradient(90deg,#0f7 91px,#05ff76 95px,#52ff6b 132px,#a2ff60 165px,#f3ff54 194px,#ffff53 198px,#ffd740 213px,#ffb02e 232px,#ff8c1d 256px,#ff6b0e 287px,#ff4c00 328px,#ff4c00 329px)"></i><i style="background:linear-gradient(90deg,#00ff79 91px,#06ff78 95px,#51ff6d 131px,#9eff62 163px,#efff57 192px,#feff55 197px,#ffd240 214px,#ffab2d 234px,#ff871c 259px,#ff660d 291px,#ff4a00 330px)"></i><i style="background:linear-gradient(90deg,#00ff7a 90px,#03ff7a 93px,#4dff6f 129px,#9bff65 161px,#ecff59 190px,#feff57 196px,#ffd040 214px,#ffa92e 234px,#ff861d 259px,#ff650d 291px,#ff4800 332px)"></i><i style="background:linear-gradient(90deg,#00ff7c 90px,#05ff7b 94px,#51ff70 130px,#9fff66 162px,#f1ff5b 191px,#fffe58 196px,#ffd544 211px,#ffaf32 230px,#ff8b20 254px,#ff6910 285px,#ff4b01 326px,#ff4600 334px)"></i><i style="background:linear-gradient(90deg,#00ff7d 90px,#08ff7c 95px,#54ff72 131px,#a3ff67 163px,#f6ff5c 192px,#fffe5a 195px,#ffd646 210px,#ffaf33 229px,#ff8b22 253px,#ff6911 284px,#ff4b02 325px,#ff4500 335px)"></i><i style="background:linear-gradient(90deg,#00ff7f 89px,#03ff7e 92px,#4fff74 128px,#9dff6a 160px,#f0ff5f 189px,#ffff5d 194px,#ffd648 209px,#ffaf35 228px,#ff8b23 252px,#ff6912 283px,#ff4b03 324px,#ff4300 337px)"></i><i style="background:linear-gradient(90deg,#00ff81 89px,#07ff7f 94px,#52ff75 129px,#a2ff6b 161px,#f2ff60 189px,#feff5f 193px,#ffd248 210px,#ffab35 229px,#ff8823 253px,#ff6712 284px,#ff4903 325px,#ff4100 339px)"></i><i style="background:linear-gradient(90deg,#00ff82 89px,#10ff80 98px,#5dff76 133px,#acff6c 164px,#feff61 192px,#ffd048 210px,#ffaa35 229px,#ff8723 253px,#ff6512 285px,#ff4703 327px,#ff4000 340px)"></i><i style="background:linear-gradient(90deg,#00ff84 88px,#05ff83 92px,#50ff79 127px,#a0ff6f 159px,#f1ff65 187px,#fffe62 192px,#ffd54d 207px,#ffad39 226px,#ff8926 250px,#ff6815 281px,#ff4905 322px,#ff3e00 342px)"></i><i style="background:linear-gradient(90deg,#00ff85 88px,#06ff84 92px,#51ff7b 127px,#9fff71 158px,#f0ff67 186px,#fffe64 191px,#ffd54f 206px,#ffad3a 225px,#ff8927 249px,#ff6816 280px,#ff4906 321px,#ff3c00 344px)"></i><i style="background:linear-gradient(90deg,#00ff87 88px,#2aff82 109px,#77ff78 142px,#c8ff6e 172px,#ffff67 190px,#ffd551 205px,#ffae3c 224px,#ff8929 248px,#ff6717 279px,#ff4907 320px,#ff3b00 345px)"></i><i style="background:linear-gradient(90deg,#00ff89 87px,#05ff88 91px,#51ff7e 126px,#a0ff75 157px,#f2ff6b 185px,#feff69 189px,#ffd352 205px,#ffac3d 224px,#ff8829 248px,#ff6617 279px,#ff4807 320px,#ff3900 347px)"></i><i style="background:linear-gradient(90deg,#00ff8a 87px,#04ff8a 90px,#50ff80 125px,#9fff77 156px,#f1ff6d 184px,#feff6b 188px,#ffcf51 206px,#ffa83c 225px,#ff8529 249px,#ff6417 280px,#ff4707 321px,#ff3800 349px)"></i><i style="background:linear-gradient(90deg,#00ff8c 86px,#03ff8b 89px,#4fff82 124px,#9eff79 155px,#f0ff6f 183px,#fffe6d 188px,#ffd456 203px,#ffae41 221px,#ff8a2d 244px,#ff691b 274px,#ff4a0a 314px,#ff3600 350px)"></i><i style="background:linear-gradient(90deg,#00ff8e 86px,#06ff8d 90px,#50ff84 124px,#a0ff7b 155px,#f0ff71 182px,#fffe6f 187px,#ffd458 202px,#ffae42 220px,#ff8a2f 243px,#ff691c 273px,#ff4a0b 313px,#ff3500 352px)"></i><i style="background:linear-gradient(90deg,#00ff8f 86px,#08ff8e 91px,#54ff85 125px,#a2ff7c 155px,#f2ff73 182px,#ffff72 186px,#ffd45a 201px,#ffae44 219px,#ff8a30 242px,#ff691d 272px,#ff4a0c 311px,#f30 354px)"></i><i style="background:linear-gradient(90deg,#00ff91 85px,#03ff91 88px,#4eff88 122px,#9eff7f 153px,#eeff76 180px,#feff74 185px,#ffd25a 201px,#ffac45 219px,#ff8931 242px,#ff671e 272px,#ff490c 312px,#ff3200 355px)"></i><i style="background:linear-gradient(90deg,#00ff93 85px,#06ff92 89px,#52ff89 123px,#a0ff81 153px,#f1ff78 180px,#feff76 184px,#ffce5a 202px,#ffa743 221px,#ff832f 245px,#ff631c 276px,#ff450b 317px,#ff3100 357px)"></i><i style="background:linear-gradient(90deg,#00ff95 85px,#0fff93 93px,#5aff8a 126px,#aaff82 156px,#fffe78 184px,#ffd560 198px,#ffae49 216px,#ff8a34 239px,#ff6921 268px,#ff4a0f 307px,#ff2f00 359px)"></i><i style="background:linear-gradient(90deg,#00ff97 84px,#03ff96 87px,#4fff8e 121px,#9eff85 151px,#efff7c 178px,#fffe7a 183px,#ffd662 197px,#ffaf4b 215px,#ff8a35 238px,#ff6922 267px,#ff4a10 306px,#ff2e00 359px,#ff2e00 360px)"></i><i style="background:linear-gradient(90deg,#00ff98 84px,#04ff98 87px,#51ff8f 121px,#a0ff87 151px,#f2ff7e 178px,#ffff7d 182px,#ffd664 196px,#ffaf4d 214px,#ff8b38 236px,#ff6a24 265px,#ff4b12 303px,#ff2f01 355px,#ff2c00 362px)"></i><i style="background:linear-gradient(90deg,#00ff9a 84px,#28ff96 103px,#76ff8d 135px,#c5ff85 163px,#feff7f 181px,#ffd164 197px,#ffab4c 215px,#ff8737 238px,#ff6623 268px,#ff4811 307px,#ff2c00 361px,#ff2b00 364px)"></i><i style="background:linear-gradient(90deg,#00ff9c 83px,#06ff9b 87px,#51ff93 120px,#a0ff8b 150px,#f0ff83 176px,#feff82 180px,#ffcf64 197px,#ffa94d 215px,#ff8637 238px,#ff6523 268px,#ff4611 308px,#ff2b00 362px,#ff2a00 365px)"></i><i style="background:linear-gradient(90deg,#00ff9e 83px,#04ff9d 86px,#50ff95 119px,#a0ff8d 149px,#fffe83 180px,#ffd56a 194px,#ffad51 212px,#ff8a3b 234px,#ff6827 263px,#ff4a14 301px,#ff2e03 353px,#ff2900 367px)"></i><i style="background:linear-gradient(90deg,#00ffa0 82px,#03ff9f 85px,#4fff98 118px,#9cff90 147px,#ebff88 173px,#fffe86 179px,#ffd56c 193px,#ffaf54 210px,#ff8b3e 232px,#ff6a29 260px,#ff4c16 297px,#ff3005 348px,#ff2700 369px)"></i><i style="background:linear-gradient(90deg,#00ffa1 82px,#06ffa1 86px,#52ff99 119px,#a0ff92 148px,#f1ff8a 174px,#ff8 178px,#ffd56e 192px,#ffaf56 209px,#ff8b3f 231px,#ff6a2a 259px,#ff4b17 296px,#ff2f05 347px,#ff2600 370px)"></i><i style="background:linear-gradient(90deg,#00ffa3 82px,#07ffa2 86px,#54ff9b 119px,#a2ff94 148px,#f4ff8c 174px,#feff8b 177px,#ffd16d 193px,#ffaa54 211px,#ff853d 234px,#ff6528 263px,#ff4715 302px,#ff2b04 355px,#ff2500 372px)"></i><i style="background:linear-gradient(90deg,#00ffa5 81px,#03ffa5 84px,#50ff9e 117px,#9eff96 146px,#f0ff8f 172px,#fdff8d 176px,#ffce6e 193px,#ffa855 211px,#ff843e 234px,#ff6328 264px,#ff4515 303px,#ff2a03 357px,#ff2300 374px)"></i><i style="background:linear-gradient(90deg,#00ffa7 81px,#04ffa7 84px,#4fffa0 116px,#9dff99 145px,#efff91 171px,#fffe8f 176px,#ffd474 190px,#ffae5a 207px,#ff8943 229px,#ff682d 257px,#ff4a19 294px,#ff2e07 345px,#f20 375px)"></i><i style="background:linear-gradient(90deg,#00ffa9 81px,#0effa8 88px,#5affa1 120px,#a8ff9a 148px,#fffe92 175px,#ffd476 189px,#ffae5c 206px,#ff8944 228px,#ff682e 256px,#ff4a1a 293px,#ff2e08 344px,#ff2100 377px)"></i><i style="background:linear-gradient(90deg,#00ffab 80px,#03ffab 83px,#4fffa4 115px,#9eff9d 144px,#f1ff96 170px,#ffff95 174px,#ffd578 188px,#ffae5e 205px,#ff8946 227px,#ff682f 255px,#ff4a1b 292px,#ff2e09 342px,#ff2000 379px)"></i><i style="background:linear-gradient(90deg,#00ffad 80px,#04ffac 83px,#50ffa6 115px,#9dff9f 143px,#edff99 168px,#feff97 173px,#ffd077 189px,#ffaa5e 206px,#ff8645 228px,#ff662f 256px,#ff471b 294px,#ff2c08 345px,#ff1f00 380px)"></i><i style="background:linear-gradient(90deg,#00ffaf 80px,#27ffac 98px,#74ffa5 128px,#c4ff9f 155px,#fdff9a 172px,#ffd37b 187px,#ffac61 204px,#ff8848 226px,#ff6731 254px,#ff481d 291px,#ff2d0a 342px,#ff1e00 382px)"></i><i style="background:linear-gradient(90deg,#00ffb1 79px,#06ffb0 83px,#50ffaa 114px,#9effa4 142px,#efff9e 167px,#fffe9b 172px,#ffd680 185px,#ffae64 202px,#ff8a4b 223px,#ff6935 250px,#ff4b1f 286px,#ff2f0c 335px,#ff1c00 384px)"></i><i style="background:linear-gradient(90deg,#00ffb3 79px,#05ffb3 82px,#4fffad 113px,#9dffa7 141px,#eeffa0 166px,#ffff9f 171px,#ffd682 184px,#ffb068 200px,#ff8c4e 221px,#ff6a37 248px,#ff4b21 284px,#ff300e 332px,#ff1c00 385px)"></i><i style="background:linear-gradient(90deg,#00ffb5 78px,#03ffb5 81px,#4effaf 112px,#9cffa9 140px,#edffa3 165px,#ffffa2 170px,#ffd483 184px,#ffac67 201px,#ff894e 222px,#ff6836 249px,#ff4a21 285px,#ff2e0d 334px,#ff1a00 387px)"></i><i style="background:linear-gradient(90deg,#00ffb7 78px,#04ffb7 81px,#4fffb1 112px,#9effab 140px,#f0ffa5 165px,#feffa4 169px,#ffd183 184px,#ffab68 201px,#ff874e 222px,#ff6636 250px,#ff4720 287px,#ff2c0d 337px,#ff1a00 388px)"></i><i style="background:linear-gradient(90deg,#00ffb9 78px,#07ffb9 82px,#53ffb3 113px,#a0ffae 140px,#f3ffa8 165px,#fffda5 169px,#ffd588 182px,#ffaf6d 198px,#ff8a52 219px,#ff693a 246px,#ff4a23 282px,#ff2e0f 331px,#ff1800 390px)"></i><i style="background:linear-gradient(90deg,#0fb 77px,#03ffbb 80px,#4fffb6 111px,#9cffb0 138px,#eeffab 163px,#fffea9 168px,#ffd58b 181px,#ffaf6f 197px,#ff8a54 218px,#ff693b 245px,#ff4a25 280px,#ff2f11 328px,#ff1700 392px)"></i><i style="background:linear-gradient(90deg,#00ffbe 77px,#04ffbd 80px,#51ffb8 111px,#9effb3 138px,#edffad 162px,#ffffac 167px,#ffd58d 180px,#ffaf71 196px,#ff8c57 216px,#ff6a3e 242px,#ff4c27 277px,#ff3013 324px,#ff1700 390px,#ff1600 393px)"></i><i style="background:linear-gradient(90deg,#00ffc0 77px,#0effbf 84px,#5affba 114px,#aaffb5 141px,#fbffaf 165px,#ffffaf 166px,#ffd38e 180px,#ffad71 196px,#ff8956 217px,#ff673d 244px,#ff4926 280px,#ff2d11 329px,#ff1500 395px)"></i><i style="background:linear-gradient(90deg,#00ffc2 76px,#04ffc1 79px,#4effbd 109px,#9cffb8 136px,#ecffb3 160px,#feffb2 165px,#ffd18e 180px,#ffab72 196px,#ff8757 217px,#ff663d 244px,#ff4826 280px,#ff2c12 329px,#ff1400 397px)"></i><i style="background:linear-gradient(90deg,#00ffc4 76px,#02ffc4 78px,#4dffbf 108px,#9bffbb 135px,#ebffb6 159px,#fdffb5 164px,#ffeca6 170px,#ffc487 184px,#ff9e6a 202px,#ff7b4f 225px,#ff5a36 255px,#ff3d20 295px,#ff230b 350px,#ff1300 398px)"></i><i style="background:linear-gradient(90deg,#00ffc6 75px,#03ffc6 78px,#4effc2 108px,#9dffbd 135px,#eeffb8 159px,#fffeb6 164px,#ffd496 177px,#ffad78 193px,#ff8a5c 213px,#ff6943 239px,#ff4b2b 273px,#ff2f16 320px,#ff1602 386px,#ff1200 400px)"></i><i style="background:linear-gradient(90deg,#00ffc9 75px,#04ffc8 78px,#50ffc4 108px,#9fffc0 135px,#f1ffbb 159px,#ffffba 163px,#ffd499 176px,#ffad7a 192px,#ff8a5e 212px,#ff6944 238px,#ff4a2c 272px,#ff2f16 319px,#ff1603 385px,#f10 402px)"></i><i style="background:linear-gradient(90deg,#00ffcb 75px,#05ffca 78px,#51ffc6 108px,#9effc2 134px,#f0ffbe 158px,#ffffbd 162px,#ffd59c 175px,#ffae7c 191px,#ff8a60 211px,#ff6845 237px,#ff4a2d 271px,#ff2e17 318px,#ff1604 384px,#ff1000 403px)"></i><i style="background:linear-gradient(90deg,#00ffcd 74px,#03ffcd 77px,#50ffc9 107px,#9dffc5 133px,#efffc1 157px,#feffc0 161px,#ffd09a 176px,#ffaa7b 192px,#ff875f 212px,#ff6645 238px,#ff482d 273px,#ff2c17 321px,#ff1403 389px,#ff0f00 405px)"></i><i style="background:linear-gradient(90deg,#00ffcf 74px,#04ffcf 77px,#4fffcb 106px,#9cffc8 132px,#eeffc4 156px,#fdffc3 160px,#ffefb6 165px,#ffc896 178px,#ffa277 195px,#ff7f5b 216px,#ff5f41 244px,#ff4129 281px,#ff2713 332px,#ff0f00 405px,#ff0e00 407px)"></i><i style="background:linear-gradient(90deg,#00ffd2 74px,#08ffd1 78px,#53ffce 107px,#a1ffca 133px,#fffec5 160px,#ffd6a4 172px,#ffb085 187px,#ff8d68 206px,#ff6b4c 231px,#ff4c33 264px,#ff301c 309px,#ff1808 372px,#ff0e00 408px)"></i><i style="background:linear-gradient(90deg,#00ffd4 73px,#04ffd4 76px,#4fffd1 105px,#9dffcd 131px,#edffca 154px,#ffffc9 159px,#ffd6a7 171px,#ffb087 186px,#ff8d6a 205px,#ff6b4e 230px,#ff4c34 263px,#ff301d 308px,#ff1708 371px,#ff0d00 410px)"></i><i style="background:linear-gradient(90deg,#00ffd6 73px,#02ffd6 75px,#4dffd3 104px,#9cffd0 130px,#ecffcd 153px,#ffc 158px,#ffd4a8 171px,#ffae88 186px,#ff8b6a 205px,#ff6a4e 230px,#ff4b35 263px,#ff2f1d 308px,#ff1709 371px,#ff0c00 412px)"></i><i style="background:linear-gradient(90deg,#00ffd9 73px,#0dffd8 79px,#57ffd5 107px,#a4ffd2 132px,#f6ffcf 155px,#feffcf 157px,#ffcfa6 172px,#ffa885 188px,#ff8567 208px,#ff644b 234px,#ff4632 269px,#ff2b1b 316px,#ff1306 383px,#ff0b00 413px)"></i><i style="background:linear-gradient(90deg,#00ffdb 72px,#04ffdb 75px,#50ffd8 104px,#a0ffd5 130px,#f1ffd3 153px,#fffdd0 157px,#ffd5ae 169px,#ffaf8d 184px,#ff8b6e 203px,#ff6951 228px,#ff4b37 261px,#ff2f1f 306px,#ff160a 369px,#ff0a00 415px)"></i><i style="background:linear-gradient(90deg,#00ffde 72px,#02ffde 74px,#4fffdb 103px,#9bffd8 128px,#edffd6 151px,#fffed4 156px,#ffd5b1 168px,#ffaf8f 183px,#ff8b70 202px,#ff6953 227px,#ff4a38 260px,#ff2f20 305px,#ff160b 368px,#ff0900 417px)"></i><i style="background:linear-gradient(90deg,#00ffe0 71px,#03ffe0 74px,#4effde 102px,#9affdb 127px,#ecffd9 150px,#ffffd8 155px,#ffd6b4 167px,#ffaf92 182px,#ff8b72 201px,#ff6a55 225px,#ff4c3b 257px,#ff3022 301px,#ff170c 363px,#ff0800 418px)"></i><i style="background:linear-gradient(90deg,#00ffe3 71px,#04ffe2 74px,#4fffe0 102px,#9dffde 127px,#efffdc 150px,#ffffdc 154px,#ffd3b4 167px,#ffad92 182px,#ff8973 201px,#ff6855 226px,#ff493a 259px,#ff2d21 304px,#ff150c 367px,#ff0700 420px)"></i><i style="background:linear-gradient(90deg,#00ffe5 71px,#05ffe5 74px,#51ffe3 102px,#9fffe1 127px,#eeffdf 149px,#feffdf 153px,#ffd0b5 167px,#ffab93 182px,#ff8773 201px,#f65 226px,#ff483a 259px,#ff2d22 304px,#ff140c 368px,#ff0600 422px)"></i><i style="background:linear-gradient(90deg,#00ffe8 70px,#04ffe8 73px,#4fffe6 101px,#9effe4 126px,#edffe2 148px,#fdffe2 152px,#fff5d9 155px,#ffceb5 167px,#ffa993 182px,#ff8674 201px,#ff6556 226px,#ff473b 259px,#ff2c22 304px,#ff140c 368px,#ff0600 423px)"></i><i style="background:linear-gradient(90deg,#00ffea 70px,#02ffea 72px,#4effe9 100px,#9cffe7 125px,#ecffe6 147px,#fffee4 152px,#ffd4be 164px,#ffad9a 179px,#ff8979 198px,#ff685b 222px,#ff4a3f 254px,#ff2e25 298px,#ff150f 360px,#ff0500 425px)"></i><i style="background:linear-gradient(90deg,#00ffed 70px,#06ffed 73px,#52ffec 101px,#a2ffea 126px,#f3ffe9 148px,#ffffe8 151px,#ffd5c1 163px,#ffad9d 178px,#ff897b 197px,#ff685c 221px,#ff4a40 253px,#ff2e26 297px,#ff150f 359px,#ff0400 427px)"></i><i style="background:linear-gradient(90deg,#00fff0 69px,#04fff0 72px,#51ffee 100px,#9dffed 124px,#eeffec 146px,#feffec 150px,#ffd2c2 163px,#ffab9d 178px,#ff877b 197px,#ff675d 221px,#ff4841 253px,#ff2d27 297px,#ff1510 359px,#ff0300 428px)"></i><i style="background:linear-gradient(90deg,#00fff2 69px,#02fff2 71px,#4cfff1 98px,#99fff1 122px,#eafff0 144px,#feffef 149px,#ffcfc2 163px,#ffa99e 178px,#ff857c 197px,#ff645c 222px,#ff4640 255px,#ff2b26 300px,#ff120f 364px,#ff0200 430px)"></i><i style="background:linear-gradient(90deg,#00fff5 69px,#0bfff5 74px,#57fff4 101px,#a6fff4 125px,#f5fff3 146px,#fffdf1 149px,#ffd3c8 161px,#ffaba2 176px,#ff877f 195px,#ff6660 219px,#ff4843 251px,#ff2c29 295px,#ff1411 357px,#ff0200 432px)"></i><i style="background:linear-gradient(90deg,#00fff8 68px,#04fff8 71px,#50fff7 98px,#9dfff7 122px,#f0fff6 144px,#fffef5 148px,#ffd6cf 159px,#ffb0aa 173px,#ff8c86 191px,#ff6b66 214px,#ff4c49 244px,#ff312e 285px,#ff1816 343px,#ff0200 428px,#ff0100 433px)"></i><i style="background:linear-gradient(90deg,#00fffa 68px,#03fffa 70px,#4efffa 97px,#9cfffa 121px,#effffa 143px,#fffffa 147px,#ffd7d2 158px,#ffb0ac 172px,#ff8c89 190px,#ff6a68 213px,#ff4c4a 243px,#ff312f 284px,#ff1817 342px,#ff0201 427px,#f00 435px)"></i><i style="background:linear-gradient(90deg,#00fffd 67px,#04fffd 70px,#50fffd 97px,#9efffd 121px,#eefffd 142px,#fefffd 146px,#ffd4d3 158px,#ffaead 172px,#ff8a89 190px,#ff6968 213px,#ff4a4a 244px,#ff2f2e 286px,#ff1616 345px,#f00 432px,#f00 435px)"></i><i style="background:linear-gradient(90deg,#00feff 67px,#02feff 69px,#4efeff 96px,#9cfdff 120px,#ebfdff 141px,#fffcfe 146px,#ffd4d6 157px,#ffaeb0 171px,#ff8a8b 189px,#ff696a 212px,#ff4b4c 242px,#ff2f30 283px,#ff1718 341px,#ff0102 426px,#f00 434px)"></i><i style="background:linear-gradient(90deg,#00fbff 67px,#06fbff 70px,#52fbff 97px,#a0faff 121px,#f3faff 143px,#fff9ff 146px,#ffd2d7 157px,#ffacb0 171px,#ff888c 189px,#ff676b 212px,#ff4a4d 242px,#ff2f31 283px,#ff1618 341px,#ff0002 426px,#ff0001 431px)"></i><i style="background:linear-gradient(90deg,#00f8ff 66px,#04f8ff 69px,#4ff8ff 96px,#9df7ff 120px,#eff6ff 142px,#fff6ff 146px,#ffcfd7 157px,#ffaab1 171px,#ff868c 189px,#ff666b 212px,#ff494d 242px,#ff2e31 283px,#ff1518 341px,#ff0002 426px,#ff0002 429px)"></i><i style="background:linear-gradient(90deg,#00f6ff 66px,#02f6ff 68px,#4df5ff 95px,#9af4ff 119px,#ebf3ff 141px,#fff2ff 146px,#ffc9d4 158px,#ffa5af 172px,#ff838b 190px,#ff636b 213px,#ff464c 244px,#ff2b30 286px,#ff1317 345px,#ff0003 425px,#ff0003 427px)"></i><i style="background:linear-gradient(90deg,#00f3ff 66px,#08f3ff 70px,#53f2ff 97px,#a1f0ff 121px,#f3efff 143px,#ffefff 146px,#ffc7d5 158px,#ffa3af 172px,#ff818c 190px,#ff626b 213px,#ff454c 244px,#ff2a31 286px,#ff1318 345px,#ff0004 423px,#ff0003 424px)"></i><i style="background:linear-gradient(90deg,#00f0ff 65px,#04f0ff 68px,#51efff 96px,#a1edff 121px,#f2ecff 143px,#feecff 146px,#ffc1d2 159px,#ff9dab 174px,#ff7b87 193px,#ff5c67 217px,#ff4049 249px,#ff262d 293px,#ff0f15 355px,#ff0004 422px)"></i><i style="background:linear-gradient(90deg,#0ef 65px,#02edff 67px,#4fecff 95px,#9eeaff 120px,#eee9ff 142px,#fee8ff 146px,#ffbfd2 159px,#ff9bac 174px,#ff7988 193px,#ff5b67 217px,#ff3f49 249px,#ff252e 293px,#ff0f15 355px,#ff0005 419px)"></i><i style="background:linear-gradient(90deg,#00ebff 64px,#03ebff 67px,#4fe9ff 95px,#9ee7ff 120px,#eee5ff 142px,#fee5ff 146px,#ffb9d0 160px,#ff97aa 175px,#ff7687 194px,#ff5866 219px,#ff3c48 252px,#ff232c 297px,#ff0c14 361px,#ff0006 417px)"></i><i style="background:linear-gradient(90deg,#00e8ff 64px,#04e8ff 67px,#50e6ff 95px,#9ee4ff 120px,#eee2ff 142px,#fee2ff 146px,#ffb7d0 160px,#ff95aa 175px,#ff7487 194px,#ff5666 219px,#ff3b48 252px,#ff222d 297px,#ff0c14 361px,#ff0007 415px)"></i><i style="background:linear-gradient(90deg,#00e6ff 64px,#03e6ff 66px,#4ee3ff 94px,#9be1ff 119px,#eedfff 142px,#fddeff 146px,#ffb2ce 161px,#ff91a9 176px,#ff7085 196px,#ff5364 221px,#ff3846 255px,#ff202b 301px,#ff0a13 366px,#ff0008 412px)"></i><i style="background:linear-gradient(90deg,#00e3ff 63px,#04e3ff 66px,#4ee1ff 94px,#9cdeff 119px,#eedcff 142px,#fddbff 146px,#ffc6e7 153px,#ffa4c1 166px,#ff829b 183px,#ff6378 205px,#ff4759 233px,#ff2d3c 271px,#ff1622 324px,#ff010b 400px,#ff0008 410px)"></i><i style="background:linear-gradient(90deg,#00e1ff 63px,#04e1ff 66px,#4fdeff 94px,#9cdbff 119px,#eed8ff 142px,#fdd8ff 146px,#ffccf2 150px,#ffa8c9 163px,#ff87a3 179px,#ff6981 199px,#ff4d61 225px,#f34 260px,#ff1b29 308px,#ff0611 377px,#ff0009 407px)"></i><i style="background:linear-gradient(90deg,#00deff 63px,#05deff 66px,#52dbff 95px,#9fd8ff 120px,#f1d5ff 143px,#ffd3fd 147px,#ffb0d5 159px,#ff8fae 174px,#ff6f8b 193px,#ff5269 218px,#ff384b 251px,#ff1f2f 296px,#ff0a16 359px,#ff000a 405px)"></i><i style="background:linear-gradient(90deg,#00dcff 62px,#04dcff 65px,#50d9ff 94px,#a0d5ff 120px,#ffd0fe 147px,#ffaed5 159px,#ff8daf 174px,#ff6e8b 193px,#ff516a 218px,#ff374b 251px,#ff1f2f 296px,#ff0917 359px,#ff000b 403px)"></i><i style="background:linear-gradient(90deg,#00d9ff 62px,#02d9ff 64px,#4ed6ff 93px,#9dd3ff 119px,#edcfff 142px,#ffcdfe 147px,#ffabd5 159px,#ff8baf 174px,#ff6c8c 193px,#ff506a 218px,#ff364c 251px,#ff1e30 296px,#ff0917 359px,#ff000c 400px)"></i><i style="background:linear-gradient(90deg,#00d7ff 62px,#0ad6ff 67px,#57d3ff 96px,#a7cfff 122px,#ffcbfe 147px,#ffa9d6 159px,#ff89b0 174px,#ff6b8c 193px,#ff4e6b 218px,#ff354c 251px,#ff1d30 296px,#ff0817 359px,#ff000d 398px)"></i><i style="background:linear-gradient(90deg,#00d5ff 61px,#04d4ff 64px,#4fd1ff 93px,#9dcdff 119px,#edc9ff 142px,#ffc8fe 147px,#ffa6d6 159px,#ff87b0 174px,#ff698d 193px,#ff4d6b 218px,#ff344c 251px,#ff1c31 296px,#ff0818 359px,#ff000e 395px)"></i><i style="background:linear-gradient(90deg,#00d2ff 61px,#02d2ff 63px,#4dceff 92px,#9acaff 118px,#edc6ff 142px,#ffc5ff 147px,#ffa4d7 159px,#ff85b1 174px,#ff688d 193px,#ff4c6c 218px,#ff334d 251px,#ff1c31 296px,#ff0718 359px,#ff000f 393px)"></i><i style="background:linear-gradient(90deg,#00d0ff 60px,#03d0ff 63px,#50ccff 93px,#9ec7ff 119px,#f0c3ff 143px,#ffc2ff 147px,#ffa2d7 159px,#ff83b1 174px,#ff668e 193px,#ff4b6c 218px,#ff324d 251px,#ff1b31 296px,#ff0718 359px,#ff000f 391px)"></i><i style="background:linear-gradient(90deg,#00ceff 60px,#04cdff 63px,#51c9ff 93px,#9ec5ff 119px,#f0c0ff 143px,#ffbfff 147px,#ff9dd4 160px,#ff7ead 176px,#ff6189 196px,#ff4668 222px,#ff2e4a 256px,#ff172e 303px,#ff0416 369px,#f01 388px)"></i><i style="background:linear-gradient(90deg,#00cbff 60px,#05cbff 63px,#51c6ff 93px,#a1c2ff 120px,#f4bdff 144px,#ffbdff 147px,#ff9bd5 160px,#ff7cae 176px,#ff5f8a 196px,#ff4569 222px,#ff2d4a 256px,#ff172f 303px,#ff0316 369px,#f01 386px)"></i><i style="background:linear-gradient(90deg,#00c9ff 59px,#03c9ff 62px,#4fc4ff 92px,#9ebfff 119px,#f0bbff 143px,#ffbaff 147px,#ff97d2 161px,#ff78ac 177px,#ff5d89 197px,#ff4368 223px,#ff2b49 258px,#ff152e 305px,#ff0216 372px,#ff0012 384px)"></i><i style="background:linear-gradient(90deg,#00c7ff 59px,#04c6ff 62px,#50c2ff 92px,#9fbdff 119px,#f0b8ff 143px,#feb7ff 147px,#ff94d3 161px,#ff77ac 177px,#ff5b89 197px,#ff4268 223px,#ff2a4a 258px,#ff152f 305px,#ff0116 372px,#ff0013 381px)"></i><i style="background:linear-gradient(90deg,#00c4ff 59px,#07c4ff 63px,#53bfff 93px,#a2baff 120px,#f3b5ff 144px,#feb4ff 147px,#ff90d0 162px,#ff73ab 178px,#ff5787 199px,#ff3e66 226px,#ff2748 262px,#ff122c 311px,#ff0014 379px)"></i><i style="background:linear-gradient(90deg,#00c2ff 58px,#04c2ff 61px,#4ebdff 91px,#9cb8ff 118px,#ecb2ff 142px,#feb1ff 147px,#ff8ed1 162px,#ff71ab 178px,#ff5687 199px,#ff3d66 226px,#ff2648 262px,#ff112d 311px,#ff0015 376px)"></i><i style="background:linear-gradient(90deg,#00c0ff 58px,#04c0ff 61px,#51baff 92px,#9fb5ff 119px,#efafff 143px,#feafff 147px,#ff8ace 163px,#ff6da8 180px,#ff5285 201px,#ff3a64 229px,#ff2346 266px,#ff0f2b 316px,#ff0016 374px)"></i><i style="background:linear-gradient(90deg,#00beff 58px,#16bcff 68px,#62b7ff 98px,#b2b1ff 125px,#fdacff 147px,#ff88cf 163px,#ff6ba8 180px,#ff5185 201px,#ff3864 229px,#ff2246 266px,#ff0e2b 316px,#ff0017 372px)"></i><i style="background:linear-gradient(90deg,#00bcff 57px,#04bbff 60px,#50b6ff 91px,#a0b0ff 119px,#f2aaff 144px,#ffa8fd 148px,#ff8ad4 161px,#ff6eaf 177px,#ff538a 198px,#ff3a69 225px,#ff244b 260px,#ff102f 308px,#ff0018 369px)"></i><i style="background:linear-gradient(90deg,#00baff 57px,#05b9ff 60px,#50b3ff 91px,#a0adff 119px,#f2a7ff 144px,#ffa5fd 148px,#ff88d5 161px,#ff6caf 177px,#ff528b 198px,#ff3969 225px,#ff234a 261px,#ff0f2f 310px,#ff0019 367px)"></i><i style="background:linear-gradient(90deg,#00b8ff 56px,#03b7ff 59px,#4eb1ff 90px,#9dabff 118px,#efa5ff 143px,#ffa3fe 148px,#ff85d5 161px,#ff6aaf 177px,#ff508b 198px,#ff386a 225px,#ff224b 261px,#ff0e2f 310px,#ff001b 364px)"></i><i style="background:linear-gradient(90deg,#00b6ff 56px,#04b5ff 59px,#4fafff 90px,#9da9ff 118px,#efa2ff 143px,#ffa0fe 148px,#ff83d5 161px,#ff69b0 177px,#ff4f8b 198px,#ff376a 225px,#ff214b 261px,#ff0d2f 310px,#ff001c 362px)"></i><i style="background:linear-gradient(90deg,#00b3ff 56px,#07b3ff 60px,#52acff 91px,#a1a6ff 119px,#f29fff 144px,#ff9efe 148px,#ff81d6 161px,#ff66ae 178px,#ff4c8a 199px,#ff3569 226px,#ff204b 262px,#ff0c2f 311px,#ff001d 360px)"></i><i style="background:linear-gradient(90deg,#00b1ff 55px,#03b1ff 58px,#50aaff 90px,#9ea4ff 118px,#ee9dff 143px,#ff9bfe 148px,#ff7fd6 161px,#ff64af 178px,#ff4b8b 199px,#ff346a 226px,#ff1f4b 262px,#ff0c30 311px,#ff001e 357px)"></i><i style="background:linear-gradient(90deg,#00afff 55px,#04afff 58px,#51a8ff 90px,#9ea1ff 118px,#ee9bff 143px,#f9f 148px,#ff7dd6 161px,#ff62af 178px,#ff4a8b 199px,#ff336a 226px,#ff1e4c 262px,#ff0b30 311px,#ff001f 355px)"></i><i style="background:linear-gradient(90deg,#00adff 55px,#0eacff 62px,#59a5ff 93px,#a79eff 121px,#f897ff 146px,#ff96ff 148px,#ff7bd7 161px,#ff61af 178px,#ff488c 199px,#ff326b 226px,#ff1d4c 262px,#ff0a30 311px,#ff0020 352px)"></i><i style="background:linear-gradient(90deg,#00abff 54px,#03abff 57px,#4fa4ff 89px,#9f9dff 118px,#f195ff 144px,#ff94ff 148px,#ff78d4 162px,#ff5eae 179px,#ff4589 201px,#ff2f68 229px,#ff1a4a 266px,#ff082f 316px,#ff0021 350px)"></i><i style="background:linear-gradient(90deg,#00a9ff 54px,#04a9ff 57px,#50a2ff 89px,#9f9aff 118px,#f193ff 144px,#ff92ff 148px,#ff76d5 162px,#ff5cae 179px,#ff448a 201px,#ff2e69 229px,#ff1a4a 266px,#ff082f 316px,#f02 348px)"></i><i style="background:linear-gradient(90deg,#00a8ff 53px,#03a7ff 56px,#4ea0ff 88px,#9c98ff 117px,#ee91ff 143px,#ff8fff 148px,#ff72d3 163px,#ff59ad 180px,#ff4289 202px,#ff2c68 230px,#ff184a 267px,#ff062e 318px,#ff0024 345px)"></i><i style="background:linear-gradient(90deg,#00a6ff 53px,#06a5ff 57px,#519dff 89px,#9f96ff 118px,#f18eff 144px,#fe8dff 148px,#ff70d3 163px,#ff58ad 180px,#ff4089 202px,#ff2b68 230px,#ff184a 267px,#ff062f 318px,#ff0025 343px)"></i><i style="background:linear-gradient(90deg,#00a4ff 53px,#04a3ff 56px,#519bff 89px,#a094ff 118px,#f18cff 144px,#fe8aff 148px,#ff6dd1 164px,#ff54aa 182px,#ff3c86 205px,#ff2865 234px,#ff1447 273px,#ff032c 326px,#ff0026 340px)"></i><i style="background:linear-gradient(90deg,#00a2ff 52px,#03a1ff 55px,#4f99ff 88px,#9d92ff 117px,#ed8aff 143px,#fe88ff 148px,#ff6bd1 164px,#ff52aa 182px,#ff3b86 205px,#ff2765 234px,#ff1347 273px,#ff022c 326px,#ff0027 338px)"></i><i style="background:linear-gradient(90deg,#00a0ff 52px,#069fff 56px,#5297ff 89px,#a08fff 118px,#f087ff 144px,#fe86ff 148px,#ff67cf 165px,#ff4fa9 183px,#ff3985 206px,#ff2464 236px,#ff1146 276px,#ff012b 330px,#ff0028 336px)"></i><i style="background:linear-gradient(90deg,#009eff 52px,#099dff 57px,#5595ff 90px,#a38dff 119px,#f484ff 145px,#ff82fd 149px,#ff69d4 163px,#ff50ad 181px,#ff3a89 203px,#ff2668 232px,#ff134a 270px,#ff022e 322px,#ff002a 333px)"></i><i style="background:linear-gradient(90deg,#009cff 51px,#039cff 54px,#4e94ff 87px,#9e8bff 117px,#f082ff 144px,#ff80fd 149px,#ff67d5 163px,#ff4fad 181px,#ff398a 203px,#ff2569 232px,#ff124a 270px,#ff012f 322px,#ff002b 331px)"></i><i style="background:linear-gradient(90deg,#009aff 51px,#049aff 54px,#4f91ff 87px,#9e89ff 117px,#f080ff 144px,#ff7dfd 149px,#ff65d5 163px,#ff4dae 181px,#ff388a 203px,#ff2469 232px,#ff114b 270px,#ff012f 322px,#ff002d 328px)"></i><i style="background:linear-gradient(90deg,#0098ff 51px,#1a95ff 64px,#668dff 96px,#b584ff 125px,#ff7bfe 149px,#ff63d5 163px,#ff4cae 181px,#ff3689 204px,#ff2268 233px,#ff104a 272px,#ff002e 325px,#ff002e 326px)"></i><i style="background:linear-gradient(90deg,#0097ff 50px,#0596ff 54px,#528dff 88px,#a184ff 118px,#ff79fe 149px,#ff61d5 163px,#ff4aae 181px,#ff358a 204px,#ff2169 233px,#ff0f4a 272px,#ff002f 324px)"></i><i style="background:linear-gradient(90deg,#0095ff 50px,#0494ff 53px,#508bff 87px,#9e83ff 117px,#f079ff 144px,#ff77fe 149px,#ff5fd6 163px,#ff49af 181px,#ff338a 204px,#ff2069 233px,#ff0e4b 272px,#ff0031 321px)"></i><i style="background:linear-gradient(90deg,#0093ff 49px,#0393ff 52px,#4e8aff 86px,#9c81ff 116px,#ec77ff 143px,#ff75fe 149px,#ff5ed6 163px,#ff47af 181px,#ff328b 204px,#ff1f6a 233px,#ff0e4b 272px,#ff0032 319px)"></i><i style="background:linear-gradient(90deg,#0091ff 49px,#0690ff 53px,#5188ff 87px,#9f7eff 117px,#ef75ff 144px,#ff73ff 149px,#ff5cd6 163px,#ff46af 181px,#ff318b 204px,#ff1e6a 233px,#ff0d4b 272px,#f03 317px)"></i><i style="background:linear-gradient(90deg,#0090ff 49px,#068fff 53px,#5286ff 87px,#a27cff 118px,#f272ff 145px,#ff71ff 149px,#ff59d4 164px,#ff43ae 182px,#ff2f8a 205px,#ff1c69 235px,#ff0b4b 274px,#ff0035 314px)"></i><i style="background:linear-gradient(90deg,#008eff 48px,#038dff 51px,#5084ff 86px,#9f7aff 117px,#f270ff 145px,#ff6fff 149px,#ff57d5 164px,#ff42ae 182px,#ff2e8a 205px,#ff1b69 235px,#ff0b4b 274px,#ff0036 312px)"></i><i style="background:linear-gradient(90deg,#008cff 48px,#068bff 52px,#5382ff 87px,#a278ff 118px,#f56eff 146px,#ff6cff 149px,#ff55d5 164px,#ff40af 182px,#ff2d8b 205px,#ff1a69 235px,#ff0a4b 275px,#ff0038 309px)"></i><i style="background:linear-gradient(90deg,#008aff 48px,#18f 57px,#5d7fff 91px,#ae75ff 122px,#ff6aff 149px,#ff52d3 165px,#ff3dac 184px,#ff2987 208px,#ff1766 239px,#ff0748 280px,#ff0039 307px)"></i><i style="background:linear-gradient(90deg,#0089ff 47px,#0588ff 51px,#517eff 86px,#a074ff 117px,#f26aff 145px,#fe68ff 149px,#ff51d3 165px,#ff3cac 184px,#ff2888 208px,#ff1767 239px,#ff0648 280px,#ff003b 305px)"></i><i style="background:linear-gradient(90deg,#0087ff 47px,#0686ff 51px,#527cff 86px,#a072ff 117px,#f268ff 145px,#fe66ff 149px,#ff4ed1 166px,#ff39ab 185px,#ff2787 209px,#ff1566 240px,#ff0548 281px,#ff003c 302px)"></i><i style="background:linear-gradient(90deg,#0085ff 47px,#2c7fff 69px,#7975ff 102px,#ca6bff 132px,#fe64ff 149px,#ff4cd1 166px,#ff38ab 185px,#ff2587 209px,#ff1466 240px,#ff0548 281px,#ff003e 300px)"></i><i style="background:linear-gradient(90deg,#0084ff 46px,#0583ff 50px,#5179ff 85px,#a06eff 117px,#f164ff 145px,#fe62ff 149px,#ff49cf 167px,#ff36aa 186px,#ff2486 210px,#ff1265 242px,#ff0347 284px,#ff0040 297px)"></i><i style="background:linear-gradient(90deg,#0082ff 46px,#0681ff 50px,#5177ff 85px,#a16cff 117px,#f162ff 145px,#ff5ffd 150px,#ff4ad4 165px,#ff36ad 184px,#ff2489 208px,#ff1368 239px,#ff034a 280px,#ff0041 295px)"></i><i style="background:linear-gradient(90deg,#0081ff 45px,#0380ff 48px,#4f76ff 84px,#9e6bff 116px,#f160ff 145px,#ff5dfd 150px,#ff48d5 165px,#ff35ae 184px,#ff238a 208px,#ff1269 239px,#ff034a 280px,#ff0043 293px)"></i><i style="background:linear-gradient(90deg,#007fff 45px,#077eff 50px,#5473ff 86px,#a468ff 118px,#f45dff 146px,#ff5bfe 150px,#ff47d5 165px,#ff34ae 184px,#ff228a 208px,#ff1169 239px,#ff024b 280px,#ff0045 290px)"></i><i style="background:linear-gradient(90deg,#007dff 45px,#0a7cff 51px,#5771ff 87px,#a766ff 119px,#ff59fe 150px,#ff45d5 165px,#ff32ae 184px,#ff218b 208px,#ff1069 239px,#ff014b 280px,#ff0046 288px)"></i><i style="background:linear-gradient(90deg,#007cff 44px,#057bff 48px,#5170ff 84px,#9f65ff 116px,#f15aff 145px,#ff57fe 150px,#ff44d5 165px,#ff31af 184px,#ff1f8b 208px,#ff0f6a 239px,#ff014b 280px,#ff0048 285px)"></i><i style="background:linear-gradient(90deg,#007aff 44px,#0779ff 49px,#536eff 85px,#a263ff 117px,#f457ff 146px,#ff55fe 150px,#ff42d6 165px,#ff30af 184px,#ff1e8b 208px,#ff0f6a 239px,#ff004c 280px,#ff004a 283px)"></i><i style="background:linear-gradient(90deg,#0079ff 44px,#2274ff 62px,#7068ff 97px,#bf5dff 128px,#ff53fe 150px,#ff40d6 165px,#ff2eb0 184px,#ff1d8c 208px,#ff0e6a 239px,#ff004c 280px,#ff004b 281px)"></i><i style="background:linear-gradient(90deg,#07f 43px,#0576ff 47px,#526bff 84px,#a25fff 117px,#f354ff 146px,#ff52ff 150px,#ff3ed4 166px,#ff2cae 185px,#ff1b8a 210px,#ff0c68 242px,#ff004e 278px)"></i><i style="background:linear-gradient(90deg,#0076ff 43px,#0675ff 47px,#5269ff 84px,#a25eff 117px,#f352ff 146px,#ff50ff 150px,#ff3cd4 166px,#ff2aad 186px,#ff1989 211px,#ff0a68 243px,#ff004f 276px)"></i><i style="background:linear-gradient(90deg,#0074ff 43px,#326cff 69px,#7f61ff 103px,#d055ff 134px,#ff4eff 150px,#ff3bd5 166px,#ff29ad 186px,#ff1889 211px,#ff0968 243px,#ff0052 273px)"></i><i style="background:linear-gradient(90deg,#0073ff 42px,#0572ff 46px,#5166ff 83px,#a05aff 116px,#f34eff 146px,#ff4cff 150px,#ff39d5 166px,#ff28ad 186px,#ff1789 211px,#ff0968 243px,#ff0053 271px)"></i><i style="background:linear-gradient(90deg,#0071ff 42px,#0870ff 47px,#5464ff 84px,#a358ff 117px,#f64cff 147px,#ff4aff 150px,#ff37d3 167px,#ff26ac 187px,#ff1689 212px,#ff0767 245px,#f05 269px)"></i><i style="background:linear-gradient(90deg,#0070ff 41px,#036fff 44px,#4e64ff 81px,#9b58ff 114px,#ed4bff 144px,#ff48ff 150px,#ff35d3 167px,#ff24ad 187px,#ff1589 212px,#ff0668 245px,#ff0057 266px)"></i><i style="background:linear-gradient(90deg,#006eff 41px,#076dff 46px,#5361ff 83px,#a155ff 116px,#f348ff 146px,#fe47ff 150px,#ff33d1 168px,#ff22ab 188px,#ff1387 214px,#ff0566 247px,#ff0059 264px)"></i><i style="background:linear-gradient(90deg,#006dff 41px,#136aff 52px,#605dff 89px,#b051ff 122px,#fe45ff 150px,#ff31d2 168px,#ff21ac 188px,#ff1287 214px,#ff0467 247px,#ff005c 261px)"></i><i style="background:linear-gradient(90deg,#006cff 40px,#056aff 44px,#515eff 82px,#a152ff 116px,#f245ff 146px,#fe43ff 150px,#ff2fd0 169px,#ff1fa9 190px,#ff1085 216px,#ff0264 250px,#ff005d 259px)"></i><i style="background:linear-gradient(90deg,#006aff 40px,#0769ff 45px,#545cff 83px,#a450ff 117px,#f543ff 147px,#ff40fd 151px,#ff2fd4 167px,#ff1fae 187px,#ff1089 213px,#ff0368 246px,#ff005f 257px)"></i><i style="background:linear-gradient(90deg,#0068ff 40px,#2f61ff 65px,#7d54ff 101px,#ce47ff 133px,#ff3ffd 151px,#ff2ed5 167px,#ff1eae 187px,#ff0f8a 213px,#ff0269 246px,#ff0062 254px)"></i><i style="background:linear-gradient(90deg,#0067ff 39px,#0566ff 43px,#505aff 81px,#9f4dff 115px,#f240ff 146px,#ff3dfe 151px,#ff2cd5 167px,#ff1daf 187px,#ff0e8a 213px,#ff0169 246px,#ff0064 252px)"></i><i style="background:linear-gradient(90deg,#06f 39px,#0764ff 44px,#5358ff 82px,#a24bff 116px,#ff3bfe 151px,#ff2bd5 167px,#ff1caf 187px,#ff0d8a 213px,#ff0069 246px,#f06 250px)"></i><i style="background:linear-gradient(90deg,#0065ff 38px,#0264ff 41px,#4f57ff 80px,#9d4aff 114px,#ef3dff 145px,#ff3afe 151px,#ff2ad5 167px,#ff1baf 187px,#ff0c8b 213px,#ff006a 246px,#ff0069 247px)"></i><i style="background:linear-gradient(90deg,#0063ff 38px,#0762ff 43px,#5455ff 82px,#a248ff 116px,#ff38fe 151px,#ff28d6 167px,#ff19b0 187px,#ff0b8b 213px,#ff006b 245px)"></i><i style="background:linear-gradient(90deg,#0062ff 38px,#0d5fff 46px,#5952ff 84px,#a745ff 118px,#ff36fe 151px,#ff26d4 168px,#ff17ad 189px,#ff0989 215px,#ff006e 242px)"></i><i style="background:linear-gradient(90deg,#0060ff 37px,#045fff 41px,#5152ff 80px,#a045ff 115px,#f137ff 146px,#ff35ff 151px,#ff25d4 168px,#ff16ad 189px,#ff0889 215px,#ff0070 240px)"></i><i style="background:linear-gradient(90deg,#005fff 37px,#095dff 43px,#5550ff 82px,#a542ff 117px,#f734ff 148px,#f3f 151px,#ff23d4 168px,#ff15ad 189px,#ff088a 215px,#ff0072 238px)"></i><i style="background:linear-gradient(90deg,#005eff 37px,#2956ff 60px,#7649ff 97px,#c63bff 130px,#ff31ff 151px,#ff22d5 168px,#ff14ae 189px,#ff078a 215px,#ff0075 235px)"></i><i style="background:linear-gradient(90deg,#005cff 36px,#055bff 40px,#504eff 79px,#9e41ff 114px,#f132ff 146px,#ff30ff 151px,#ff21d5 168px,#ff12ae 189px,#ff068a 215px,#f07 233px)"></i><i style="background:linear-gradient(90deg,#005bff 36px,#0959ff 42px,#544cff 81px,#a33eff 116px,#f630ff 148px,#ff2eff 151px,#ff1ed3 169px,#ff11ad 190px,#ff0489 217px,#ff007b 230px)"></i><i style="background:linear-gradient(90deg,#005aff 36px,#3250ff 64px,#8043ff 101px,#d035ff 134px,#ff2cff 151px,#ff1dd3 169px,#ff10ad 190px,#ff0389 217px,#ff007d 228px)"></i><i style="background:linear-gradient(90deg,#0059ff 35px,#0657ff 40px,#5349ff 80px,#a33bff 116px,#f62cff 148px,#fe2bff 151px,#ff1bd2 170px,#ff0daa 192px,#ff0187 219px,#ff007f 226px)"></i><i style="background:linear-gradient(90deg,#0057ff 35px,#0955ff 41px,#5647ff 81px,#a639ff 117px,#f92aff 149px,#ff28fd 152px,#ff1ad4 169px,#ff0dae 190px,#ff018a 217px,#ff0083 223px)"></i><i style="background:linear-gradient(90deg,#0056ff 34px,#0455ff 38px,#5047ff 78px,#9f39ff 114px,#f02aff 146px,#fe28ff 151px,#ff18d0 171px,#ff0ba9 193px,#ff0085 221px)"></i><i style="background:linear-gradient(90deg,#05f 34px,#0853ff 40px,#5445ff 80px,#a436ff 116px,#f628ff 148px,#ff25fd 152px,#ff18d4 169px,#ff0bae 190px,#ff008a 217px,#ff0089 218px)"></i><i style="background:linear-gradient(90deg,#0053ff 34px,#194eff 49px,#6540ff 88px,#b532ff 123px,#ff24fd 152px,#ff17d5 169px,#ff0aaf 190px,#ff008c 216px)"></i><i style="background:linear-gradient(90deg,#0052ff 33px,#0451ff 37px,#5143ff 78px,#a034ff 114px,#f325ff 147px,#ff22fe 152px,#ff15d5 169px,#ff09ad 191px,#ff008e 214px)"></i><i style="background:linear-gradient(90deg,#0051ff 33px,#0a4fff 40px,#5641ff 80px,#a432ff 116px,#f523ff 148px,#ff21fe 152px,#ff14d5 169px,#ff07ae 191px,#ff0092 211px)"></i><i style="background:linear-gradient(90deg,#0050ff 33px,#2f47ff 60px,#7c38ff 98px,#cb29ff 132px,#ff1ffe 152px,#ff13d5 169px,#ff06ae 191px,#ff0095 209px)"></i><i style="background:linear-gradient(90deg,#004fff 32px,#064dff 37px,#523fff 78px,#a22fff 115px,#f520ff 148px,#ff1efe 152px,#ff11d4 170px,#ff05ad 192px,#f09 206px)"></i><i style="background:linear-gradient(90deg,#004dff 32px,#0c4bff 40px,#593cff 81px,#a72dff 117px,#ff1cfe 152px,#ff10d4 170px,#ff04ad 192px,#ff009c 204px)"></i><i style="background:linear-gradient(90deg,#004cff 32px,#3641ff 63px,#8333ff 101px,#d323ff 135px,#ff1bff 152px,#ff0ed4 170px,#ff03ad 192px,#ff009f 202px)"></i><i style="background:linear-gradient(90deg,#004bff 31px,#0649ff 36px,#523bff 77px,#a12cff 114px,#f21cff 147px,#ff19ff 152px,#ff0dd4 170px,#ff02ae 192px,#ff00a4 199px)"></i><i style="background:linear-gradient(90deg,#004aff 31px,#0f46ff 41px,#5c38ff 82px,#ac28ff 119px,#ff18ff 152px,#ff0cd5 170px,#ff01ae 192px,#ff00a7 197px)"></i><i style="background:linear-gradient(90deg,#0049ff 30px,#0447ff 34px,#5038ff 76px,#9f29ff 113px,#f219ff 147px,#ff16ff 152px,#ff0bd5 170px,#ff00ae 192px,#ff00ab 194px)"></i><i style="background:linear-gradient(90deg,#0047ff 30px,#0845ff 36px,#5536ff 78px,#a327ff 115px,#f417ff 148px,#ff15ff 152px,#ff09d3 171px,#ff00af 192px)"></i><i style="background:linear-gradient(90deg,#0046ff 30px,#2c3dff 56px,#7a2eff 96px,#cc1eff 132px,#ff14ff 152px,#ff08d3 171px,#ff00b2 190px)"></i><i style="background:linear-gradient(90deg,#0045ff 29px,#0444ff 33px,#5035ff 75px,#9f25ff 113px,#f115ff 147px,#fe12ff 152px,#ff06d2 172px,#ff00b7 187px)"></i><i style="background:linear-gradient(90deg,#04f 29px,#0b41ff 37px,#5832ff 79px,#a822ff 117px,#fc11ff 151px,#ff10fd 153px,#ff05d4 171px,#f0b 185px)"></i><i style="background:linear-gradient(90deg,#0043ff 29px,#3338ff 59px,#8128ff 99px,#d318ff 135px,#fe0fff 152px,#ff03d0 173px,#ff00be 183px)"></i><i style="background:linear-gradient(90deg,#0042ff 28px,#0640ff 33px,#5331ff 76px,#a221ff 114px,#f410ff 148px,#ff0dfd 153px,#ff03d4 171px,#ff00c4 180px)"></i><i style="background:linear-gradient(90deg,#0040ff 28px,#0f3dff 38px,#5b2eff 80px,#ab1dff 118px,#ff0cfe 153px,#ff02d5 171px,#ff00c8 178px)"></i><i style="background:linear-gradient(90deg,#0040ff 27px,#043eff 31px,#502fff 74px,#9e1fff 112px,#f10eff 147px,#ff0bfe 153px,#ff01d5 171px,#ff00cd 175px)"></i><i style="background:linear-gradient(90deg,#003eff 27px,#083cff 33px,#542dff 76px,#a21dff 114px,#f30cff 148px,#ff09fe 153px,#ff00d5 171px,#ff00d1 173px)"></i><i style="background:linear-gradient(90deg,#003dff 27px,#1e37ff 46px,#6c27ff 88px,#bb16ff 125px,#ff08fe 153px,#ff00d7 170px,#ff00d5 171px)"></i><i style="background:linear-gradient(90deg,#003cff 26px,#043bff 30px,#512bff 74px,#a01aff 113px,#f309ff 148px,#ff07fe 153px,#ff00dc 168px)"></i><i style="background:linear-gradient(90deg,#003bff 26px,#0b38ff 34px,#5728ff 77px,#a718ff 116px,#ff05fe 153px,#ff00e0 166px)"></i><i style="background:linear-gradient(90deg,#003aff 26px,#312fff 56px,#7f1fff 97px,#d10eff 134px,#ff04ff 153px,#ff00e7 163px)"></i><i style="background:linear-gradient(90deg,#0039ff 25px,#0637ff 30px,#5227ff 74px,#a117ff 113px,#f305ff 148px,#ff03ff 153px,#ff00eb 161px)"></i><i style="background:linear-gradient(90deg,#0038ff 25px,#1034ff 36px,#5c24ff 79px,#ac13ff 118px,#ff01ff 153px,#ff00f0 159px)"></i><i style="background:linear-gradient(90deg,#0037ff 25px,#362bff 58px,#841aff 99px,#d509ff 136px,#f0f 153px,#ff00f8 156px)"></i><i style="background:linear-gradient(90deg,#0036ff 24px,#0734ff 30px,#5323ff 74px,#a412ff 114px,#f501ff 149px,#f0f 153px,#ff00fd 154px)"></i><i style="background:linear-gradient(90deg,#0035ff 24px,#162fff 39px,#631fff 82px,#b30eff 121px,#fa00ff 151px)"></i><i style="background:linear-gradient(90deg,#0034ff 23px,#0432ff 27px,#5022ff 72px,#a011ff 112px,#f200ff 148px,#f500ff 149px)"></i><i style="background:linear-gradient(90deg,#03f 23px,#0930ff 30px,#561fff 75px,#a60eff 115px,#ed00ff 146px,#f000ff 147px)"></i><i style="background:linear-gradient(90deg,#0032ff 23px,#2e27ff 52px,#7b16ff 94px,#cc05ff 132px,#e800ff 144px)"></i><i style="background:linear-gradient(90deg,#0031ff 22px,#052fff 27px,#511eff 72px,#a00dff 112px,#e300ff 142px)"></i><i style="background:linear-gradient(90deg,#0030ff 22px,#0c2dff 31px,#591cff 76px,#a90aff 116px,#dc00ff 139px)"></i><i style="background:linear-gradient(90deg,#002eff 22px,#3423ff 55px,#8211ff 97px,#d300ff 135px,#d800ff 137px)"></i><i style="background:linear-gradient(90deg,#002eff 21px,#052cff 26px,#531bff 72px,#a309ff 113px,#d300ff 135px)"></i><i style="background:linear-gradient(90deg,#002dff 21px,#1428ff 35px,#6216ff 80px,#b204ff 120px,#c0f 132px)"></i><i style="background:linear-gradient(90deg,#002bff 21px,#391eff 57px,#860dff 99px,#c800ff 130px)"></i><i style="background:linear-gradient(90deg,#002bff 20px,#0928ff 27px,#5617ff 73px,#a505ff 114px,#c100ff 127px)"></i><i style="background:linear-gradient(90deg,#002aff 20px,#2720ff 46px,#750fff 90px,#bd00ff 125px)"></i><i style="background:linear-gradient(90deg,#0029ff 19px,#0527ff 24px,#5116ff 70px,#9f04ff 111px,#b800ff 123px)"></i><i style="background:linear-gradient(90deg,#0028ff 19px,#0c25ff 28px,#5813ff 74px,#a801ff 115px,#b200ff 120px)"></i><i style="background:linear-gradient(90deg,#0027ff 19px,#311bff 51px,#8009ff 95px,#ae00ff 118px)"></i><i style="background:linear-gradient(90deg,#0026ff 18px,#0524ff 23px,#5213ff 70px,#a200ff 112px,#a0f 116px)"></i><i style="background:linear-gradient(90deg,#0025ff 18px,#1021ff 30px,#5d0fff 76px,#a400ff 113px)"></i><i style="background:linear-gradient(90deg,#0024ff 18px,#3717ff 54px,#8604ff 98px,#a000ff 111px)"></i><i style="background:linear-gradient(90deg,#0023ff 17px,#0721ff 23px,#530fff 70px,#9a00ff 108px)"></i><i style="background:linear-gradient(90deg,#02f 17px,#1d1bff 37px,#6b09ff 83px,#9600ff 106px)"></i><i style="background:linear-gradient(90deg,#0021ff 17px,#3a13ff 55px,#8901ff 99px,#9300ff 104px)"></i><i style="background:linear-gradient(90deg,#0020ff 16px,#0a1eff 24px,#560cff 71px,#8d00ff 101px)"></i><i style="background:linear-gradient(90deg,#001fff 16px,#2e14ff 47px,#7c02ff 92px,#8900ff 99px)"></i><i style="background:linear-gradient(90deg,#001fff 15px,#051dff 20px,#510bff 68px,#8400ff 96px)"></i><i style="background:linear-gradient(90deg,#001eff 15px,#0e1aff 26px,#5a08ff 73px,#8000ff 94px)"></i><i style="background:linear-gradient(90deg,#001dff 15px,#3410ff 50px,#7d00ff 92px)"></i><i style="background:linear-gradient(90deg,#001cff 14px,#071aff 20px,#5208ff 68px,#7800ff 89px)"></i><i style="background:linear-gradient(90deg,#001bff 14px,#1715ff 31px,#6402ff 78px,#7400ff 87px)"></i><i style="background:linear-gradient(90deg,#001aff 14px,#390cff 52px,#6f00ff 84px)"></i><i style="background:linear-gradient(90deg,#0019ff 13px,#0817ff 20px,#5504ff 69px,#6c00ff 82px)"></i><i style="background:linear-gradient(90deg,#0018ff 13px,#2a0eff 42px,#6800ff 80px)"></i><i style="background:linear-gradient(90deg,#0018ff 12px,#0516ff 17px,#5103ff 66px,#6400ff 77px)"></i><i style="background:linear-gradient(90deg,#0017ff 12px,#0b14ff 21px,#5801ff 70px,#6000ff 75px)"></i><i style="background:linear-gradient(90deg,#0016ff 12px,#3309ff 47px,#5c00ff 72px)"></i><i style="background:linear-gradient(90deg,#0015ff 11px,#0613ff 17px,#5300ff 67px,#5800ff 70px)"></i><i style="background:linear-gradient(90deg,#0014ff 11px,#120fff 25px,#50f 68px)"></i><i style="background:linear-gradient(90deg,#0013ff 11px,#3705ff 49px,#5100ff 65px)"></i><i style="background:linear-gradient(90deg,#0013ff 10px,#0810ff 17px,#4e00ff 63px)"></i><i style="background:linear-gradient(90deg,#0012ff 10px,#2109ff 34px,#4900ff 60px)"></i><i style="background:linear-gradient(90deg,#01f 10px,#3a02ff 50px,#4700ff 58px)"></i><i style="background:linear-gradient(90deg,#0010ff 9px,#0b0dff 18px,#40f 56px)"></i><i style="background:linear-gradient(90deg,#000fff 9px,#3003ff 43px,#3f00ff 53px)"></i><i style="background:linear-gradient(90deg,#000fff 8px,#050dff 13px,#3d00ff 51px)"></i><i style="background:linear-gradient(90deg,#000eff 8px,#0f0aff 20px,#3a00ff 49px)"></i><i style="background:linear-gradient(90deg,#000dff 8px,#3400ff 45px,#3600ff 46px)"></i><i style="background:linear-gradient(90deg,#000cff 7px,#060aff 13px,#30f 44px)"></i><i style="background:linear-gradient(90deg,#000bff 7px,#1905ff 26px,#2f00ff 41px)"></i><i style="background:linear-gradient(90deg,#000bff 7px,#2c00ff 39px)"></i><i style="background:linear-gradient(90deg,#000aff 6px,#0907ff 14px,#2a00ff 37px)"></i><i style="background:linear-gradient(90deg,#0009ff 6px,#2600ff 34px)"></i><i style="background:linear-gradient(90deg,#0008ff 6px,#2300ff 32px)"></i><i style="background:linear-gradient(90deg,#0008ff 5px,#0c04ff 15px,#1f00ff 29px)"></i><i style="background:linear-gradient(90deg,#0007ff 5px,#1d00ff 27px)"></i><i style="background:linear-gradient(90deg,#0006ff 4px,#0604ff 10px,#1b00ff 25px)"></i><i style="background:linear-gradient(90deg,#0005ff 4px,#1400ff 20px,#1700ff 22px)"></i><i style="background:linear-gradient(90deg,#0005ff 4px,#1400ff 20px)"></i><i style="background:linear-gradient(90deg,#0004ff 3px,#0702ff 10px,#10f 17px)"></i><i style="background:linear-gradient(90deg,#0003ff 3px,#0f00ff 15px)"></i><i style="background:linear-gradient(90deg,#0002ff 3px,#0c00ff 13px)"></i><i style="background:linear-gradient(90deg,#0002ff 2px,#0900ff 10px)"></i><i style="background:linear-gradient(90deg,#0001ff 2px,#0700ff 8px)"></i><i style="background:linear-gradient(90deg,#00f 2px,#0300ff 5px)"></i><i></i><i></i><i></i></div>
<div class="cl" style="left:1639px;top:121px;width:256px;height:216.5px;background:#2b2b2b"></div>
<div class="cl" style="left:1642px;top:124.2px;width:250px;height:209.8px;background:#8e8e8e"></div>
<div class="cl" style="left:1644px;top:126px;width:246px;height:206px;clip-path:polygon(0.0px 0.0px,246.0px 0.0px,246.0px 206.0px,0.0px 206.0px)"><i style="background:linear-gradient(90deg,#6b9900 0px,#999700 201px,#998d00 246px)"></i><i style="background:linear-gradient(90deg,#6b9900 0px,#999800 200px,#998d00 246px)"></i><i style="background:linear-gradient(90deg,#6c9900 0px,#999800 199px,#998d00 246px)"></i><i style="background:linear-gradient(90deg,#6c9900 0px,#999700 199px,#998d00 246px)"></i><i style="background:linear-gradient(90deg,#6c9900 0px,#999800 198px,#998c00 246px)"></i><i style="background:linear-gradient(90deg,#6c9900 0px,#999800 197px,#998c00 246px)"></i><i style="background:linear-gradient(90deg,#6c9900 0px,#999800 196px,#998c00 246px)"></i><i style="background:linear-gradient(90deg,#6c9900 0px,#999700 196px,#998c00 246px)"></i><i style="background:linear-gradient(90deg,#6c9900 0px,#999800 195px,#998c00 246px)"></i><i style="background:linear-gradient(90deg,#6d9900 0px,#999800 194px,#998c00 246px)"></i><i style="background:linear-gradient(90deg,#6d9900 0px,#999800 193px,#998b00 246px)"></i><i style="background:linear-gradient(90deg,#6d9900 0px,#999800 193px,#998b00 246px)"></i><i style="background:linear-gradient(90deg,#6d9900 0px,#999800 192px,#998b00 246px)"></i><i style="background:linear-gradient(90deg,#6d9900 0px,#999800 191px,#998b00 246px)"></i><i style="background:linear-gradient(90deg,#6d9900 0px,#999700 191px,#998b00 246px)"></i><i style="background:linear-gradient(90deg,#6d9900 0px,#999800 190px,#998b00 246px)"></i><i style="background:linear-gradient(90deg,#6e9900 0px,#999800 189px,#998a00 246px)"></i><i style="background:linear-gradient(90deg,#6e9900 0px,#999800 188px,#998a00 246px)"></i><i style="background:linear-gradient(90deg,#6e9900 0px,#999700 188px,#998a00 246px)"></i><i style="background:linear-gradient(90deg,#6e9900 0px,#999800 187px,#998a00 246px)"></i><i style="background:linear-gradient(90deg,#6e9900 0px,#999800 186px,#998a00 246px)"></i><i style="background:linear-gradient(90deg,#6e9900 0px,#999700 186px,#998a00 246px)"></i><i style="background:linear-gradient(90deg,#6e9900 0px,#999800 185px,#998900 246px)"></i><i style="background:linear-gradient(90deg,#6f9900 0px,#999800 184px,#998900 246px)"></i><i style="background:linear-gradient(90deg,#6f9900 0px,#999800 183px,#998900 246px)"></i><i style="background:linear-gradient(90deg,#6f9900 0px,#999700 183px,#998900 246px)"></i><i style="background:linear-gradient(90deg,#6f9900 0px,#999800 182px,#998900 246px)"></i><i style="background:linear-gradient(90deg,#6f9900 0px,#999800 181px,#998900 246px)"></i><i style="background:linear-gradient(90deg,#6f9900 0px,#999800 180px,#980 246px)"></i><i style="background:linear-gradient(90deg,#6f9901 0px,#999700 180px,#980 246px)"></i><i style="background:linear-gradient(90deg,#709901 0px,#999800 179px,#980 246px)"></i><i style="background:linear-gradient(90deg,#709901 0px,#999800 178px,#980 246px)"></i><i style="background:linear-gradient(90deg,#709901 0px,#999700 178px,#980 246px)"></i><i style="background:linear-gradient(90deg,#709901 0px,#999800 177px,#980 246px)"></i><i style="background:linear-gradient(90deg,#709901 0px,#999800 176px,#998700 246px)"></i><i style="background:linear-gradient(90deg,#709901 0px,#999800 175px,#998700 246px)"></i><i style="background:linear-gradient(90deg,#709901 0px,#999700 175px,#998700 246px)"></i><i style="background:linear-gradient(90deg,#719901 0px,#999800 174px,#998700 246px)"></i><i style="background:linear-gradient(90deg,#719901 0px,#999800 173px,#998700 246px)"></i><i style="background:linear-gradient(90deg,#719901 0px,#999800 172px,#998700 246px)"></i><i style="background:linear-gradient(90deg,#719901 0px,#999800 172px,#998700 246px)"></i><i style="background:linear-gradient(90deg,#719901 0px,#999800 171px,#998600 246px)"></i><i style="background:linear-gradient(90deg,#719902 0px,#999800 170px,#998600 246px)"></i><i style="background:linear-gradient(90deg,#719902 0px,#999700 170px,#998600 246px)"></i><i style="background:linear-gradient(90deg,#729902 0px,#999800 169px,#998600 246px)"></i><i style="background:linear-gradient(90deg,#729902 0px,#999800 168px,#998600 246px)"></i><i style="background:linear-gradient(90deg,#729902 0px,#999800 167px,#998600 246px)"></i><i style="background:linear-gradient(90deg,#729902 0px,#999700 167px,#998500 246px)"></i><i style="background:linear-gradient(90deg,#729902 0px,#979900 152px,#999400 182px,#998500 246px)"></i><i style="background:linear-gradient(90deg,#729902 0px,#959900 144px,#999700 169px,#998500 246px)"></i><i style="background:linear-gradient(90deg,#729902 0px,#939900 136px,#999700 166px,#998500 246px)"></i><i style="background:linear-gradient(90deg,#739902 0px,#929900 132px,#999700 165px,#998500 246px)"></i><i style="background:linear-gradient(90deg,#739902 0px,#919900 127px,#999700 164px,#998500 246px)"></i><i style="background:linear-gradient(90deg,#739902 0px,#919900 125px,#999700 164px,#998400 246px)"></i><i style="background:linear-gradient(90deg,#739903 0px,#909900 122px,#999700 163px,#998400 246px)"></i><i style="background:linear-gradient(90deg,#739903 0px,#909900 120px,#999700 162px,#998400 246px)"></i><i style="background:linear-gradient(90deg,#739903 0px,#909900 119px,#999700 161px,#998400 246px)"></i><i style="background:linear-gradient(90deg,#739903 0px,#909900 118px,#999700 161px,#998400 246px)"></i><i style="background:linear-gradient(90deg,#749903 0px,#909900 117px,#999700 160px,#998400 246px)"></i><i style="background:linear-gradient(90deg,#749903 0px,#909900 117px,#999700 159px,#998400 246px)"></i><i style="background:linear-gradient(90deg,#749903 0px,#909900 116px,#999700 158px,#998300 246px)"></i><i style="background:linear-gradient(90deg,#749903 0px,#909900 116px,#999700 158px,#998300 246px)"></i><i style="background:linear-gradient(90deg,#749903 0px,#909900 116px,#999700 157px,#998300 246px)"></i><i style="background:linear-gradient(90deg,#749903 0px,#919900 117px,#999700 156px,#998300 246px)"></i><i style="background:linear-gradient(90deg,#759903 0px,#919900 117px,#999700 156px,#998300 246px)"></i><i style="background:linear-gradient(90deg,#759903 0px,#919900 117px,#999700 155px,#998300 246px)"></i><i style="background:linear-gradient(90deg,#759903 0px,#919900 118px,#999700 154px,#998200 246px)"></i><i style="background:linear-gradient(90deg,#759904 0px,#929900 118px,#999700 154px,#998200 246px)"></i><i style="background:linear-gradient(90deg,#759904 0px,#929900 119px,#999700 153px,#998200 246px)"></i><i style="background:linear-gradient(90deg,#759904 0px,#939900 120px,#999700 152px,#998200 246px)"></i><i style="background:linear-gradient(90deg,#759904 0px,#939900 120px,#999700 152px,#998200 246px)"></i><i style="background:linear-gradient(90deg,#769904 0px,#939900 121px,#999700 151px,#998200 246px)"></i><i style="background:linear-gradient(90deg,#769904 0px,#949900 122px,#999700 151px,#998200 246px)"></i><i style="background:linear-gradient(90deg,#769904 0px,#949900 123px,#999700 150px,#998100 246px)"></i><i style="background:linear-gradient(90deg,#769904 0px,#949900 124px,#999700 150px,#998100 246px)"></i><i style="background:linear-gradient(90deg,#769904 0px,#959900 125px,#999700 150px,#998100 246px)"></i><i style="background:linear-gradient(90deg,#769904 0px,#959900 126px,#999600 150px,#998100 246px)"></i><i style="background:linear-gradient(90deg,#769904 0px,#969900 127px,#999600 150px,#998100 246px)"></i><i style="background:linear-gradient(90deg,#779904 0px,#969900 128px,#999600 152px,#998100 246px)"></i><i style="background:linear-gradient(90deg,#779905 0px,#979900 129px,#999500 154px,#998000 246px)"></i><i style="background:linear-gradient(90deg,#779905 0px,#979900 130px,#999100 169px,#998000 246px)"></i><i style="background:linear-gradient(90deg,#779905 0px,#989900 131px,#998000 246px)"></i><i style="background:linear-gradient(90deg,#779905 0px,#989900 132px,#998000 246px)"></i><i style="background:linear-gradient(90deg,#779905 0px,#989900 133px,#998000 246px)"></i><i style="background:linear-gradient(90deg,#789905 0px,#990 135px,#998000 246px)"></i><i style="background:linear-gradient(90deg,#789905 0px,#999800 136px,#997f00 246px)"></i><i style="background:linear-gradient(90deg,#789905 0px,#999800 137px,#997f00 246px)"></i><i style="background:linear-gradient(90deg,#789905 0px,#999700 138px,#997f00 246px)"></i><i style="background:linear-gradient(90deg,#789905 0px,#999800 137px,#997f00 246px)"></i><i style="background:linear-gradient(90deg,#789905 0px,#999800 136px,#997f00 246px)"></i><i style="background:linear-gradient(90deg,#789905 0px,#999700 136px,#997f00 246px)"></i><i style="background:linear-gradient(90deg,#799906 0px,#999800 135px,#997f00 246px)"></i><i style="background:linear-gradient(90deg,#799906 0px,#999800 134px,#997e00 246px)"></i><i style="background:linear-gradient(90deg,#799906 0px,#999800 133px,#997e00 246px)"></i><i style="background:linear-gradient(90deg,#799906 0px,#999700 133px,#997e00 246px)"></i><i style="background:linear-gradient(90deg,#799906 0px,#999800 132px,#997e00 246px)"></i><i style="background:linear-gradient(90deg,#799906 0px,#999800 131px,#997e00 246px)"></i><i style="background:linear-gradient(90deg,#7a9906 0px,#999700 131px,#997e00 246px)"></i><i style="background:linear-gradient(90deg,#7a9906 0px,#999700 130px,#997e00 246px)"></i><i style="background:linear-gradient(90deg,#7a9906 0px,#999800 129px,#997d00 246px)"></i><i style="background:linear-gradient(90deg,#7a9906 0px,#999800 128px,#997d00 246px)"></i><i style="background:linear-gradient(90deg,#7a9906 0px,#999700 128px,#997d00 246px)"></i><i style="background:linear-gradient(90deg,#7a9906 0px,#999800 127px,#997d00 246px)"></i><i style="background:linear-gradient(90deg,#7b9907 0px,#999800 126px,#997d00 246px)"></i><i style="background:linear-gradient(90deg,#7b9907 0px,#999800 125px,#997d00 246px)"></i><i style="background:linear-gradient(90deg,#7b9907 0px,#999700 125px,#997c00 246px)"></i><i style="background:linear-gradient(90deg,#7b9907 0px,#999800 124px,#997c00 246px)"></i><i style="background:linear-gradient(90deg,#7b9907 0px,#999800 123px,#997c00 246px)"></i><i style="background:linear-gradient(90deg,#7b9907 0px,#999700 123px,#997c00 246px)"></i><i style="background:linear-gradient(90deg,#7b9907 0px,#999801 122px,#997c00 246px)"></i><i style="background:linear-gradient(90deg,#7c9907 0px,#999801 121px,#997c00 246px)"></i><i style="background:linear-gradient(90deg,#7c9907 0px,#999801 120px,#997c00 246px)"></i><i style="background:linear-gradient(90deg,#7c9907 0px,#999701 120px,#997b00 246px)"></i><i style="background:linear-gradient(90deg,#7c9907 0px,#999801 119px,#997b00 246px)"></i><i style="background:linear-gradient(90deg,#7c9907 0px,#999801 118px,#997b00 246px)"></i><i style="background:linear-gradient(90deg,#7c9908 0px,#999701 118px,#997b00 246px)"></i><i style="background:linear-gradient(90deg,#7d9908 0px,#999701 117px,#997b00 246px)"></i><i style="background:linear-gradient(90deg,#7d9908 0px,#999802 116px,#997b00 246px)"></i><i style="background:linear-gradient(90deg,#7d9908 0px,#999802 115px,#997a00 246px)"></i><i style="background:linear-gradient(90deg,#7d9908 0px,#999702 115px,#997a00 246px)"></i><i style="background:linear-gradient(90deg,#7d9908 0px,#999802 114px,#997a00 246px)"></i><i style="background:linear-gradient(90deg,#7d9908 0px,#999802 113px,#997a00 246px)"></i><i style="background:linear-gradient(90deg,#7e9908 0px,#999802 112px,#997b00 238px,#997a00 246px)"></i><i style="background:linear-gradient(90deg,#7e9908 0px,#999702 112px,#997c00 234px,#997a00 246px)"></i><i style="background:linear-gradient(90deg,#7e9908 0px,#999802 111px,#997d00 226px,#997a00 246px)"></i><i style="background:linear-gradient(90deg,#7e9908 0px,#999803 110px,#997e00 222px,#997900 246px)"></i><i style="background:linear-gradient(90deg,#7e9909 0px,#999703 110px,#997e00 220px,#997900 246px)"></i><i style="background:linear-gradient(90deg,#7e9909 0px,#999703 109px,#997f00 218px,#997900 246px)"></i><i style="background:linear-gradient(90deg,#7f9909 0px,#999803 108px,#997f00 215px,#997900 246px)"></i><i style="background:linear-gradient(90deg,#7f9909 0px,#999803 107px,#997f00 214px,#997900 246px)"></i><i style="background:linear-gradient(90deg,#7f9909 0px,#999703 107px,#997f00 214px,#997900 246px)"></i><i style="background:linear-gradient(90deg,#7f9909 0px,#999803 106px,#997f00 214px,#997900 246px)"></i><i style="background:linear-gradient(90deg,#7f9909 0px,#999803 105px,#997f00 213px,#997800 246px)"></i><i style="background:linear-gradient(90deg,#7f9909 0px,#999804 104px,#997e00 214px,#997800 246px)"></i><i style="background:linear-gradient(90deg,#809909 0px,#999704 104px,#997e00 214px,#997800 246px)"></i><i style="background:linear-gradient(90deg,#809909 0px,#999804 103px,#997e00 214px,#997800 246px)"></i><i style="background:linear-gradient(90deg,#809909 0px,#999804 102px,#997e00 215px,#997800 246px)"></i><i style="background:linear-gradient(90deg,#809909 0px,#999704 102px,#997d00 216px,#997800 246px)"></i><i style="background:linear-gradient(90deg,#80990a 0px,#999804 101px,#997d00 216px,#997800 246px)"></i><i style="background:linear-gradient(90deg,#80990a 0px,#999804 100px,#997d00 217px,#970 246px)"></i><i style="background:linear-gradient(90deg,#81990a 0px,#999804 99px,#997d00 218px,#970 246px)"></i><i style="background:linear-gradient(90deg,#81990a 0px,#999705 99px,#997c00 219px,#970 246px)"></i><i style="background:linear-gradient(90deg,#81990a 0px,#999805 98px,#997c00 220px,#970 246px)"></i><i style="background:linear-gradient(90deg,#81990a 0px,#999805 97px,#997b00 221px,#970 246px)"></i><i style="background:linear-gradient(90deg,#81990a 0px,#999705 97px,#997b00 222px,#970 246px)"></i><i style="background:linear-gradient(90deg,#81990a 0px,#999705 96px,#997b00 223px,#997600 246px)"></i><i style="background:linear-gradient(90deg,#82990a 0px,#999805 95px,#997a00 224px,#997600 246px)"></i><i style="background:linear-gradient(90deg,#82990a 0px,#999805 94px,#997a00 225px,#997600 246px)"></i><i style="background:linear-gradient(90deg,#82990a 0px,#999705 94px,#997a00 226px,#997600 246px)"></i><i style="background:linear-gradient(90deg,#82990b 0px,#999806 93px,#997900 227px,#997600 246px)"></i><i style="background:linear-gradient(90deg,#82990b 0px,#999806 92px,#997900 228px,#997600 246px)"></i><i style="background:linear-gradient(90deg,#82990b 0px,#999706 92px,#997900 230px,#997600 246px)"></i><i style="background:linear-gradient(90deg,#83990b 0px,#999706 91px,#997800 231px,#997500 246px)"></i><i style="background:linear-gradient(90deg,#83990b 0px,#999806 90px,#997800 232px,#997500 246px)"></i><i style="background:linear-gradient(90deg,#83990b 0px,#999806 89px,#997800 233px,#997500 246px)"></i><i style="background:linear-gradient(90deg,#83990b 0px,#999706 89px,#970 235px,#997500 246px)"></i><i style="background:linear-gradient(90deg,#83990b 0px,#999706 88px,#970 234px,#997500 246px)"></i><i style="background:linear-gradient(90deg,#83990b 0px,#999807 87px,#970 233px,#997500 246px)"></i><i style="background:linear-gradient(90deg,#84990b 0px,#999807 86px,#970 232px,#997500 246px)"></i><i style="background:linear-gradient(90deg,#84990b 0px,#999707 86px,#970 232px,#997400 246px)"></i><i style="background:linear-gradient(90deg,#84990c 0px,#999807 85px,#970 231px,#997400 246px)"></i><i style="background:linear-gradient(90deg,#84990c 0px,#999807 84px,#970 229px,#997400 246px)"></i><i style="background:linear-gradient(90deg,#84990c 0px,#999707 84px,#970 229px,#997400 246px)"></i><i style="background:linear-gradient(90deg,#85990c 0px,#999707 83px,#970 228px,#997400 246px)"></i><i style="background:linear-gradient(90deg,#85990c 0px,#999808 82px,#970 227px,#997400 246px)"></i><i style="background:linear-gradient(90deg,#85990c 0px,#999808 81px,#970 226px,#997400 246px)"></i><i style="background:linear-gradient(90deg,#85990c 0px,#999708 81px,#970 226px,#997300 246px)"></i><i style="background:linear-gradient(90deg,#85990c 0px,#999808 80px,#970 225px,#997300 246px)"></i><i style="background:linear-gradient(90deg,#85990c 0px,#999808 79px,#970 224px,#997300 246px)"></i><i style="background:linear-gradient(90deg,#86990c 0px,#999708 79px,#970 224px,#997300 246px)"></i><i style="background:linear-gradient(90deg,#86990d 0px,#999708 78px,#970 223px,#997300 246px)"></i><i style="background:linear-gradient(90deg,#86990d 0px,#999808 77px,#970 222px,#997300 246px)"></i><i style="background:linear-gradient(90deg,#86990d 0px,#999809 76px,#970 220px,#997300 246px)"></i><i style="background:linear-gradient(90deg,#86990d 0px,#999709 76px,#970 221px,#997200 246px)"></i><i style="background:linear-gradient(90deg,#86990d 0px,#999709 75px,#970 219px,#997200 246px)"></i><i style="background:linear-gradient(90deg,#87990d 0px,#999809 74px,#997701 218px,#997200 246px)"></i><i style="background:linear-gradient(90deg,#87990d 0px,#999809 73px,#997701 217px,#997200 246px)"></i><i style="background:linear-gradient(90deg,#87990d 0px,#999709 73px,#997701 217px,#997200 246px)"></i><i style="background:linear-gradient(90deg,#87990d 0px,#999809 72px,#997701 216px,#997200 246px)"></i><i style="background:linear-gradient(90deg,#87990d 0px,#99980a 71px,#997701 215px,#997200 246px)"></i><i style="background:linear-gradient(90deg,#88990d 0px,#99970a 71px,#997701 215px,#997100 246px)"></i><i style="background:linear-gradient(90deg,#88990e 0px,#99970a 70px,#997701 214px,#997100 246px)"></i><i style="background:linear-gradient(90deg,#88990e 0px,#99980a 69px,#997701 213px,#997100 246px)"></i><i style="background:linear-gradient(90deg,#88990e 0px,#99970a 69px,#997701 213px,#997100 246px)"></i><i style="background:linear-gradient(90deg,#88990e 0px,#99970a 68px,#997702 212px,#997100 246px)"></i><i style="background:linear-gradient(90deg,#88990e 0px,#99970a 67px,#997702 211px,#997100 246px)"></i><i style="background:linear-gradient(90deg,#89990e 0px,#99980a 66px,#997702 209px,#997100 246px)"></i><i style="background:linear-gradient(90deg,#89990e 0px,#99970b 66px,#997702 210px,#997000 246px)"></i><i style="background:linear-gradient(90deg,#89990e 0px,#99970b 65px,#997702 208px,#997000 246px)"></i><i style="background:linear-gradient(90deg,#89990e 0px,#99980b 64px,#997702 207px,#997000 246px)"></i><i style="background:linear-gradient(90deg,#89990e 0px,#99970b 64px,#997702 207px,#997000 246px)"></i><i style="background:linear-gradient(90deg,#8a990f 0px,#99970b 63px,#997702 206px,#997000 246px)"></i><i style="background:linear-gradient(90deg,#8a990f 0px,#99970b 62px,#997702 205px,#997000 246px)"></i><i style="background:linear-gradient(90deg,#8a990f 0px,#99980b 61px,#997703 204px,#997001 246px)"></i><i style="background:linear-gradient(90deg,#8a990f 0px,#99970b 61px,#997703 204px,#996f01 246px)"></i><i style="background:linear-gradient(90deg,#8a990f 0px,#99970c 60px,#997703 203px,#996f01 246px)"></i><i style="background:linear-gradient(90deg,#8a990f 0px,#99980c 59px,#997703 202px,#996f01 246px)"></i><i style="background:linear-gradient(90deg,#8b990f 0px,#99970c 59px,#997703 202px,#996f01 246px)"></i><i style="background:linear-gradient(90deg,#8b990f 0px,#99970c 58px,#997703 201px,#996f01 246px)"></i><i style="background:linear-gradient(90deg,#8b990f 0px,#99970c 57px,#997703 199px,#996f01 246px)"></i><i style="background:linear-gradient(90deg,#8b990f 0px,#99980c 56px,#997703 198px,#996f01 246px)"></i><i style="background:linear-gradient(90deg,#8b9910 0px,#99970c 56px,#997703 198px,#996e01 246px)"></i><i style="background:linear-gradient(90deg,#8c9910 0px,#99970d 55px,#997704 197px,#996e01 246px)"></i><i style="background:linear-gradient(90deg,#8c9910 0px,#99970d 54px,#997704 196px,#996e01 246px)"></i><i style="background:linear-gradient(90deg,#8c9910 0px,#99970d 54px,#997704 196px,#996e01 246px)"></i><i style="background:linear-gradient(90deg,#8c9910 0px,#99970d 53px,#997704 195px,#996e01 246px)"></i></div>
<div class="cl" style="left:1644px;top:126px;width:246px;height:206px;clip-path:polygon(246.0px 185.5px,246.0px 206.0px,0.0px 206.0px,0.0px 21.7px)"><i style="background:linear-gradient(90deg,#b3ff00 0px,#fffe00 198px,#ffeb00 246px)"></i><i style="background:linear-gradient(90deg,#b3ff00 0px,#fffe00 197px,#ffeb00 246px)"></i><i style="background:linear-gradient(90deg,#b3ff00 0px,#fffe00 197px,#ffea00 246px)"></i><i style="background:linear-gradient(90deg,#b4ff00 0px,#fffe00 196px,#ffea00 246px)"></i><i style="background:linear-gradient(90deg,#b4ff00 0px,#fffe00 195px,#ffea00 246px)"></i><i style="background:linear-gradient(90deg,#b4ff00 0px,#fffd00 195px,#ffea00 246px)"></i><i style="background:linear-gradient(90deg,#b4ff00 0px,#fffe00 194px,#ffe900 246px)"></i><i style="background:linear-gradient(90deg,#b4ff00 0px,#fffe00 193px,#ffe900 246px)"></i><i style="background:linear-gradient(90deg,#b5ff00 0px,#fffe00 192px,#ffe900 246px)"></i><i style="background:linear-gradient(90deg,#b5ff00 0px,#fffe00 192px,#ffe900 246px)"></i><i style="background:linear-gradient(90deg,#b5ff00 0px,#fffe00 191px,#ffe800 246px)"></i><i style="background:linear-gradient(90deg,#b5ff00 0px,#fffe00 190px,#ffe800 246px)"></i><i style="background:linear-gradient(90deg,#b6ff00 0px,#fffe00 189px,#ffe800 246px)"></i><i style="background:linear-gradient(90deg,#b6ff00 0px,#fffe00 189px,#ffe700 246px)"></i><i style="background:linear-gradient(90deg,#b6ff00 0px,#fffe00 188px,#ffe700 246px)"></i><i style="background:linear-gradient(90deg,#b6ff00 0px,#fffe00 187px,#ffe700 246px)"></i><i style="background:linear-gradient(90deg,#b7ff00 0px,#fffd00 187px,#ffe700 246px)"></i><i style="background:linear-gradient(90deg,#b7ff00 0px,#fffe00 186px,#ffe600 246px)"></i><i style="background:linear-gradient(90deg,#b7ff00 0px,#fffe00 185px,#ffe600 246px)"></i><i style="background:linear-gradient(90deg,#b7ff00 0px,#fffe00 184px,#ffe600 246px)"></i><i style="background:linear-gradient(90deg,#b8ff00 0px,#fffe00 184px,#ffe600 246px)"></i><i style="background:linear-gradient(90deg,#b8ff00 0px,#fffe00 183px,#ffe500 246px)"></i><i style="background:linear-gradient(90deg,#b8ff00 0px,#fffe00 182px,#ffe500 246px)"></i><i style="background:linear-gradient(90deg,#b8ff00 0px,#fffe00 181px,#ffe500 246px)"></i><i style="background:linear-gradient(90deg,#b8ff00 0px,#fffe00 181px,#ffe500 246px)"></i><i style="background:linear-gradient(90deg,#b9ff00 0px,#fffe00 180px,#ffe400 246px)"></i><i style="background:linear-gradient(90deg,#b9ff01 0px,#fffe00 179px,#ffe400 246px)"></i><i style="background:linear-gradient(90deg,#b9ff01 0px,#fffe00 179px,#ffe400 246px)"></i><i style="background:linear-gradient(90deg,#b9ff01 0px,#fffe00 178px,#ffe300 246px)"></i><i style="background:linear-gradient(90deg,#baff01 0px,#fffe00 177px,#ffe300 246px)"></i><i style="background:linear-gradient(90deg,#baff01 0px,#fffe00 176px,#ffe300 246px)"></i><i style="background:linear-gradient(90deg,#baff01 0px,#fffe00 176px,#ffe300 246px)"></i><i style="background:linear-gradient(90deg,#baff01 0px,#fffe00 175px,#ffe200 246px)"></i><i style="background:linear-gradient(90deg,#bbff01 0px,#fffe00 174px,#ffe200 246px)"></i><i style="background:linear-gradient(90deg,#bbff02 0px,#fffd00 174px,#ffe200 246px)"></i><i style="background:linear-gradient(90deg,#bbff02 0px,#ff0 170px,#ffe200 246px)"></i><i style="background:linear-gradient(90deg,#bbff02 0px,#eaff00 119px,#fffe00 172px,#ffe100 246px)"></i><i style="background:linear-gradient(90deg,#bcff02 0px,#e3ff00 101px,#fffd00 172px,#ffe100 246px)"></i><i style="background:linear-gradient(90deg,#bcff02 0px,#deff00 88px,#fffe00 171px,#ffe100 246px)"></i><i style="background:linear-gradient(90deg,#bcff02 0px,#dcff00 82px,#fffe00 170px,#ffe000 246px)"></i><i style="background:linear-gradient(90deg,#bcff02 0px,#daff00 77px,#fffe00 169px,#ffe000 246px)"></i><i style="background:linear-gradient(90deg,#bdff02 0px,#daff00 75px,#fffd00 169px,#ffe000 246px)"></i><i style="background:linear-gradient(90deg,#bdff03 0px,#d9ff00 72px,#fffe00 168px,#ffe000 246px)"></i><i style="background:linear-gradient(90deg,#bdff03 0px,#d9ff00 72px,#fffe00 167px,#ffdf00 246px)"></i><i style="background:linear-gradient(90deg,#bdff03 0px,#d9ff00 71px,#fffe00 166px,#ffdf00 246px)"></i><i style="background:linear-gradient(90deg,#bdff03 0px,#d9ff00 71px,#fffe00 166px,#ffdf00 246px)"></i><i style="background:linear-gradient(90deg,#beff03 0px,#d9ff00 71px,#fffe00 165px,#ffdf00 246px)"></i><i style="background:linear-gradient(90deg,#beff03 0px,#daff00 71px,#fffe00 164px,#ffde00 246px)"></i><i style="background:linear-gradient(90deg,#beff03 0px,#daff00 71px,#fffe00 163px,#ffde00 246px)"></i><i style="background:linear-gradient(90deg,#beff04 0px,#dbff00 72px,#fffe00 163px,#ffde00 246px)"></i><i style="background:linear-gradient(90deg,#bfff04 0px,#dbff00 72px,#fffe00 162px,#ffde00 246px)"></i><i style="background:linear-gradient(90deg,#bfff04 0px,#dcff00 73px,#fffe00 161px,#fd0 246px)"></i><i style="background:linear-gradient(90deg,#bfff04 0px,#dcff00 74px,#fffd00 161px,#fd0 246px)"></i><i style="background:linear-gradient(90deg,#bfff04 0px,#df0 75px,#fffe00 160px,#fd0 246px)"></i><i style="background:linear-gradient(90deg,#c0ff04 0px,#deff00 76px,#fffe00 159px,#fd0 246px)"></i><i style="background:linear-gradient(90deg,#c0ff04 0px,#deff00 77px,#fffe00 158px,#ffdc00 246px)"></i><i style="background:linear-gradient(90deg,#c0ff04 0px,#dfff00 78px,#fffe00 158px,#ffdc00 246px)"></i><i style="background:linear-gradient(90deg,#c0ff05 0px,#e0ff00 79px,#fffe00 157px,#ffdc00 246px)"></i><i style="background:linear-gradient(90deg,#c1ff05 0px,#e0ff00 80px,#fffe00 156px,#ffdb00 246px)"></i><i style="background:linear-gradient(90deg,#c1ff05 0px,#e1ff00 81px,#fffd00 156px,#ffdb00 246px)"></i><i style="background:linear-gradient(90deg,#c1ff05 0px,#e2ff00 83px,#fffe00 155px,#ffdb00 246px)"></i><i style="background:linear-gradient(90deg,#c1ff05 0px,#e3ff00 84px,#fffe00 154px,#ffdb00 246px)"></i><i style="background:linear-gradient(90deg,#c2ff05 0px,#e4ff00 85px,#fffe00 153px,#ffda00 246px)"></i><i style="background:linear-gradient(90deg,#c2ff05 0px,#e4ff00 86px,#fffd00 153px,#ffda00 246px)"></i><i style="background:linear-gradient(90deg,#c2ff06 0px,#e5ff00 87px,#fffe00 152px,#ffda00 246px)"></i><i style="background:linear-gradient(90deg,#c2ff06 0px,#e6ff00 89px,#fffe00 151px,#ffda00 246px)"></i><i style="background:linear-gradient(90deg,#c3ff06 0px,#e7ff00 90px,#fffd00 151px,#ffd900 246px)"></i><i style="background:linear-gradient(90deg,#c3ff06 0px,#e7ff00 91px,#fffe00 150px,#ffd900 246px)"></i><i style="background:linear-gradient(90deg,#c3ff06 0px,#e9ff00 93px,#fffe00 149px,#ffd900 246px)"></i><i style="background:linear-gradient(90deg,#c3ff06 0px,#e9ff00 94px,#fffe00 148px,#ffd900 246px)"></i><i style="background:linear-gradient(90deg,#c4ff06 0px,#eaff00 95px,#fffd00 148px,#ffd800 246px)"></i><i style="background:linear-gradient(90deg,#c4ff06 0px,#ebff00 97px,#fffe00 147px,#ffd800 246px)"></i><i style="background:linear-gradient(90deg,#c4ff07 0px,#ecff00 98px,#fffe00 146px,#ffd800 246px)"></i><i style="background:linear-gradient(90deg,#c4ff07 0px,#edff00 99px,#fffd00 146px,#ffd800 246px)"></i><i style="background:linear-gradient(90deg,#c5ff07 0px,#ef0 101px,#fffe00 145px,#ffd700 246px)"></i><i style="background:linear-gradient(90deg,#c5ff07 0px,#ef0 102px,#fffe00 144px,#ffd700 246px)"></i><i style="background:linear-gradient(90deg,#c5ff07 0px,#efff00 103px,#fffe00 143px,#ffd700 246px)"></i><i style="background:linear-gradient(90deg,#c5ff07 0px,#f0ff00 105px,#fffd00 143px,#ffd700 246px)"></i><i style="background:linear-gradient(90deg,#c6ff07 0px,#f1ff00 106px,#fffe00 142px,#ffd600 246px)"></i><i style="background:linear-gradient(90deg,#c6ff08 0px,#f2ff00 107px,#fffe00 141px,#ffd600 246px)"></i><i style="background:linear-gradient(90deg,#c6ff08 0px,#f3ff00 109px,#fffd00 141px,#ffd600 246px)"></i><i style="background:linear-gradient(90deg,#c6ff08 0px,#f4ff00 110px,#fffd00 140px,#ffd600 246px)"></i><i style="background:linear-gradient(90deg,#c7ff08 0px,#f5ff00 112px,#fffd00 140px,#ffd500 246px)"></i><i style="background:linear-gradient(90deg,#c7ff08 0px,#f5ff00 113px,#fffd00 139px,#ffd500 246px)"></i><i style="background:linear-gradient(90deg,#c7ff08 0px,#f7ff00 115px,#fffd00 138px,#ffd500 246px)"></i><i style="background:linear-gradient(90deg,#c8ff08 0px,#f7ff00 116px,#fffd00 138px,#ffd400 246px)"></i><i style="background:linear-gradient(90deg,#c8ff08 0px,#f8ff00 117px,#fffd00 137px,#ffd400 246px)"></i><i style="background:linear-gradient(90deg,#c8ff09 0px,#f9ff00 119px,#fffd00 136px,#ffd400 246px)"></i><i style="background:linear-gradient(90deg,#c8ff09 0px,#faff00 120px,#fffd00 136px,#ffd400 246px)"></i><i style="background:linear-gradient(90deg,#c9ff09 0px,#fbff00 121px,#fffd00 136px,#ffd300 246px)"></i><i style="background:linear-gradient(90deg,#c9ff09 0px,#fcff00 123px,#fffc00 136px,#ffd300 246px)"></i><i style="background:linear-gradient(90deg,#c9ff09 0px,#fdff00 124px,#fffa00 140px,#ffd300 246px)"></i><i style="background:linear-gradient(90deg,#c9ff09 0px,#feff00 126px,#ffd300 246px)"></i><i style="background:linear-gradient(90deg,#caff09 0px,#ff0 127px,#ffd200 246px)"></i><i style="background:linear-gradient(90deg,#caff0a 0px,#fffe00 129px,#ffd400 241px,#ffd200 246px)"></i><i style="background:linear-gradient(90deg,#caff0a 0px,#fffe00 129px,#ffd400 241px,#ffd200 246px)"></i><i style="background:linear-gradient(90deg,#caff0a 0px,#fffe00 129px,#ffd300 241px,#ffd200 246px)"></i><i style="background:linear-gradient(90deg,#cbff0a 0px,#fffe00 128px,#ffd300 240px,#ffd100 246px)"></i><i style="background:linear-gradient(90deg,#cbff0a 0px,#fffe00 127px,#ffd300 239px,#ffd100 246px)"></i><i style="background:linear-gradient(90deg,#cbff0a 0px,#fffd00 127px,#ffd300 239px,#ffd100 246px)"></i><i style="background:linear-gradient(90deg,#cbff0a 0px,#fffe00 126px,#ffd300 238px,#ffd100 246px)"></i><i style="background:linear-gradient(90deg,#ccff0b 0px,#fffe00 125px,#ffd300 237px,#ffd000 246px)"></i><i style="background:linear-gradient(90deg,#ccff0b 0px,#fffe00 124px,#ffd300 236px,#ffd000 246px)"></i><i style="background:linear-gradient(90deg,#ccff0b 0px,#fffe00 124px,#ffd300 236px,#ffd000 246px)"></i><i style="background:linear-gradient(90deg,#ccff0b 0px,#fffe00 123px,#ffd300 235px,#ffd000 246px)"></i><i style="background:linear-gradient(90deg,#cdff0b 0px,#fffe00 122px,#ffd300 234px,#ffcf00 246px)"></i><i style="background:linear-gradient(90deg,#cdff0b 0px,#fffd00 122px,#ffd300 234px,#ffcf00 246px)"></i><i style="background:linear-gradient(90deg,#cdff0b 0px,#fffe01 121px,#ffd300 233px,#ffcf00 246px)"></i><i style="background:linear-gradient(90deg,#ceff0c 0px,#fffe01 120px,#ffd400 231px,#ffcf00 246px)"></i><i style="background:linear-gradient(90deg,#ceff0c 0px,#fffe01 119px,#ffd400 230px,#ffce00 246px)"></i><i style="background:linear-gradient(90deg,#ceff0c 0px,#fffe01 119px,#ffd300 230px,#ffce00 246px)"></i><i style="background:linear-gradient(90deg,#ceff0c 0px,#fffe02 118px,#ffd300 229px,#ffce00 246px)"></i><i style="background:linear-gradient(90deg,#cfff0c 0px,#fffe02 117px,#ffd300 228px,#ffce00 246px)"></i><i style="background:linear-gradient(90deg,#cfff0c 0px,#fffe02 116px,#ffdb00 206px,#ffcd00 246px)"></i><i style="background:linear-gradient(90deg,#cfff0c 0px,#fffe02 116px,#ffdf00 194px,#ffcd00 246px)"></i><i style="background:linear-gradient(90deg,#cfff0d 0px,#fffe02 115px,#ffe100 186px,#ffcd00 246px)"></i><i style="background:linear-gradient(90deg,#d0ff0d 0px,#fffe03 114px,#ffe300 180px,#ffcd00 246px)"></i><i style="background:linear-gradient(90deg,#d0ff0d 0px,#fffd03 114px,#ffe300 180px,#fc0 246px)"></i><i style="background:linear-gradient(90deg,#d0ff0d 0px,#fffe03 113px,#ffe400 177px,#fc0 246px)"></i><i style="background:linear-gradient(90deg,#d0ff0d 0px,#fffe03 112px,#ffe300 177px,#fc0 246px)"></i><i style="background:linear-gradient(90deg,#d1ff0d 0px,#fffe03 111px,#ffe400 176px,#fc0 246px)"></i><i style="background:linear-gradient(90deg,#d1ff0d 0px,#fffe04 111px,#ffe300 177px,#ffcb00 246px)"></i><i style="background:linear-gradient(90deg,#d1ff0e 0px,#fffe04 110px,#ffe300 177px,#ffcb00 246px)"></i><i style="background:linear-gradient(90deg,#d2ff0e 0px,#fffe04 109px,#ffe200 178px,#ffcb00 246px)"></i><i style="background:linear-gradient(90deg,#d2ff0e 0px,#fffd04 109px,#ffe100 179px,#ffcb00 246px)"></i><i style="background:linear-gradient(90deg,#d2ff0e 0px,#fffe04 108px,#ffe100 179px,#ffca00 246px)"></i><i style="background:linear-gradient(90deg,#d2ff0e 0px,#fffe05 107px,#ffe000 180px,#ffca00 246px)"></i><i style="background:linear-gradient(90deg,#d3ff0e 0px,#fffe05 106px,#ffe000 181px,#ffca00 246px)"></i><i style="background:linear-gradient(90deg,#d3ff0e 0px,#fffd05 106px,#ffdf00 182px,#ffca00 246px)"></i><i style="background:linear-gradient(90deg,#d3ff0f 0px,#fffe05 105px,#ffde00 183px,#ffc900 246px)"></i><i style="background:linear-gradient(90deg,#d4ff0f 0px,#fffe06 104px,#fd0 185px,#ffc900 246px)"></i><i style="background:linear-gradient(90deg,#d4ff0f 0px,#fffe06 103px,#fd0 186px,#ffc900 246px)"></i><i style="background:linear-gradient(90deg,#d4ff0f 0px,#fffe06 103px,#ffdc00 187px,#ffc900 246px)"></i><i style="background:linear-gradient(90deg,#d4ff0f 0px,#fffe06 102px,#ffdc00 188px,#ffc800 246px)"></i><i style="background:linear-gradient(90deg,#d5ff0f 0px,#fffe06 101px,#ffdb00 189px,#ffc800 246px)"></i><i style="background:linear-gradient(90deg,#d5ff10 0px,#fffd07 101px,#ffda00 191px,#ffc800 246px)"></i><i style="background:linear-gradient(90deg,#d5ff10 0px,#fffe07 100px,#ffd900 192px,#ffc800 246px)"></i><i style="background:linear-gradient(90deg,#d5ff10 0px,#fffe07 99px,#ffd900 193px,#ffc700 246px)"></i><i style="background:linear-gradient(90deg,#d6ff10 0px,#fffe07 98px,#ffd800 195px,#ffc700 246px)"></i><i style="background:linear-gradient(90deg,#d6ff10 0px,#fffe07 98px,#ffd700 196px,#ffc700 246px)"></i><i style="background:linear-gradient(90deg,#d6ff10 0px,#fffe08 97px,#ffd700 197px,#ffc700 246px)"></i><i style="background:linear-gradient(90deg,#d7ff10 0px,#fffe08 96px,#ffd600 199px,#ffc600 246px)"></i><i style="background:linear-gradient(90deg,#d7ff11 0px,#fffd08 96px,#ffd500 200px,#ffc600 246px)"></i><i style="background:linear-gradient(90deg,#d7ff11 0px,#fffe08 95px,#ffd400 201px,#ffc600 246px)"></i><i style="background:linear-gradient(90deg,#d7ff11 0px,#fffe08 94px,#ffd300 203px,#ffc600 246px)"></i><i style="background:linear-gradient(90deg,#d8ff11 0px,#fffe09 93px,#ffd400 202px,#ffc500 246px)"></i><i style="background:linear-gradient(90deg,#d8ff11 0px,#fffd09 93px,#ffd300 202px,#ffc500 246px)"></i><i style="background:linear-gradient(90deg,#d8ff11 0px,#fffe09 92px,#ffd300 201px,#ffc500 246px)"></i><i style="background:linear-gradient(90deg,#d9ff11 0px,#fffe09 91px,#ffd300 200px,#ffc500 246px)"></i><i style="background:linear-gradient(90deg,#d9ff12 0px,#fffe0a 90px,#ffd300 199px,#ffc400 246px)"></i><i style="background:linear-gradient(90deg,#d9ff12 0px,#fffe0a 90px,#ffd300 199px,#ffc400 246px)"></i><i style="background:linear-gradient(90deg,#d9ff12 0px,#fffe0a 89px,#ffd300 198px,#ffc400 246px)"></i><i style="background:linear-gradient(90deg,#daff12 0px,#fffe0a 88px,#ffd300 197px,#ffc400 246px)"></i><i style="background:linear-gradient(90deg,#daff12 0px,#fffd0a 88px,#ffd300 197px,#ffc300 246px)"></i><i style="background:linear-gradient(90deg,#daff12 0px,#fffe0b 87px,#ffd300 196px,#ffc300 246px)"></i><i style="background:linear-gradient(90deg,#dbff13 0px,#fffe0b 86px,#ffd300 195px,#ffc300 246px)"></i><i style="background:linear-gradient(90deg,#dbff13 0px,#fffe0b 85px,#ffd301 194px,#ffc300 246px)"></i><i style="background:linear-gradient(90deg,#dbff13 0px,#fffe0b 85px,#ffd301 194px,#ffc300 246px)"></i><i style="background:linear-gradient(90deg,#dbff13 0px,#fffe0b 84px,#ffd301 192px,#ffc200 246px)"></i><i style="background:linear-gradient(90deg,#dcff13 0px,#fffe0c 83px,#ffd401 191px,#ffc200 246px)"></i><i style="background:linear-gradient(90deg,#dcff13 0px,#fffd0c 83px,#ffd301 191px,#ffc200 246px)"></i><i style="background:linear-gradient(90deg,#dcff13 0px,#fffe0c 82px,#ffd302 190px,#ffc200 246px)"></i><i style="background:linear-gradient(90deg,#ddff14 0px,#fffe0c 81px,#ffd302 189px,#ffc100 246px)"></i><i style="background:linear-gradient(90deg,#ddff14 0px,#fffe0d 80px,#ffd402 188px,#ffc100 246px)"></i><i style="background:linear-gradient(90deg,#ddff14 0px,#fffd0d 80px,#ffd302 188px,#ffc100 246px)"></i><i style="background:linear-gradient(90deg,#ddff14 0px,#fffe0d 79px,#ffd302 187px,#ffc100 246px)"></i><i style="background:linear-gradient(90deg,#deff14 0px,#fffe0d 78px,#ffd303 186px,#ffc000 246px)"></i><i style="background:linear-gradient(90deg,#deff14 0px,#fffe0e 77px,#ffd303 185px,#ffc000 246px)"></i><i style="background:linear-gradient(90deg,#deff15 0px,#fffe0e 77px,#ffd303 185px,#ffc000 246px)"></i><i style="background:linear-gradient(90deg,#dfff15 0px,#fffe0e 76px,#ffd303 184px,#ffc000 246px)"></i><i style="background:linear-gradient(90deg,#dfff15 0px,#fffe0e 75px,#ffd303 183px,#ffbf00 246px)"></i><i style="background:linear-gradient(90deg,#dfff15 0px,#fffd0e 75px,#ffd303 183px,#ffbf00 246px)"></i><i style="background:linear-gradient(90deg,#e0ff15 0px,#fffe0f 74px,#ffd304 182px,#ffbf00 246px)"></i><i style="background:linear-gradient(90deg,#e0ff15 0px,#fffe0f 73px,#ffd304 181px,#ffbf00 246px)"></i><i style="background:linear-gradient(90deg,#e0ff15 0px,#fffe0f 72px,#ffd404 179px,#ffbe00 246px)"></i><i style="background:linear-gradient(90deg,#e0ff16 0px,#fffe0f 72px,#ffd304 180px,#ffbe00 246px)"></i><i style="background:linear-gradient(90deg,#e1ff16 0px,#fffe0f 71px,#ffd305 178px,#ffbe00 246px)"></i><i style="background:linear-gradient(90deg,#e1ff16 0px,#fffe10 70px,#ffd405 177px,#ffbe00 246px)"></i><i style="background:linear-gradient(90deg,#e1ff16 0px,#fffd10 70px,#ffd305 177px,#ffbd00 246px)"></i><i style="background:linear-gradient(90deg,#e2ff16 0px,#fffe10 69px,#ffd305 176px,#ffbd00 246px)"></i><i style="background:linear-gradient(90deg,#e2ff16 0px,#fffe10 68px,#ffd305 175px,#ffbd00 246px)"></i><i style="background:linear-gradient(90deg,#e2ff17 0px,#fffe11 67px,#ffd305 174px,#ffbd00 246px)"></i><i style="background:linear-gradient(90deg,#e2ff17 0px,#fffd11 67px,#ffd306 174px,#ffbd00 246px)"></i><i style="background:linear-gradient(90deg,#e3ff17 0px,#fffe11 66px,#ffd306 173px,#ffbc00 246px)"></i><i style="background:linear-gradient(90deg,#e3ff17 0px,#fffe11 65px,#ffd306 172px,#ffbc00 246px)"></i><i style="background:linear-gradient(90deg,#e3ff17 0px,#fffd11 65px,#ffd306 172px,#ffbc00 246px)"></i><i style="background:linear-gradient(90deg,#e4ff17 0px,#fffe12 64px,#ffd306 171px,#ffbc00 246px)"></i><i style="background:linear-gradient(90deg,#e4ff18 0px,#fffe12 63px,#ffd307 170px,#fb0 246px)"></i><i style="background:linear-gradient(90deg,#e4ff18 0px,#fffe12 62px,#ffd307 169px,#fb0 246px)"></i><i style="background:linear-gradient(90deg,#e5ff18 0px,#fffd12 62px,#ffd307 169px,#fb0 246px)"></i><i style="background:linear-gradient(90deg,#e5ff18 0px,#fffe13 61px,#ffd307 168px,#ffbb01 246px)"></i><i style="background:linear-gradient(90deg,#e5ff18 0px,#fffe13 60px,#ffd307 167px,#ffba01 246px)"></i><i style="background:linear-gradient(90deg,#e6ff18 0px,#fffe13 59px,#ffd408 165px,#ffba01 246px)"></i><i style="background:linear-gradient(90deg,#e6ff19 0px,#fffe13 59px,#ffd308 165px,#ffba01 246px)"></i><i style="background:linear-gradient(90deg,#e6ff19 0px,#fffe13 58px,#ffd308 164px,#ffba01 246px)"></i><i style="background:linear-gradient(90deg,#e6ff19 0px,#fffe14 57px,#ffd408 163px,#ffb901 246px)"></i><i style="background:linear-gradient(90deg,#e7ff19 0px,#fffd14 57px,#ffd308 163px,#ffb901 246px)"></i><i style="background:linear-gradient(90deg,#e7ff19 0px,#fffe14 56px,#ffd309 162px,#ffb901 246px)"></i><i style="background:linear-gradient(90deg,#e7ff19 0px,#fffe14 55px,#ffd309 161px,#ffb901 246px)"></i><i style="background:linear-gradient(90deg,#e8ff1a 0px,#fffe15 54px,#ffd309 160px,#ffb802 246px)"></i><i style="background:linear-gradient(90deg,#e8ff1a 0px,#fffd15 54px,#ffd309 160px,#ffb802 246px)"></i><i style="background:linear-gradient(90deg,#e8ff1a 0px,#fffe15 53px,#ffd309 159px,#ffb802 246px)"></i><i style="background:linear-gradient(90deg,#e9ff1a 0px,#fffe15 52px,#ffd30a 158px,#ffb802 246px)"></i><i style="background:linear-gradient(90deg,#e9ff1a 0px,#fffd15 52px,#ffd30a 158px,#ffb802 246px)"></i><i style="background:linear-gradient(90deg,#e9ff1a 0px,#fffe16 51px,#ffd30a 157px,#ffb702 246px)"></i><i style="background:linear-gradient(90deg,#eaff1b 0px,#fffe16 50px,#ffd30a 156px,#ffb702 246px)"></i></div>
<svg class="s" width="1920" height="1044" viewBox="0 0 1920 1044" style="pointer-events:none">
<rect x="1757.7" y="220.6" width="15.8" height="15.8" fill="none" stroke="#fff" stroke-width="1.7"/>
<circle cx="1793.2" cy="219.7" r="4.7" fill="#c4bc00" stroke="#000" stroke-width="1.3"/>
<line x1="1160.2" y1="116.6" x2="1899.5" y2="116.6" stroke="#9c9c9c" stroke-width="1.5"/>
<line x1="1898.8" y1="116.6" x2="1898.8" y2="677.6" stroke="#9c9c9c" stroke-width="1.5"/>
<line x1="1153.2" y1="677.6" x2="1899.5" y2="677.6" stroke="#9c9c9c" stroke-width="1.6"/>
<line x1="1160.2" y1="115.9" x2="1160.2" y2="684.6" stroke="#9c9c9c" stroke-width="1.6"/>
<line x1="1153.2" y1="677.5" x2="1160.2" y2="677.5" stroke="#d0d0d0" stroke-width="1.6"/>
<line x1="1160" y1="677.6" x2="1160" y2="684.6" stroke="#d0d0d0" stroke-width="1.8"/>
<line x1="1153.2" y1="610.83" x2="1160.2" y2="610.83" stroke="#d0d0d0" stroke-width="1.6"/>
<line x1="1247.9" y1="677.6" x2="1247.9" y2="684.6" stroke="#d0d0d0" stroke-width="1.8"/>
<line x1="1153.2" y1="544.16" x2="1160.2" y2="544.16" stroke="#d0d0d0" stroke-width="1.6"/>
<line x1="1335.8" y1="677.6" x2="1335.8" y2="684.6" stroke="#d0d0d0" stroke-width="1.8"/>
<line x1="1153.2" y1="477.49" x2="1160.2" y2="477.49" stroke="#d0d0d0" stroke-width="1.6"/>
<line x1="1423.7" y1="677.6" x2="1423.7" y2="684.6" stroke="#d0d0d0" stroke-width="1.8"/>
<line x1="1153.2" y1="410.82" x2="1160.2" y2="410.82" stroke="#d0d0d0" stroke-width="1.6"/>
<line x1="1511.6" y1="677.6" x2="1511.6" y2="684.6" stroke="#d0d0d0" stroke-width="1.8"/>
<line x1="1153.2" y1="344.15" x2="1160.2" y2="344.15" stroke="#d0d0d0" stroke-width="1.6"/>
<line x1="1599.5" y1="677.6" x2="1599.5" y2="684.6" stroke="#d0d0d0" stroke-width="1.8"/>
<line x1="1153.2" y1="277.48" x2="1160.2" y2="277.48" stroke="#d0d0d0" stroke-width="1.6"/>
<line x1="1687.4" y1="677.6" x2="1687.4" y2="684.6" stroke="#d0d0d0" stroke-width="1.8"/>
<line x1="1153.2" y1="210.81" x2="1160.2" y2="210.81" stroke="#d0d0d0" stroke-width="1.6"/>
<line x1="1775.3" y1="677.6" x2="1775.3" y2="684.6" stroke="#d0d0d0" stroke-width="1.8"/>
<line x1="1153.2" y1="144.14" x2="1160.2" y2="144.14" stroke="#d0d0d0" stroke-width="1.6"/>
<line x1="1863.2" y1="677.6" x2="1863.2" y2="684.6" stroke="#d0d0d0" stroke-width="1.8"/>
<rect x="1424.1" y="412.3" width="15.8" height="15.8" fill="none" stroke="#fff" stroke-width="1.7"/>
<rect x="1422.6" y="377.1" width="15.8" height="15.8" fill="none" stroke="#fff" stroke-width="1.7"/>
<rect x="1419.4" y="342.6" width="15.8" height="15.8" fill="none" stroke="#fff" stroke-width="1.7"/>
<rect x="1417.8" y="307" width="15.8" height="15.8" fill="none" stroke="#fff" stroke-width="1.7"/>
<rect x="1414.4" y="267.8" width="15.8" height="15.8" fill="none" stroke="#fff" stroke-width="1.7"/>
<rect x="1445.8" y="425" width="15.8" height="15.8" fill="none" stroke="#fff" stroke-width="1.7"/>
<rect x="1464.5" y="400.1" width="15.8" height="15.8" fill="none" stroke="#fff" stroke-width="1.7"/>
<rect x="1483.1" y="378.4" width="15.8" height="15.8" fill="none" stroke="#fff" stroke-width="1.7"/>
<rect x="1500.1" y="356.5" width="15.8" height="15.8" fill="none" stroke="#fff" stroke-width="1.7"/>
<rect x="1520.2" y="332.1" width="15.8" height="15.8" fill="none" stroke="#fff" stroke-width="1.7"/>
<rect x="1411.7" y="450.1" width="15.8" height="15.8" fill="none" stroke="#fff" stroke-width="1.7"/>
<rect x="1396.9" y="450.1" width="15.8" height="15.8" fill="none" stroke="#fff" stroke-width="1.7"/>
<rect x="1381.4" y="450.1" width="15.8" height="15.8" fill="none" stroke="#fff" stroke-width="1.7"/>
<rect x="1365.3" y="450.1" width="15.8" height="15.8" fill="none" stroke="#fff" stroke-width="1.7"/>
<rect x="1348.9" y="450.1" width="15.8" height="15.8" fill="none" stroke="#fff" stroke-width="1.7"/>
<rect x="1397.6" y="485.5" width="15.8" height="15.8" fill="none" stroke="#fff" stroke-width="1.7"/>
<rect x="1369.6" y="521.1" width="15.8" height="15.8" fill="none" stroke="#fff" stroke-width="1.7"/>
<rect x="1341.7" y="555.3" width="15.8" height="15.8" fill="none" stroke="#fff" stroke-width="1.7"/>
<rect x="1314.1" y="589.6" width="15.8" height="15.8" fill="none" stroke="#fff" stroke-width="1.7"/>
<rect x="1282.7" y="628.2" width="15.8" height="15.8" fill="none" stroke="#fff" stroke-width="1.7"/>
<rect x="1428.6" y="473.1" width="15.8" height="15.8" fill="none" stroke="#fff" stroke-width="1.7"/>
<rect x="1430" y="498" width="15.8" height="15.8" fill="none" stroke="#fff" stroke-width="1.7"/>
<rect x="1430" y="518" width="15.8" height="15.8" fill="none" stroke="#fff" stroke-width="1.7"/>
<rect x="1431.5" y="541.6" width="15.8" height="15.8" fill="none" stroke="#fff" stroke-width="1.7"/>
<rect x="1433.2" y="566" width="15.8" height="15.8" fill="none" stroke="#fff" stroke-width="1.7"/>
<rect x="1483.1" y="448" width="15.8" height="15.8" fill="none" stroke="#fff" stroke-width="1.7"/>
<rect x="1542.1" y="448" width="15.8" height="15.8" fill="none" stroke="#fff" stroke-width="1.7"/>
<rect x="1594.6" y="448" width="15.8" height="15.8" fill="none" stroke="#fff" stroke-width="1.7"/>
<rect x="1650.5" y="448" width="15.8" height="15.8" fill="none" stroke="#fff" stroke-width="1.7"/>
<rect x="1714" y="448" width="15.8" height="15.8" fill="none" stroke="#fff" stroke-width="1.7"/>
<circle cx="1436.4" cy="419" r="4.7" fill="rgb(161, 197, 161)" stroke="#000" stroke-width="1.3"/>
<circle cx="1433.5" cy="384.9" r="4.7" fill="rgb(136, 197, 136)" stroke="#000" stroke-width="1.3"/>
<circle cx="1432" cy="350.7" r="4.7" fill="rgb(111, 197, 111)" stroke="#000" stroke-width="1.3"/>
<circle cx="1429" cy="312" r="4.7" fill="rgb(74, 197, 74)" stroke="#000" stroke-width="1.3"/>
<circle cx="1425.9" cy="272.8" r="4.7" fill="rgb(0, 197, 0)" stroke="#000" stroke-width="1.3"/>
<circle cx="1456.6" cy="429.9" r="4.7" fill="rgb(197, 197, 161)" stroke="#000" stroke-width="1.3"/>
<circle cx="1475.4" cy="407.8" r="4.7" fill="rgb(197, 197, 136)" stroke="#000" stroke-width="1.3"/>
<circle cx="1494.1" cy="384.9" r="4.7" fill="rgb(197, 197, 111)" stroke="#000" stroke-width="1.3"/>
<circle cx="1512.5" cy="363.1" r="4.7" fill="rgb(197, 197, 74)" stroke="#000" stroke-width="1.3"/>
<circle cx="1532.7" cy="338.1" r="4.7" fill="rgb(197, 197, 0)" stroke="#000" stroke-width="1.3"/>
<circle cx="1422.1" cy="452.8" r="4.7" fill="rgb(161, 197, 197)" stroke="#000" stroke-width="1.3"/>
<circle cx="1407" cy="452.5" r="4.7" fill="rgb(136, 197, 197)" stroke="#000" stroke-width="1.3"/>
<circle cx="1391.4" cy="452.8" r="4.7" fill="rgb(111, 197, 197)" stroke="#000" stroke-width="1.3"/>
<circle cx="1374.3" cy="452.8" r="4.7" fill="rgb(74, 197, 197)" stroke="#000" stroke-width="1.3"/>
<circle cx="1357.4" cy="452.8" r="4.7" fill="rgb(0, 197, 197)" stroke="#000" stroke-width="1.3"/>
<circle cx="1410.1" cy="488.6" r="4.7" fill="rgb(161, 161, 197)" stroke="#000" stroke-width="1.3"/>
<circle cx="1380.6" cy="524.4" r="4.7" fill="rgb(136, 136, 197)" stroke="#000" stroke-width="1.3"/>
<circle cx="1352.8" cy="560" r="4.7" fill="rgb(111, 111, 197)" stroke="#000" stroke-width="1.3"/>
<circle cx="1318.9" cy="600.2" r="4.7" fill="rgb(74, 74, 197)" stroke="#000" stroke-width="1.3"/>
<circle cx="1285.8" cy="640.7" r="4.7" fill="rgb(0, 0, 197)" stroke="#000" stroke-width="1.3"/>
<circle cx="1439.6" cy="476.4" r="4.7" fill="rgb(197, 161, 197)" stroke="#000" stroke-width="1.3"/>
<circle cx="1440.9" cy="499.5" r="4.7" fill="rgb(197, 136, 197)" stroke="#000" stroke-width="1.3"/>
<circle cx="1442.6" cy="521.4" r="4.7" fill="rgb(197, 111, 197)" stroke="#000" stroke-width="1.3"/>
<circle cx="1444.2" cy="546.1" r="4.7" fill="rgb(197, 74, 197)" stroke="#000" stroke-width="1.3"/>
<circle cx="1447.2" cy="570.7" r="4.7" fill="rgb(197, 0, 197)" stroke="#000" stroke-width="1.3"/>
<circle cx="1493.9" cy="454.4" r="4.7" fill="rgb(197, 132, 132)" stroke="#000" stroke-width="1.3"/>
<circle cx="1551" cy="454.4" r="4.7" fill="rgb(197, 104, 104)" stroke="#000" stroke-width="1.3"/>
<circle cx="1605.8" cy="454.4" r="4.7" fill="rgb(197, 86, 86)" stroke="#000" stroke-width="1.3"/>
<circle cx="1666.3" cy="454.4" r="4.7" fill="rgb(197, 70, 70)" stroke="#000" stroke-width="1.3"/>
<circle cx="1721.9" cy="454.4" r="4.7" fill="rgb(197, 0, 0)" stroke="#000" stroke-width="1.3"/>
<rect x="1426.8" y="449.8" width="16.4" height="16.4" fill="none" stroke="#000" stroke-width="1.8"/>
<circle cx="1441.1" cy="450" r="4.7" fill="#fff" stroke="#000" stroke-width="1.3"/>
</svg>
</body></html>
